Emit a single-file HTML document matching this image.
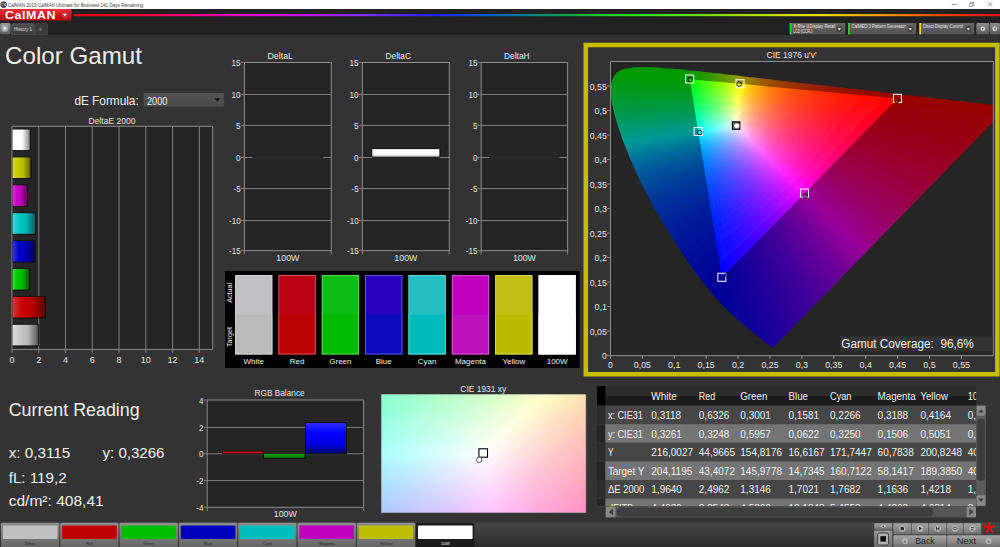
<!DOCTYPE html>
<html><head><meta charset="utf-8"><title>CalMAN Color Gamut</title>
<style>html,body{margin:0;padding:0;background:#333;overflow:hidden}svg{display:block}text{font-family:'Liberation Sans', sans-serif;white-space:pre}</style>
</head><body>
<svg width="1000" height="547" viewBox="0 0 1000 547">
<defs>
<linearGradient id="g1" x1="0" y1="0" x2="1" y2="1"><stop offset="0" stop-color="#30c040"/><stop offset="0.5" stop-color="#3060e0"/><stop offset="1" stop-color="#d030c0"/></linearGradient>
<linearGradient id="g2" x1="74" y1="0" x2="1000" y2="0" gradientUnits="userSpaceOnUse"><stop offset="0" stop-color="#e80010"/><stop offset="0.05" stop-color="#f00020"/><stop offset="0.1" stop-color="#ff0060"/><stop offset="0.15" stop-color="#f000a0"/><stop offset="0.21" stop-color="#e000e0"/><stop offset="0.28" stop-color="#a020f0"/><stop offset="0.31" stop-color="#8030ff"/><stop offset="0.39" stop-color="#2020ff"/><stop offset="0.45" stop-color="#0060c8"/><stop offset="0.49" stop-color="#008088"/><stop offset="0.54" stop-color="#00b040"/><stop offset="0.58" stop-color="#20d020"/><stop offset="0.63" stop-color="#40e010"/><stop offset="0.72" stop-color="#a0e000"/><stop offset="0.8" stop-color="#e8e000"/><stop offset="0.87" stop-color="#f0a000"/><stop offset="0.94" stop-color="#f04000"/><stop offset="1" stop-color="#e81010"/></linearGradient>
<linearGradient id="g3" x1="0" y1="0" x2="0" y2="1"><stop offset="0" stop-color="#ef3038"/><stop offset="0.45" stop-color="#dc1a22"/><stop offset="0.55" stop-color="#cc0f18"/><stop offset="1" stop-color="#b80a12"/></linearGradient>
<linearGradient id="g4" x1="0" y1="0" x2="0" y2="1"><stop offset="0" stop-color="#9a9a9a"/><stop offset="1" stop-color="#5a5a5a"/></linearGradient>
<linearGradient id="g5" x1="0" y1="0" x2="0" y2="1"><stop offset="0" stop-color="#525252"/><stop offset="1" stop-color="#3c3c3c"/></linearGradient>
<linearGradient id="g6" x1="0" y1="0" x2="0" y2="1"><stop offset="0" stop-color="#666666"/><stop offset="1" stop-color="#525252"/></linearGradient>
<linearGradient id="g7" x1="0" y1="0" x2="0" y2="1"><stop offset="0" stop-color="#666666"/><stop offset="1" stop-color="#525252"/></linearGradient>
<linearGradient id="g8" x1="0" y1="0" x2="0" y2="1"><stop offset="0" stop-color="#666666"/><stop offset="1" stop-color="#525252"/></linearGradient>
<linearGradient id="g9" x1="0" y1="0" x2="0" y2="1"><stop offset="0" stop-color="#8c8c8c"/><stop offset="1" stop-color="#5a5a5a"/></linearGradient>
<linearGradient id="g10" x1="0" y1="0" x2="0" y2="1"><stop offset="0" stop-color="#555555"/><stop offset="1" stop-color="#484848"/></linearGradient>
<linearGradient id="g11" x1="0" y1="0" x2="1" y2="0"><stop offset="0" stop-color="#ffffff"/><stop offset="0.55" stop-color="#ffffff"/><stop offset="1" stop-color="#8a8a8a"/></linearGradient>
<linearGradient id="g12" x1="0" y1="0" x2="1" y2="0"><stop offset="0" stop-color="#d8d838"/><stop offset="0.3" stop-color="#c8c800"/><stop offset="0.6" stop-color="#baba00"/><stop offset="1" stop-color="#5e5e00"/></linearGradient>
<linearGradient id="g13" x1="0" y1="0" x2="1" y2="0"><stop offset="0" stop-color="#d838d8"/><stop offset="0.3" stop-color="#c800c8"/><stop offset="0.6" stop-color="#ba00ba"/><stop offset="1" stop-color="#5e005e"/></linearGradient>
<linearGradient id="g14" x1="0" y1="0" x2="1" y2="0"><stop offset="0" stop-color="#38d8d8"/><stop offset="0.3" stop-color="#00c8c8"/><stop offset="0.6" stop-color="#00baba"/><stop offset="1" stop-color="#005e5e"/></linearGradient>
<linearGradient id="g15" x1="0" y1="0" x2="1" y2="0"><stop offset="0" stop-color="#3838d8"/><stop offset="0.3" stop-color="#0000c8"/><stop offset="0.6" stop-color="#0000ba"/><stop offset="1" stop-color="#00005e"/></linearGradient>
<linearGradient id="g16" x1="0" y1="0" x2="1" y2="0"><stop offset="0" stop-color="#38d838"/><stop offset="0.3" stop-color="#00c800"/><stop offset="0.6" stop-color="#00ba00"/><stop offset="1" stop-color="#005e00"/></linearGradient>
<linearGradient id="g17" x1="0" y1="0" x2="1" y2="0"><stop offset="0" stop-color="#d83838"/><stop offset="0.3" stop-color="#c80000"/><stop offset="0.6" stop-color="#ba0000"/><stop offset="1" stop-color="#5e0000"/></linearGradient>
<linearGradient id="g18" x1="0" y1="0" x2="1" y2="0"><stop offset="0" stop-color="#dcdcdc"/><stop offset="0.3" stop-color="#c8c8c8"/><stop offset="0.6" stop-color="#bababa"/><stop offset="1" stop-color="#5e5e5e"/></linearGradient>
<linearGradient id="g19" x1="0" y1="0" x2="0" y2="1"><stop offset="0" stop-color="#ffffff"/><stop offset="0.55" stop-color="#ffffff"/><stop offset="0.8" stop-color="#e0e0e0"/><stop offset="1" stop-color="#8a8a8a"/></linearGradient>
<clipPath id="plotclip"><rect x="611" y="62" width="381.8" height="293.1"/></clipPath>
<clipPath id="locus" clip-path="url(#plotclip)"><path d="M773.88 346.82 773.83 346.81 773.78 346.79 773.73 346.82 773.67 346.89 773.58 346.9 773.47 346.87 773.36 346.86 773.29 346.94 773.24 347.03 773.18 347.09 773.09 347.12 772.94 347.13 772.76 347.12 772.55 347.09 772.37 347.09 772.18 347.1 771.95 347.07 771.7 347.01 771.38 346.88 770.91 346.62 770.31 346.26 769.63 345.8 768.87 345.25 768 344.59 767 343.81 765.84 342.9 764.53 341.85 763.09 340.65 761.51 339.29 759.77 337.8 757.87 336.2 755.75 334.45 753.38 332.49 750.76 330.33 747.88 327.96 744.79 325.41 741.46 322.63 737.85 319.54 733.92 316.07 729.73 312.2 725.28 307.89 720.44 302.92 714.99 296.87 708.77 289.49 701.93 280.89 694.7 271.23 687.09 260.49 679.15 248.6 671.02 235.72 662.83 222.15 654.73 208.19 646.94 194.01 639.79 179.89 633.49 166.18 627.96 153.12 623.18 140.89 619.23 129.73 616.12 119.78 613.81 111.05 612.21 103.41 611.24 96.81 610.88 91.18 611.07 86.31 611.76 82.1 612.96 78.53 614.61 75.53 616.66 73.1 619.08 71.21 621.8 69.81 624.75 68.81 627.9 68.15 631.24 67.74 634.72 67.48 638.32 67.35 641.94 67.29 645.56 67.3 649.2 67.36 652.9 67.47 656.67 67.63 660.55 67.85 664.54 68.11 668.66 68.42 672.92 68.77 677.33 69.16 681.9 69.59 686.66 70.06 691.6 70.56 696.75 71.1 702.11 71.67 707.68 72.28 713.5 72.92 719.55 73.59 725.86 74.3 732.42 75.04 739.24 75.82 746.33 76.63 753.7 77.47 761.33 78.35 769.22 79.26 777.37 80.19 785.77 81.16 794.41 82.15 803.25 83.16 812.28 84.2 821.48 85.25 830.82 86.33 840.19 87.41 849.43 88.47 858.48 89.51 867.44 90.54 876.38 91.56 885.16 92.57 893.59 93.53 901.63 94.45 909.3 95.33 916.63 96.17 923.58 96.97 930.1 97.72 936.21 98.42 941.89 99.07 947.19 99.68 952.13 100.25 956.73 100.77 961.01 101.26 965.04 101.73 968.88 102.17 972.5 102.58 975.88 102.97 979.04 103.34 981.97 103.67 984.68 103.98 987.17 104.27 989.4 104.53 991.35 104.75 993.1 104.95 994.72 105.14 996.18 105.31 997.5 105.46 998.67 105.59 999.69 105.71 1000.54 105.81 1001.25 105.89 1001.89 105.96 1002.52 106.03 1003.1 106.1 1003.62 106.16 1004.1 106.22 1004.57 106.27 1005.05 106.33 1005.52 106.38 1005.98 106.43 1006.41 106.48 1006.77 106.52 1007.01 106.55 1007.19 106.57 1007.35 106.59 1007.48 106.61 1007.59 106.62 1007.68 106.63 1007.71 106.63z"/></clipPath>
<filter id="sm" filterUnits="userSpaceOnUse" x="600" y="55" width="400" height="305"><feGaussianBlur stdDeviation="0.9"/></filter>
<linearGradient id="g20" x1="628.5" y1="0" x2="661.5" y2="0" gradientUnits="userSpaceOnUse"><stop offset="0" stop-color="#00ff00"/><stop offset="1" stop-color="#00ff00"/></linearGradient>
<linearGradient id="g21" x1="618.5" y1="0" x2="686.5" y2="0" gradientUnits="userSpaceOnUse"><stop offset="0" stop-color="#00ff00"/><stop offset="1" stop-color="#00ff00"/></linearGradient>
<linearGradient id="g22" x1="614.5" y1="0" x2="705.5" y2="0" gradientUnits="userSpaceOnUse"><stop offset="0" stop-color="#00ff00"/><stop offset="0.81" stop-color="#00ff00"/><stop offset="1" stop-color="#45ff00"/></linearGradient>
<linearGradient id="g23" x1="612.5" y1="0" x2="724.5" y2="0" gradientUnits="userSpaceOnUse"><stop offset="0" stop-color="#00ff02"/><stop offset="0.07" stop-color="#00ff00"/><stop offset="0.68" stop-color="#00ff00"/><stop offset="0.75" stop-color="#1eff00"/><stop offset="0.84" stop-color="#49ff00"/><stop offset="0.92" stop-color="#72ff00"/><stop offset="1" stop-color="#9fff00"/></linearGradient>
<linearGradient id="g24" x1="611.5" y1="0" x2="741.5" y2="0" gradientUnits="userSpaceOnUse"><stop offset="0" stop-color="#00ff08"/><stop offset="0.23" stop-color="#00ff00"/><stop offset="0.59" stop-color="#00ff00"/><stop offset="0.6" stop-color="#02ff00"/><stop offset="0.7" stop-color="#36ff00"/><stop offset="0.8" stop-color="#72ff00"/><stop offset="0.88" stop-color="#aaff00"/><stop offset="0.94" stop-color="#d2ff00"/><stop offset="0.99" stop-color="#fcff00"/><stop offset="1" stop-color="#fffc00"/></linearGradient>
<linearGradient id="g25" x1="609.5" y1="0" x2="759.5" y2="0" gradientUnits="userSpaceOnUse"><stop offset="0" stop-color="#00ff0d"/><stop offset="0.36" stop-color="#00ff00"/><stop offset="0.53" stop-color="#01ff00"/><stop offset="0.63" stop-color="#3aff00"/><stop offset="0.71" stop-color="#76ff00"/><stop offset="0.79" stop-color="#b6ff00"/><stop offset="0.87" stop-color="#fdff00"/><stop offset="0.88" stop-color="#fffb00"/><stop offset="0.91" stop-color="#ffe300"/><stop offset="0.93" stop-color="#ffcf00"/><stop offset="0.97" stop-color="#ffba00"/><stop offset="1" stop-color="#ffa700"/></linearGradient>
<linearGradient id="g26" x1="609.5" y1="0" x2="776.5" y2="0" gradientUnits="userSpaceOnUse"><stop offset="0" stop-color="#00ff13"/><stop offset="0.48" stop-color="#00ff00"/><stop offset="0.56" stop-color="#35ff00"/><stop offset="0.64" stop-color="#76ff00"/><stop offset="0.71" stop-color="#b6ff00"/><stop offset="0.78" stop-color="#feff00"/><stop offset="0.81" stop-color="#ffe800"/><stop offset="0.83" stop-color="#ffd300"/><stop offset="0.88" stop-color="#ffb100"/><stop offset="0.93" stop-color="#ff9300"/><stop offset="1" stop-color="#ff7700"/></linearGradient>
<linearGradient id="g27" x1="608.5" y1="0" x2="794.5" y2="0" gradientUnits="userSpaceOnUse"><stop offset="0" stop-color="#00ff18"/><stop offset="0.24" stop-color="#00ff10"/><stop offset="0.44" stop-color="#00ff06"/><stop offset="0.45" stop-color="#06ff05"/><stop offset="0.5" stop-color="#30ff02"/><stop offset="0.58" stop-color="#71ff00"/><stop offset="0.65" stop-color="#b6ff00"/><stop offset="0.71" stop-color="#fffe00"/><stop offset="0.74" stop-color="#ffe100"/><stop offset="0.76" stop-color="#ffc800"/><stop offset="0.8" stop-color="#ffb000"/><stop offset="0.83" stop-color="#ff9b00"/><stop offset="0.87" stop-color="#ff8700"/><stop offset="0.91" stop-color="#ff7400"/><stop offset="0.95" stop-color="#ff6400"/><stop offset="1" stop-color="#ff5500"/></linearGradient>
<linearGradient id="g28" x1="607.5" y1="0" x2="811.5" y2="0" gradientUnits="userSpaceOnUse"><stop offset="0" stop-color="#00ff1e"/><stop offset="0.22" stop-color="#00ff16"/><stop offset="0.41" stop-color="#01ff0d"/><stop offset="0.47" stop-color="#38ff09"/><stop offset="0.53" stop-color="#76ff04"/><stop offset="0.59" stop-color="#b7ff00"/><stop offset="0.65" stop-color="#faff00"/><stop offset="0.65" stop-color="#fffd00"/><stop offset="0.68" stop-color="#ffda00"/><stop offset="0.72" stop-color="#ffba00"/><stop offset="0.75" stop-color="#ffa000"/><stop offset="0.79" stop-color="#ff8800"/><stop offset="0.83" stop-color="#ff7300"/><stop offset="0.88" stop-color="#ff5f00"/><stop offset="0.94" stop-color="#ff4e00"/><stop offset="1" stop-color="#ff3e00"/></linearGradient>
<linearGradient id="g29" x1="607.5" y1="0" x2="828.5" y2="0" gradientUnits="userSpaceOnUse"><stop offset="0" stop-color="#00ff24"/><stop offset="0.38" stop-color="#00ff14"/><stop offset="0.43" stop-color="#37ff11"/><stop offset="0.49" stop-color="#75ff0d"/><stop offset="0.55" stop-color="#b7ff09"/><stop offset="0.6" stop-color="#fbff04"/><stop offset="0.6" stop-color="#fffc04"/><stop offset="0.62" stop-color="#ffe402"/><stop offset="0.64" stop-color="#ffcf00"/><stop offset="0.67" stop-color="#ffb100"/><stop offset="0.71" stop-color="#ff9500"/><stop offset="0.75" stop-color="#ff7a00"/><stop offset="0.8" stop-color="#ff6300"/><stop offset="0.86" stop-color="#ff4e00"/><stop offset="0.93" stop-color="#ff3c00"/><stop offset="1" stop-color="#ff2c00"/></linearGradient>
<linearGradient id="g30" x1="607.5" y1="0" x2="846.5" y2="0" gradientUnits="userSpaceOnUse"><stop offset="0" stop-color="#00ff2a"/><stop offset="0.35" stop-color="#00ff1c"/><stop offset="0.35" stop-color="#02ff1c"/><stop offset="0.39" stop-color="#2dff19"/><stop offset="0.45" stop-color="#70ff16"/><stop offset="0.5" stop-color="#b2ff12"/><stop offset="0.55" stop-color="#fdff0e"/><stop offset="0.56" stop-color="#fffb0d"/><stop offset="0.57" stop-color="#ffe20b"/><stop offset="0.59" stop-color="#ffce08"/><stop offset="0.62" stop-color="#ffac05"/><stop offset="0.67" stop-color="#ff8b01"/><stop offset="0.72" stop-color="#ff6e00"/><stop offset="0.77" stop-color="#ff5600"/><stop offset="0.84" stop-color="#ff4000"/><stop offset="0.91" stop-color="#ff2e00"/><stop offset="1" stop-color="#ff1e00"/></linearGradient>
<linearGradient id="g31" x1="607.5" y1="0" x2="863.5" y2="0" gradientUnits="userSpaceOnUse"><stop offset="0" stop-color="#00ff2f"/><stop offset="0.33" stop-color="#01ff24"/><stop offset="0.38" stop-color="#35ff21"/><stop offset="0.42" stop-color="#70ff1f"/><stop offset="0.47" stop-color="#b2ff1b"/><stop offset="0.49" stop-color="#d7ff1a"/><stop offset="0.52" stop-color="#feff18"/><stop offset="0.52" stop-color="#fff917"/><stop offset="0.54" stop-color="#ffe114"/><stop offset="0.55" stop-color="#ffcc11"/><stop offset="0.57" stop-color="#ffb60e"/><stop offset="0.59" stop-color="#ffa30b"/><stop offset="0.61" stop-color="#ff9008"/><stop offset="0.64" stop-color="#ff7f06"/><stop offset="0.69" stop-color="#ff6302"/><stop offset="0.75" stop-color="#ff4900"/><stop offset="0.82" stop-color="#ff3400"/><stop offset="0.9" stop-color="#ff2200"/><stop offset="1" stop-color="#ff1300"/></linearGradient>
<linearGradient id="g32" x1="607.5" y1="0" x2="881.5" y2="0" gradientUnits="userSpaceOnUse"><stop offset="0" stop-color="#00ff35"/><stop offset="0.31" stop-color="#00ff2c"/><stop offset="0.35" stop-color="#34ff2a"/><stop offset="0.4" stop-color="#74ff27"/><stop offset="0.44" stop-color="#b8ff25"/><stop offset="0.48" stop-color="#ffff22"/><stop offset="0.5" stop-color="#ffe61e"/><stop offset="0.51" stop-color="#ffcb19"/><stop offset="0.53" stop-color="#ffb515"/><stop offset="0.55" stop-color="#ff9e12"/><stop offset="0.58" stop-color="#ff8b0e"/><stop offset="0.6" stop-color="#ff7b0c"/><stop offset="0.62" stop-color="#ff6b09"/><stop offset="0.65" stop-color="#ff5c06"/><stop offset="0.72" stop-color="#ff4202"/><stop offset="0.8" stop-color="#ff2c00"/><stop offset="0.89" stop-color="#ff1900"/><stop offset="1" stop-color="#ff0900"/></linearGradient>
<linearGradient id="g33" x1="607.5" y1="0" x2="898.5" y2="0" gradientUnits="userSpaceOnUse"><stop offset="0" stop-color="#00ff3b"/><stop offset="0.29" stop-color="#00ff34"/><stop offset="0.3" stop-color="#07ff34"/><stop offset="0.33" stop-color="#2eff33"/><stop offset="0.37" stop-color="#6fff31"/><stop offset="0.41" stop-color="#b3ff2f"/><stop offset="0.45" stop-color="#faff2d"/><stop offset="0.45" stop-color="#fffe2c"/><stop offset="0.47" stop-color="#ffde26"/><stop offset="0.49" stop-color="#ffc521"/><stop offset="0.51" stop-color="#ffaf1c"/><stop offset="0.53" stop-color="#ff9918"/><stop offset="0.55" stop-color="#ff8414"/><stop offset="0.57" stop-color="#ff7310"/><stop offset="0.6" stop-color="#ff620d"/><stop offset="0.63" stop-color="#ff530a"/><stop offset="0.7" stop-color="#ff3904"/><stop offset="0.78" stop-color="#ff2300"/><stop offset="0.88" stop-color="#ff1100"/><stop offset="1" stop-color="#ff0200"/></linearGradient>
<linearGradient id="g34" x1="607.5" y1="0" x2="916.5" y2="0" gradientUnits="userSpaceOnUse"><stop offset="0" stop-color="#00ff41"/><stop offset="0.28" stop-color="#01ff3c"/><stop offset="0.31" stop-color="#37ff3b"/><stop offset="0.35" stop-color="#74ff3a"/><stop offset="0.39" stop-color="#adff39"/><stop offset="0.4" stop-color="#d3ff38"/><stop offset="0.42" stop-color="#fbff37"/><stop offset="0.43" stop-color="#fffc37"/><stop offset="0.44" stop-color="#ffdd2f"/><stop offset="0.46" stop-color="#ffc329"/><stop offset="0.48" stop-color="#ffaa23"/><stop offset="0.5" stop-color="#ff921e"/><stop offset="0.52" stop-color="#ff7e19"/><stop offset="0.55" stop-color="#ff6b14"/><stop offset="0.58" stop-color="#ff5a10"/><stop offset="0.61" stop-color="#ff4a0d"/><stop offset="0.65" stop-color="#ff3c09"/><stop offset="0.69" stop-color="#ff2e06"/><stop offset="0.79" stop-color="#ff1801"/><stop offset="0.86" stop-color="#ff0b00"/><stop offset="0.94" stop-color="#ff0100"/><stop offset="1" stop-color="#ff0000"/></linearGradient>
<linearGradient id="g35" x1="607.5" y1="0" x2="933.5" y2="0" gradientUnits="userSpaceOnUse"><stop offset="0" stop-color="#00ff47"/><stop offset="0.26" stop-color="#00ff45"/><stop offset="0.29" stop-color="#31ff44"/><stop offset="0.33" stop-color="#6eff44"/><stop offset="0.37" stop-color="#b3ff43"/><stop offset="0.4" stop-color="#fcff42"/><stop offset="0.4" stop-color="#fffb41"/><stop offset="0.42" stop-color="#ffdc39"/><stop offset="0.44" stop-color="#ffbd31"/><stop offset="0.46" stop-color="#ffa129"/><stop offset="0.48" stop-color="#ff8a23"/><stop offset="0.51" stop-color="#ff751d"/><stop offset="0.53" stop-color="#ff6218"/><stop offset="0.56" stop-color="#ff5214"/><stop offset="0.6" stop-color="#ff420f"/><stop offset="0.64" stop-color="#ff320b"/><stop offset="0.68" stop-color="#ff2508"/><stop offset="0.74" stop-color="#ff1904"/><stop offset="0.79" stop-color="#ff0e01"/><stop offset="0.9" stop-color="#ff0000"/><stop offset="1" stop-color="#ff0000"/></linearGradient>
<linearGradient id="g36" x1="607.5" y1="0" x2="950.5" y2="0" gradientUnits="userSpaceOnUse"><stop offset="0" stop-color="#00ff4d"/><stop offset="0.25" stop-color="#00ff4d"/><stop offset="0.25" stop-color="#03ff4d"/><stop offset="0.28" stop-color="#2bff4d"/><stop offset="0.31" stop-color="#68ff4d"/><stop offset="0.35" stop-color="#aeff4e"/><stop offset="0.36" stop-color="#d4ff4e"/><stop offset="0.38" stop-color="#fdff4e"/><stop offset="0.38" stop-color="#fffa4c"/><stop offset="0.4" stop-color="#ffd541"/><stop offset="0.42" stop-color="#ffb738"/><stop offset="0.44" stop-color="#ff9c2f"/><stop offset="0.46" stop-color="#ff8629"/><stop offset="0.49" stop-color="#ff6f22"/><stop offset="0.51" stop-color="#ff5d1c"/><stop offset="0.54" stop-color="#ff4c17"/><stop offset="0.58" stop-color="#ff3c12"/><stop offset="0.62" stop-color="#ff2b0d"/><stop offset="0.68" stop-color="#ff1d09"/><stop offset="0.74" stop-color="#ff1005"/><stop offset="0.8" stop-color="#ff0502"/><stop offset="0.85" stop-color="#ff0000"/><stop offset="1" stop-color="#ff0000"/></linearGradient>
<linearGradient id="g37" x1="608.5" y1="0" x2="968.5" y2="0" gradientUnits="userSpaceOnUse"><stop offset="0" stop-color="#00ff54"/><stop offset="0.24" stop-color="#01ff56"/><stop offset="0.27" stop-color="#39ff57"/><stop offset="0.3" stop-color="#78ff58"/><stop offset="0.33" stop-color="#bbff58"/><stop offset="0.36" stop-color="#ffff59"/><stop offset="0.38" stop-color="#ffd94c"/><stop offset="0.39" stop-color="#ffba42"/><stop offset="0.41" stop-color="#ff9e38"/><stop offset="0.44" stop-color="#ff8430"/><stop offset="0.46" stop-color="#ff6e28"/><stop offset="0.49" stop-color="#ff5921"/><stop offset="0.52" stop-color="#ff471b"/><stop offset="0.56" stop-color="#ff3615"/><stop offset="0.61" stop-color="#ff2610"/><stop offset="0.66" stop-color="#ff180b"/><stop offset="0.72" stop-color="#ff0b06"/><stop offset="0.8" stop-color="#ff0003"/><stop offset="0.87" stop-color="#ff0000"/><stop offset="1" stop-color="#ff0000"/></linearGradient>
<linearGradient id="g38" x1="608.5" y1="0" x2="985.5" y2="0" gradientUnits="userSpaceOnUse"><stop offset="0" stop-color="#00ff5a"/><stop offset="0.23" stop-color="#00ff5f"/><stop offset="0.26" stop-color="#38ff61"/><stop offset="0.29" stop-color="#72ff62"/><stop offset="0.32" stop-color="#b5ff63"/><stop offset="0.34" stop-color="#fffe64"/><stop offset="0.36" stop-color="#ffd756"/><stop offset="0.38" stop-color="#ffb94b"/><stop offset="0.4" stop-color="#ff993f"/><stop offset="0.42" stop-color="#ff8035"/><stop offset="0.45" stop-color="#ff682c"/><stop offset="0.47" stop-color="#ff5324"/><stop offset="0.51" stop-color="#ff411e"/><stop offset="0.54" stop-color="#ff3118"/><stop offset="0.59" stop-color="#ff2312"/><stop offset="0.64" stop-color="#ff150d"/><stop offset="0.69" stop-color="#ff0a09"/><stop offset="0.76" stop-color="#ff0005"/><stop offset="0.88" stop-color="#ff0000"/><stop offset="1" stop-color="#ff0000"/></linearGradient>
<linearGradient id="g39" x1="608.5" y1="0" x2="997.5" y2="0" gradientUnits="userSpaceOnUse"><stop offset="0" stop-color="#00ff60"/><stop offset="0.22" stop-color="#00ff69"/><stop offset="0.22" stop-color="#03ff69"/><stop offset="0.24" stop-color="#2dff6a"/><stop offset="0.28" stop-color="#6cff6c"/><stop offset="0.3" stop-color="#a8ff6e"/><stop offset="0.32" stop-color="#d0ff6f"/><stop offset="0.33" stop-color="#faff71"/><stop offset="0.33" stop-color="#fffc70"/><stop offset="0.35" stop-color="#ffd660"/><stop offset="0.37" stop-color="#ffb352"/><stop offset="0.39" stop-color="#ff9445"/><stop offset="0.41" stop-color="#ff7c3b"/><stop offset="0.43" stop-color="#ff6431"/><stop offset="0.46" stop-color="#ff5029"/><stop offset="0.5" stop-color="#ff3e21"/><stop offset="0.53" stop-color="#ff2d1b"/><stop offset="0.58" stop-color="#ff1f15"/><stop offset="0.62" stop-color="#ff1410"/><stop offset="0.73" stop-color="#ff0008"/><stop offset="0.91" stop-color="#ff0000"/><stop offset="1" stop-color="#ff0000"/></linearGradient>
<linearGradient id="g40" x1="609.5" y1="0" x2="997.5" y2="0" gradientUnits="userSpaceOnUse"><stop offset="0" stop-color="#00ff67"/><stop offset="0.22" stop-color="#01ff72"/><stop offset="0.25" stop-color="#36ff75"/><stop offset="0.28" stop-color="#72ff77"/><stop offset="0.3" stop-color="#b5ff7a"/><stop offset="0.33" stop-color="#fbff7d"/><stop offset="0.33" stop-color="#fffb7b"/><stop offset="0.35" stop-color="#ffd46a"/><stop offset="0.37" stop-color="#ffb15a"/><stop offset="0.39" stop-color="#ff934c"/><stop offset="0.41" stop-color="#ff7b42"/><stop offset="0.43" stop-color="#ff6337"/><stop offset="0.46" stop-color="#ff4f2e"/><stop offset="0.49" stop-color="#ff3c26"/><stop offset="0.53" stop-color="#ff2c1e"/><stop offset="0.57" stop-color="#ff1f19"/><stop offset="0.62" stop-color="#ff1414"/><stop offset="0.72" stop-color="#ff000b"/><stop offset="0.87" stop-color="#ff0003"/><stop offset="1" stop-color="#ff0000"/></linearGradient>
<linearGradient id="g41" x1="609.5" y1="0" x2="997.5" y2="0" gradientUnits="userSpaceOnUse"><stop offset="0" stop-color="#00ff6e"/><stop offset="0.12" stop-color="#00ff74"/><stop offset="0.22" stop-color="#00ff7c"/><stop offset="0.25" stop-color="#35ff7f"/><stop offset="0.28" stop-color="#71ff82"/><stop offset="0.3" stop-color="#b6ff86"/><stop offset="0.33" stop-color="#fdff89"/><stop offset="0.33" stop-color="#fffa87"/><stop offset="0.35" stop-color="#ffd374"/><stop offset="0.37" stop-color="#ffb063"/><stop offset="0.39" stop-color="#ff9154"/><stop offset="0.41" stop-color="#ff7949"/><stop offset="0.43" stop-color="#ff623d"/><stop offset="0.46" stop-color="#ff4e33"/><stop offset="0.49" stop-color="#ff3b2a"/><stop offset="0.53" stop-color="#ff2c23"/><stop offset="0.57" stop-color="#ff1f1d"/><stop offset="0.61" stop-color="#ff1317"/><stop offset="0.72" stop-color="#ff000e"/><stop offset="0.84" stop-color="#ff0006"/><stop offset="1" stop-color="#ff0001"/></linearGradient>
<linearGradient id="g42" x1="610.5" y1="0" x2="997.5" y2="0" gradientUnits="userSpaceOnUse"><stop offset="0" stop-color="#00ff75"/><stop offset="0.12" stop-color="#00ff7c"/><stop offset="0.22" stop-color="#00ff86"/><stop offset="0.22" stop-color="#03ff86"/><stop offset="0.24" stop-color="#2aff89"/><stop offset="0.27" stop-color="#6bff8d"/><stop offset="0.3" stop-color="#b0ff91"/><stop offset="0.32" stop-color="#d9ff94"/><stop offset="0.33" stop-color="#feff96"/><stop offset="0.33" stop-color="#fff893"/><stop offset="0.35" stop-color="#ffd17e"/><stop offset="0.36" stop-color="#ffae6c"/><stop offset="0.39" stop-color="#ff905c"/><stop offset="0.41" stop-color="#ff784f"/><stop offset="0.43" stop-color="#ff6043"/><stop offset="0.46" stop-color="#ff4c39"/><stop offset="0.49" stop-color="#ff3a2f"/><stop offset="0.53" stop-color="#ff2b27"/><stop offset="0.57" stop-color="#ff1e20"/><stop offset="0.61" stop-color="#ff131a"/><stop offset="0.71" stop-color="#ff0010"/><stop offset="0.84" stop-color="#ff0008"/><stop offset="1" stop-color="#ff0002"/></linearGradient>
<linearGradient id="g43" x1="610.5" y1="0" x2="997.5" y2="0" gradientUnits="userSpaceOnUse"><stop offset="0" stop-color="#00ff7b"/><stop offset="0.12" stop-color="#00ff85"/><stop offset="0.22" stop-color="#00ff90"/><stop offset="0.22" stop-color="#01ff90"/><stop offset="0.25" stop-color="#38ff95"/><stop offset="0.28" stop-color="#77ff99"/><stop offset="0.3" stop-color="#b7ff9e"/><stop offset="0.33" stop-color="#fffea3"/><stop offset="0.34" stop-color="#ffe997"/><stop offset="0.34" stop-color="#ffd68c"/><stop offset="0.36" stop-color="#ffb178"/><stop offset="0.38" stop-color="#ff9568"/><stop offset="0.4" stop-color="#ff7958"/><stop offset="0.43" stop-color="#ff614a"/><stop offset="0.46" stop-color="#ff4d3f"/><stop offset="0.49" stop-color="#ff3a34"/><stop offset="0.53" stop-color="#ff2b2c"/><stop offset="0.57" stop-color="#ff1e24"/><stop offset="0.61" stop-color="#ff131e"/><stop offset="0.71" stop-color="#ff0013"/><stop offset="0.83" stop-color="#ff000b"/><stop offset="1" stop-color="#ff0004"/></linearGradient>
<linearGradient id="g44" x1="611.5" y1="0" x2="997.5" y2="0" gradientUnits="userSpaceOnUse"><stop offset="0" stop-color="#00ff83"/><stop offset="0.12" stop-color="#00ff8e"/><stop offset="0.22" stop-color="#00ff9b"/><stop offset="0.25" stop-color="#37ffa0"/><stop offset="0.27" stop-color="#76ffa5"/><stop offset="0.3" stop-color="#b0ffaa"/><stop offset="0.32" stop-color="#f9ffb1"/><stop offset="0.33" stop-color="#fffdb0"/><stop offset="0.33" stop-color="#ffe7a3"/><stop offset="0.34" stop-color="#ffd497"/><stop offset="0.36" stop-color="#ffb081"/><stop offset="0.38" stop-color="#ff9370"/><stop offset="0.4" stop-color="#ff775f"/><stop offset="0.43" stop-color="#ff6050"/><stop offset="0.46" stop-color="#ff4b44"/><stop offset="0.49" stop-color="#ff3939"/><stop offset="0.53" stop-color="#ff2a30"/><stop offset="0.56" stop-color="#ff1d28"/><stop offset="0.6" stop-color="#ff1222"/><stop offset="0.7" stop-color="#ff0017"/><stop offset="0.83" stop-color="#ff000d"/><stop offset="1" stop-color="#ff0005"/></linearGradient>
<linearGradient id="g45" x1="611.5" y1="0" x2="997.5" y2="0" gradientUnits="userSpaceOnUse"><stop offset="0" stop-color="#00ff8a"/><stop offset="0.12" stop-color="#00ff96"/><stop offset="0.22" stop-color="#00ffa5"/><stop offset="0.22" stop-color="#08ffa6"/><stop offset="0.24" stop-color="#31ffaa"/><stop offset="0.27" stop-color="#70ffb1"/><stop offset="0.3" stop-color="#b1ffb7"/><stop offset="0.32" stop-color="#fbffbf"/><stop offset="0.33" stop-color="#fffbbd"/><stop offset="0.33" stop-color="#ffe5ae"/><stop offset="0.34" stop-color="#ffd2a2"/><stop offset="0.36" stop-color="#ffae8a"/><stop offset="0.38" stop-color="#ff9278"/><stop offset="0.4" stop-color="#ff7666"/><stop offset="0.43" stop-color="#ff5e57"/><stop offset="0.46" stop-color="#ff4a4a"/><stop offset="0.49" stop-color="#ff383e"/><stop offset="0.53" stop-color="#ff2834"/><stop offset="0.6" stop-color="#ff1225"/><stop offset="0.69" stop-color="#ff001a"/><stop offset="0.83" stop-color="#ff000f"/><stop offset="1" stop-color="#ff0007"/></linearGradient>
<linearGradient id="g46" x1="612.5" y1="0" x2="997.5" y2="0" gradientUnits="userSpaceOnUse"><stop offset="0" stop-color="#00ff91"/><stop offset="0.12" stop-color="#00ff9f"/><stop offset="0.22" stop-color="#00ffb0"/><stop offset="0.22" stop-color="#02ffb1"/><stop offset="0.24" stop-color="#35ffb7"/><stop offset="0.27" stop-color="#6fffbd"/><stop offset="0.3" stop-color="#b1ffc4"/><stop offset="0.32" stop-color="#fcffcd"/><stop offset="0.32" stop-color="#fffaca"/><stop offset="0.33" stop-color="#ffe4ba"/><stop offset="0.34" stop-color="#ffd1ad"/><stop offset="0.36" stop-color="#ffac94"/><stop offset="0.38" stop-color="#ff9081"/><stop offset="0.4" stop-color="#ff746d"/><stop offset="0.43" stop-color="#ff5d5d"/><stop offset="0.45" stop-color="#ff494f"/><stop offset="0.49" stop-color="#ff3742"/><stop offset="0.52" stop-color="#ff2738"/><stop offset="0.6" stop-color="#ff1229"/><stop offset="0.69" stop-color="#ff001d"/><stop offset="0.82" stop-color="#ff0011"/><stop offset="1" stop-color="#ff0008"/></linearGradient>
<linearGradient id="g47" x1="612.5" y1="0" x2="997.5" y2="0" gradientUnits="userSpaceOnUse"><stop offset="0" stop-color="#00ff98"/><stop offset="0.12" stop-color="#00ffa8"/><stop offset="0.22" stop-color="#00ffbc"/><stop offset="0.24" stop-color="#34ffc2"/><stop offset="0.27" stop-color="#6fffca"/><stop offset="0.3" stop-color="#b2ffd2"/><stop offset="0.31" stop-color="#d6ffd7"/><stop offset="0.32" stop-color="#feffdc"/><stop offset="0.32" stop-color="#fff8d7"/><stop offset="0.33" stop-color="#ffe2c7"/><stop offset="0.34" stop-color="#ffcfb9"/><stop offset="0.36" stop-color="#ffab9e"/><stop offset="0.38" stop-color="#ff8f89"/><stop offset="0.4" stop-color="#ff7375"/><stop offset="0.43" stop-color="#ff5b63"/><stop offset="0.45" stop-color="#ff4755"/><stop offset="0.49" stop-color="#ff3547"/><stop offset="0.52" stop-color="#ff263c"/><stop offset="0.59" stop-color="#ff112d"/><stop offset="0.68" stop-color="#ff0020"/><stop offset="0.82" stop-color="#ff0014"/><stop offset="1" stop-color="#ff000a"/></linearGradient>
<linearGradient id="g48" x1="613.5" y1="0" x2="996.5" y2="0" gradientUnits="userSpaceOnUse"><stop offset="0" stop-color="#00ffa0"/><stop offset="0.12" stop-color="#00ffb2"/><stop offset="0.22" stop-color="#00ffc7"/><stop offset="0.22" stop-color="#09ffc9"/><stop offset="0.24" stop-color="#33ffce"/><stop offset="0.27" stop-color="#75ffd8"/><stop offset="0.3" stop-color="#b9ffe1"/><stop offset="0.32" stop-color="#ffffeb"/><stop offset="0.33" stop-color="#ffe8d8"/><stop offset="0.34" stop-color="#ffd4c9"/><stop offset="0.35" stop-color="#ffb3af"/><stop offset="0.37" stop-color="#ff9497"/><stop offset="0.39" stop-color="#ff7780"/><stop offset="0.42" stop-color="#ff5e6d"/><stop offset="0.45" stop-color="#ff495d"/><stop offset="0.48" stop-color="#ff374e"/><stop offset="0.52" stop-color="#ff2742"/><stop offset="0.59" stop-color="#ff1231"/><stop offset="0.68" stop-color="#ff0023"/><stop offset="0.82" stop-color="#ff0016"/><stop offset="1" stop-color="#ff000c"/></linearGradient>
<linearGradient id="g49" x1="613.5" y1="0" x2="994.5" y2="0" gradientUnits="userSpaceOnUse"><stop offset="0" stop-color="#00ffa8"/><stop offset="0.12" stop-color="#00ffbb"/><stop offset="0.22" stop-color="#00ffd3"/><stop offset="0.22" stop-color="#02ffd4"/><stop offset="0.25" stop-color="#38ffdc"/><stop offset="0.27" stop-color="#75ffe5"/><stop offset="0.3" stop-color="#b2ffee"/><stop offset="0.32" stop-color="#f8fff9"/><stop offset="0.32" stop-color="#fffdf9"/><stop offset="0.33" stop-color="#ffe6e5"/><stop offset="0.34" stop-color="#ffd2d5"/><stop offset="0.35" stop-color="#ffb1b9"/><stop offset="0.37" stop-color="#ff93a0"/><stop offset="0.4" stop-color="#ff7588"/><stop offset="0.42" stop-color="#ff5f75"/><stop offset="0.45" stop-color="#ff4a64"/><stop offset="0.48" stop-color="#ff3754"/><stop offset="0.52" stop-color="#ff2747"/><stop offset="0.59" stop-color="#ff1135"/><stop offset="0.68" stop-color="#ff0027"/><stop offset="0.82" stop-color="#ff0019"/><stop offset="1" stop-color="#ff000e"/></linearGradient>
<linearGradient id="g50" x1="614.5" y1="0" x2="992.5" y2="0" gradientUnits="userSpaceOnUse"><stop offset="0" stop-color="#00ffb0"/><stop offset="0.12" stop-color="#00ffc6"/><stop offset="0.22" stop-color="#00ffe0"/><stop offset="0.24" stop-color="#31ffe8"/><stop offset="0.27" stop-color="#67fff1"/><stop offset="0.28" stop-color="#8ffff7"/><stop offset="0.3" stop-color="#bafffe"/><stop offset="0.33" stop-color="#fef3ff"/><stop offset="0.34" stop-color="#ffcadb"/><stop offset="0.36" stop-color="#ffaac0"/><stop offset="0.38" stop-color="#ff8da6"/><stop offset="0.4" stop-color="#ff718d"/><stop offset="0.42" stop-color="#ff5b7a"/><stop offset="0.45" stop-color="#ff4768"/><stop offset="0.49" stop-color="#ff3458"/><stop offset="0.52" stop-color="#ff254b"/><stop offset="0.59" stop-color="#ff1039"/><stop offset="0.67" stop-color="#ff002a"/><stop offset="0.81" stop-color="#ff001b"/><stop offset="1" stop-color="#ff000f"/></linearGradient>
<linearGradient id="g51" x1="615.5" y1="0" x2="990.5" y2="0" gradientUnits="userSpaceOnUse"><stop offset="0" stop-color="#00ffb8"/><stop offset="0.12" stop-color="#00ffcf"/><stop offset="0.17" stop-color="#00ffdd"/><stop offset="0.22" stop-color="#00ffec"/><stop offset="0.22" stop-color="#04ffed"/><stop offset="0.24" stop-color="#2afff4"/><stop offset="0.27" stop-color="#6dfeff"/><stop offset="0.3" stop-color="#b7f0ff"/><stop offset="0.33" stop-color="#fee2ff"/><stop offset="0.33" stop-color="#ffdcf9"/><stop offset="0.35" stop-color="#ffb8d8"/><stop offset="0.37" stop-color="#ff97ba"/><stop offset="0.39" stop-color="#ff7ea3"/><stop offset="0.41" stop-color="#ff658b"/><stop offset="0.44" stop-color="#ff5078"/><stop offset="0.47" stop-color="#ff3e67"/><stop offset="0.5" stop-color="#ff2d57"/><stop offset="0.54" stop-color="#ff1f4b"/><stop offset="0.6" stop-color="#ff0e3a"/><stop offset="0.67" stop-color="#ff002e"/><stop offset="0.82" stop-color="#ff001e"/><stop offset="1" stop-color="#ff0011"/></linearGradient>
<linearGradient id="g52" x1="615.5" y1="0" x2="988.5" y2="0" gradientUnits="userSpaceOnUse"><stop offset="0" stop-color="#00ffc0"/><stop offset="0.12" stop-color="#00ffd9"/><stop offset="0.17" stop-color="#00ffe8"/><stop offset="0.22" stop-color="#00fff8"/><stop offset="0.22" stop-color="#02fff9"/><stop offset="0.24" stop-color="#1dffff"/><stop offset="0.25" stop-color="#39faff"/><stop offset="0.29" stop-color="#9be6ff"/><stop offset="0.34" stop-color="#fed3ff"/><stop offset="0.34" stop-color="#ffcdfa"/><stop offset="0.36" stop-color="#ffacd9"/><stop offset="0.38" stop-color="#ff8ebc"/><stop offset="0.4" stop-color="#ff73a2"/><stop offset="0.42" stop-color="#ff5f8e"/><stop offset="0.45" stop-color="#ff4b7a"/><stop offset="0.47" stop-color="#ff396a"/><stop offset="0.51" stop-color="#ff295a"/><stop offset="0.55" stop-color="#ff1c4d"/><stop offset="0.61" stop-color="#ff0d3e"/><stop offset="0.67" stop-color="#ff0031"/><stop offset="0.82" stop-color="#ff0020"/><stop offset="1" stop-color="#ff0013"/></linearGradient>
<linearGradient id="g53" x1="616.5" y1="0" x2="986.5" y2="0" gradientUnits="userSpaceOnUse"><stop offset="0" stop-color="#00ffc9"/><stop offset="0.11" stop-color="#00ffe1"/><stop offset="0.16" stop-color="#00fff0"/><stop offset="0.2" stop-color="#00ffff"/><stop offset="0.22" stop-color="#00f8ff"/><stop offset="0.28" stop-color="#7ddfff"/><stop offset="0.31" stop-color="#bcd2ff"/><stop offset="0.34" stop-color="#fec4ff"/><stop offset="0.35" stop-color="#ffbffa"/><stop offset="0.36" stop-color="#ffa1da"/><stop offset="0.38" stop-color="#ff85be"/><stop offset="0.4" stop-color="#ff6ca5"/><stop offset="0.43" stop-color="#ff578f"/><stop offset="0.45" stop-color="#ff447b"/><stop offset="0.48" stop-color="#ff346b"/><stop offset="0.52" stop-color="#ff255c"/><stop offset="0.56" stop-color="#ff194f"/><stop offset="0.61" stop-color="#ff0b41"/><stop offset="0.67" stop-color="#ff0035"/><stop offset="0.81" stop-color="#ff0023"/><stop offset="1" stop-color="#ff0015"/></linearGradient>
<linearGradient id="g54" x1="617.5" y1="0" x2="984.5" y2="0" gradientUnits="userSpaceOnUse"><stop offset="0" stop-color="#00ffd2"/><stop offset="0.09" stop-color="#00ffe6"/><stop offset="0.17" stop-color="#00ffff"/><stop offset="0.22" stop-color="#00ecff"/><stop offset="0.24" stop-color="#27e4ff"/><stop offset="0.28" stop-color="#76d3ff"/><stop offset="0.32" stop-color="#b9c5ff"/><stop offset="0.35" stop-color="#feb7ff"/><stop offset="0.35" stop-color="#ffb2fa"/><stop offset="0.37" stop-color="#ff96dc"/><stop offset="0.39" stop-color="#ff7cc0"/><stop offset="0.41" stop-color="#ff65a7"/><stop offset="0.43" stop-color="#ff5191"/><stop offset="0.46" stop-color="#ff3f7e"/><stop offset="0.49" stop-color="#ff2f6c"/><stop offset="0.53" stop-color="#ff215d"/><stop offset="0.57" stop-color="#ff1550"/><stop offset="0.61" stop-color="#ff0a44"/><stop offset="0.67" stop-color="#ff0039"/><stop offset="0.74" stop-color="#ff002f"/><stop offset="0.81" stop-color="#ff0026"/><stop offset="1" stop-color="#ff0017"/></linearGradient>
<linearGradient id="g55" x1="617.5" y1="0" x2="982.5" y2="0" gradientUnits="userSpaceOnUse"><stop offset="0" stop-color="#00ffda"/><stop offset="0.07" stop-color="#00ffeb"/><stop offset="0.14" stop-color="#00ffff"/><stop offset="0.22" stop-color="#00e1ff"/><stop offset="0.22" stop-color="#02e0ff"/><stop offset="0.27" stop-color="#51cfff"/><stop offset="0.31" stop-color="#a5bdff"/><stop offset="0.36" stop-color="#feabff"/><stop offset="0.36" stop-color="#ffa6fa"/><stop offset="0.38" stop-color="#ff8cdd"/><stop offset="0.39" stop-color="#ff77c5"/><stop offset="0.41" stop-color="#ff64af"/><stop offset="0.43" stop-color="#ff529a"/><stop offset="0.46" stop-color="#ff4187"/><stop offset="0.48" stop-color="#ff3377"/><stop offset="0.52" stop-color="#ff2668"/><stop offset="0.55" stop-color="#ff1b5c"/><stop offset="0.6" stop-color="#ff0c4b"/><stop offset="0.67" stop-color="#ff003d"/><stop offset="0.73" stop-color="#ff0032"/><stop offset="0.81" stop-color="#ff0029"/><stop offset="1" stop-color="#ff0019"/></linearGradient>
<linearGradient id="g56" x1="618.5" y1="0" x2="980.5" y2="0" gradientUnits="userSpaceOnUse"><stop offset="0" stop-color="#00ffe3"/><stop offset="0.1" stop-color="#00ffff"/><stop offset="0.22" stop-color="#00d6ff"/><stop offset="0.26" stop-color="#3ec8ff"/><stop offset="0.3" stop-color="#7fbaff"/><stop offset="0.36" stop-color="#fe9fff"/><stop offset="0.36" stop-color="#ff9bfb"/><stop offset="0.38" stop-color="#ff83de"/><stop offset="0.4" stop-color="#ff70c7"/><stop offset="0.42" stop-color="#ff5db1"/><stop offset="0.44" stop-color="#ff4c9c"/><stop offset="0.46" stop-color="#ff3d8a"/><stop offset="0.49" stop-color="#ff2f79"/><stop offset="0.52" stop-color="#ff236b"/><stop offset="0.56" stop-color="#ff185e"/><stop offset="0.6" stop-color="#ff0b4f"/><stop offset="0.66" stop-color="#ff0041"/><stop offset="0.73" stop-color="#ff0036"/><stop offset="0.81" stop-color="#ff002c"/><stop offset="1" stop-color="#ff001b"/></linearGradient>
<linearGradient id="g57" x1="619.5" y1="0" x2="979.5" y2="0" gradientUnits="userSpaceOnUse"><stop offset="0" stop-color="#00ffed"/><stop offset="0.07" stop-color="#00ffff"/><stop offset="0.22" stop-color="#00ccff"/><stop offset="0.24" stop-color="#1fc5ff"/><stop offset="0.28" stop-color="#61b7ff"/><stop offset="0.33" stop-color="#b0a5ff"/><stop offset="0.37" stop-color="#fe94ff"/><stop offset="0.37" stop-color="#ff91fb"/><stop offset="0.39" stop-color="#ff7adf"/><stop offset="0.4" stop-color="#ff68c8"/><stop offset="0.42" stop-color="#ff57b2"/><stop offset="0.44" stop-color="#ff479e"/><stop offset="0.47" stop-color="#ff388c"/><stop offset="0.5" stop-color="#ff2b7c"/><stop offset="0.53" stop-color="#ff1f6d"/><stop offset="0.56" stop-color="#ff1560"/><stop offset="0.61" stop-color="#ff0a52"/><stop offset="0.66" stop-color="#ff0046"/><stop offset="0.73" stop-color="#ff0039"/><stop offset="0.81" stop-color="#ff002e"/><stop offset="1" stop-color="#ff001d"/></linearGradient>
<linearGradient id="g58" x1="620.5" y1="0" x2="977.5" y2="0" gradientUnits="userSpaceOnUse"><stop offset="0" stop-color="#00fff7"/><stop offset="0.03" stop-color="#00ffff"/><stop offset="0.13" stop-color="#00e2ff"/><stop offset="0.22" stop-color="#00c3ff"/><stop offset="0.22" stop-color="#02c2ff"/><stop offset="0.28" stop-color="#58afff"/><stop offset="0.32" stop-color="#a99dff"/><stop offset="0.37" stop-color="#fe8aff"/><stop offset="0.38" stop-color="#ff87fb"/><stop offset="0.39" stop-color="#ff72e0"/><stop offset="0.41" stop-color="#ff61ca"/><stop offset="0.43" stop-color="#ff51b4"/><stop offset="0.45" stop-color="#ff42a0"/><stop offset="0.48" stop-color="#ff348e"/><stop offset="0.5" stop-color="#ff297f"/><stop offset="0.53" stop-color="#ff1d70"/><stop offset="0.57" stop-color="#ff1363"/><stop offset="0.61" stop-color="#ff0956"/><stop offset="0.66" stop-color="#ff004a"/><stop offset="0.73" stop-color="#ff003d"/><stop offset="0.8" stop-color="#ff0031"/><stop offset="0.89" stop-color="#ff0028"/><stop offset="1" stop-color="#ff001f"/></linearGradient>
<linearGradient id="g59" x1="620.5" y1="0" x2="975.5" y2="0" gradientUnits="userSpaceOnUse"><stop offset="0" stop-color="#00feff"/><stop offset="0.12" stop-color="#00ddff"/><stop offset="0.23" stop-color="#01baff"/><stop offset="0.3" stop-color="#7c9eff"/><stop offset="0.34" stop-color="#be8fff"/><stop offset="0.38" stop-color="#fe81ff"/><stop offset="0.38" stop-color="#ff7efb"/><stop offset="0.4" stop-color="#ff6ae1"/><stop offset="0.42" stop-color="#ff5bcb"/><stop offset="0.44" stop-color="#ff4bb6"/><stop offset="0.46" stop-color="#ff3da2"/><stop offset="0.48" stop-color="#ff3090"/><stop offset="0.51" stop-color="#ff2581"/><stop offset="0.54" stop-color="#ff1a73"/><stop offset="0.57" stop-color="#ff1065"/><stop offset="0.65" stop-color="#ff004f"/><stop offset="0.72" stop-color="#ff0041"/><stop offset="0.8" stop-color="#ff0035"/><stop offset="0.89" stop-color="#ff002a"/><stop offset="1" stop-color="#ff0022"/></linearGradient>
<linearGradient id="g60" x1="621.5" y1="0" x2="973.5" y2="0" gradientUnits="userSpaceOnUse"><stop offset="0" stop-color="#00f4ff"/><stop offset="0.12" stop-color="#00d4ff"/><stop offset="0.22" stop-color="#00b2ff"/><stop offset="0.25" stop-color="#25a9ff"/><stop offset="0.29" stop-color="#659bff"/><stop offset="0.34" stop-color="#b289ff"/><stop offset="0.39" stop-color="#fe78ff"/><stop offset="0.39" stop-color="#ff75fb"/><stop offset="0.41" stop-color="#ff63e2"/><stop offset="0.42" stop-color="#ff54cc"/><stop offset="0.44" stop-color="#ff46b8"/><stop offset="0.47" stop-color="#ff38a4"/><stop offset="0.49" stop-color="#ff2c92"/><stop offset="0.52" stop-color="#ff2284"/><stop offset="0.55" stop-color="#ff1775"/><stop offset="0.58" stop-color="#ff0e67"/><stop offset="0.65" stop-color="#ff0053"/><stop offset="0.75" stop-color="#ff003f"/><stop offset="0.86" stop-color="#ff0030"/><stop offset="1" stop-color="#ff0024"/></linearGradient>
<linearGradient id="g61" x1="622.5" y1="0" x2="971.5" y2="0" gradientUnits="userSpaceOnUse"><stop offset="0" stop-color="#00ebff"/><stop offset="0.11" stop-color="#00ccff"/><stop offset="0.22" stop-color="#00aaff"/><stop offset="0.23" stop-color="#02a9ff"/><stop offset="0.23" stop-color="#0aa8ff"/><stop offset="0.29" stop-color="#5d95ff"/><stop offset="0.34" stop-color="#ab82ff"/><stop offset="0.39" stop-color="#fe6fff"/><stop offset="0.4" stop-color="#ff6dfb"/><stop offset="0.41" stop-color="#ff5ce2"/><stop offset="0.43" stop-color="#ff4ece"/><stop offset="0.45" stop-color="#ff41b9"/><stop offset="0.47" stop-color="#ff34a6"/><stop offset="0.5" stop-color="#ff2894"/><stop offset="0.52" stop-color="#ff1e86"/><stop offset="0.59" stop-color="#ff0c6a"/><stop offset="0.65" stop-color="#ff0058"/><stop offset="0.75" stop-color="#ff0042"/><stop offset="0.87" stop-color="#ff0033"/><stop offset="1" stop-color="#ff0026"/></linearGradient>
<linearGradient id="g62" x1="623.5" y1="0" x2="969.5" y2="0" gradientUnits="userSpaceOnUse"><stop offset="0" stop-color="#00e2ff"/><stop offset="0.12" stop-color="#00c3ff"/><stop offset="0.23" stop-color="#01a2ff"/><stop offset="0.3" stop-color="#698aff"/><stop offset="0.35" stop-color="#b279ff"/><stop offset="0.4" stop-color="#fe67ff"/><stop offset="0.4" stop-color="#ff65fc"/><stop offset="0.42" stop-color="#ff55e3"/><stop offset="0.44" stop-color="#ff48cf"/><stop offset="0.46" stop-color="#ff3cbb"/><stop offset="0.48" stop-color="#ff30a8"/><stop offset="0.51" stop-color="#ff2496"/><stop offset="0.53" stop-color="#ff1b88"/><stop offset="0.6" stop-color="#ff0a6c"/><stop offset="0.64" stop-color="#ff005d"/><stop offset="0.7" stop-color="#ff0050"/><stop offset="0.76" stop-color="#ff0044"/><stop offset="0.87" stop-color="#ff0035"/><stop offset="1" stop-color="#ff0028"/></linearGradient>
<linearGradient id="g63" x1="623.5" y1="0" x2="967.5" y2="0" gradientUnits="userSpaceOnUse"><stop offset="0" stop-color="#00dbff"/><stop offset="0.12" stop-color="#00bcff"/><stop offset="0.23" stop-color="#009cff"/><stop offset="0.3" stop-color="#6584ff"/><stop offset="0.35" stop-color="#af72ff"/><stop offset="0.41" stop-color="#fe60ff"/><stop offset="0.41" stop-color="#ff5efc"/><stop offset="0.43" stop-color="#ff4fe4"/><stop offset="0.44" stop-color="#ff43d0"/><stop offset="0.47" stop-color="#ff37bc"/><stop offset="0.49" stop-color="#ff2ba9"/><stop offset="0.51" stop-color="#ff2198"/><stop offset="0.54" stop-color="#ff1889"/><stop offset="0.6" stop-color="#ff086f"/><stop offset="0.64" stop-color="#ff0062"/><stop offset="0.7" stop-color="#ff0054"/><stop offset="0.76" stop-color="#ff0047"/><stop offset="0.87" stop-color="#ff0037"/><stop offset="1" stop-color="#ff002b"/></linearGradient>
<linearGradient id="g64" x1="624.5" y1="0" x2="965.5" y2="0" gradientUnits="userSpaceOnUse"><stop offset="0" stop-color="#00d3ff"/><stop offset="0.11" stop-color="#00b5ff"/><stop offset="0.23" stop-color="#0096ff"/><stop offset="0.23" stop-color="#0295ff"/><stop offset="0.24" stop-color="#1490ff"/><stop offset="0.3" stop-color="#617eff"/><stop offset="0.36" stop-color="#ad6cff"/><stop offset="0.41" stop-color="#fe59ff"/><stop offset="0.42" stop-color="#ff57fc"/><stop offset="0.43" stop-color="#ff49e5"/><stop offset="0.45" stop-color="#ff3ed1"/><stop offset="0.47" stop-color="#ff32be"/><stop offset="0.5" stop-color="#ff27ab"/><stop offset="0.52" stop-color="#ff1d9a"/><stop offset="0.55" stop-color="#ff158b"/><stop offset="0.61" stop-color="#ff0671"/><stop offset="0.64" stop-color="#ff0068"/><stop offset="0.7" stop-color="#ff0057"/><stop offset="0.77" stop-color="#ff0049"/><stop offset="0.88" stop-color="#ff003a"/><stop offset="1" stop-color="#ff002d"/></linearGradient>
<linearGradient id="g65" x1="625.5" y1="0" x2="963.5" y2="0" gradientUnits="userSpaceOnUse"><stop offset="0" stop-color="#00cbff"/><stop offset="0.12" stop-color="#00aeff"/><stop offset="0.23" stop-color="#018fff"/><stop offset="0.31" stop-color="#6c75ff"/><stop offset="0.37" stop-color="#b364ff"/><stop offset="0.42" stop-color="#fe52ff"/><stop offset="0.42" stop-color="#ff50fc"/><stop offset="0.44" stop-color="#ff43e5"/><stop offset="0.46" stop-color="#ff38d2"/><stop offset="0.48" stop-color="#ff2ebf"/><stop offset="0.5" stop-color="#ff24ad"/><stop offset="0.55" stop-color="#ff138f"/><stop offset="0.62" stop-color="#ff0474"/><stop offset="0.64" stop-color="#ff006d"/><stop offset="0.69" stop-color="#ff005e"/><stop offset="0.78" stop-color="#ff004c"/><stop offset="0.88" stop-color="#ff003c"/><stop offset="1" stop-color="#ff002f"/></linearGradient>
<linearGradient id="g66" x1="626.5" y1="0" x2="961.5" y2="0" gradientUnits="userSpaceOnUse"><stop offset="0" stop-color="#00c4ff"/><stop offset="0.23" stop-color="#0089ff"/><stop offset="0.31" stop-color="#6870ff"/><stop offset="0.37" stop-color="#b15eff"/><stop offset="0.43" stop-color="#fe4cff"/><stop offset="0.43" stop-color="#ff4afc"/><stop offset="0.45" stop-color="#ff3ee6"/><stop offset="0.47" stop-color="#ff34d3"/><stop offset="0.49" stop-color="#ff2ac0"/><stop offset="0.51" stop-color="#ff20ae"/><stop offset="0.56" stop-color="#ff1090"/><stop offset="0.62" stop-color="#ff0276"/><stop offset="0.63" stop-color="#ff0073"/><stop offset="0.7" stop-color="#ff0060"/><stop offset="0.78" stop-color="#ff004e"/><stop offset="0.88" stop-color="#ff003f"/><stop offset="1" stop-color="#ff0032"/></linearGradient>
<linearGradient id="g67" x1="627.5" y1="0" x2="959.5" y2="0" gradientUnits="userSpaceOnUse"><stop offset="0" stop-color="#00bdff"/><stop offset="0.23" stop-color="#0084ff"/><stop offset="0.23" stop-color="#0283ff"/><stop offset="0.25" stop-color="#1a7dff"/><stop offset="0.31" stop-color="#656bff"/><stop offset="0.37" stop-color="#af59ff"/><stop offset="0.43" stop-color="#fe46ff"/><stop offset="0.44" stop-color="#ff44fc"/><stop offset="0.45" stop-color="#ff39e7"/><stop offset="0.47" stop-color="#ff2fd4"/><stop offset="0.49" stop-color="#ff25c1"/><stop offset="0.52" stop-color="#ff1cb0"/><stop offset="0.57" stop-color="#ff0d92"/><stop offset="0.63" stop-color="#ff0079"/><stop offset="0.7" stop-color="#ff0063"/><stop offset="0.79" stop-color="#ff0051"/><stop offset="0.89" stop-color="#ff0041"/><stop offset="1" stop-color="#ff0034"/></linearGradient>
<linearGradient id="g68" x1="628.5" y1="0" x2="957.5" y2="0" gradientUnits="userSpaceOnUse"><stop offset="0" stop-color="#00b6ff"/><stop offset="0.23" stop-color="#017eff"/><stop offset="0.33" stop-color="#6f63ff"/><stop offset="0.38" stop-color="#b552ff"/><stop offset="0.44" stop-color="#fe40ff"/><stop offset="0.44" stop-color="#ff3efc"/><stop offset="0.46" stop-color="#ff34e7"/><stop offset="0.48" stop-color="#ff2bd5"/><stop offset="0.5" stop-color="#ff22c3"/><stop offset="0.53" stop-color="#ff19b1"/><stop offset="0.58" stop-color="#ff0a94"/><stop offset="0.63" stop-color="#ff007f"/><stop offset="0.64" stop-color="#ff007c"/><stop offset="0.71" stop-color="#ff0066"/><stop offset="0.79" stop-color="#ff0054"/><stop offset="0.88" stop-color="#ff0044"/><stop offset="1" stop-color="#ff0037"/></linearGradient>
<linearGradient id="g69" x1="628.5" y1="0" x2="955.5" y2="0" gradientUnits="userSpaceOnUse"><stop offset="0" stop-color="#00b1ff"/><stop offset="0.23" stop-color="#0079ff"/><stop offset="0.33" stop-color="#6b5eff"/><stop offset="0.39" stop-color="#b34dff"/><stop offset="0.45" stop-color="#fe3aff"/><stop offset="0.45" stop-color="#ff39fd"/><stop offset="0.47" stop-color="#ff2fe8"/><stop offset="0.49" stop-color="#ff26d6"/><stop offset="0.51" stop-color="#ff1ec4"/><stop offset="0.54" stop-color="#ff15b2"/><stop offset="0.57" stop-color="#ff0b9d"/><stop offset="0.61" stop-color="#ff0289"/><stop offset="0.65" stop-color="#ff007d"/><stop offset="0.72" stop-color="#ff0068"/><stop offset="0.8" stop-color="#ff0056"/><stop offset="0.89" stop-color="#ff0047"/><stop offset="1" stop-color="#ff0039"/></linearGradient>
<linearGradient id="g70" x1="629.5" y1="0" x2="953.5" y2="0" gradientUnits="userSpaceOnUse"><stop offset="0" stop-color="#00aaff"/><stop offset="0.23" stop-color="#0074ff"/><stop offset="0.23" stop-color="#0274ff"/><stop offset="0.26" stop-color="#1f6cff"/><stop offset="0.33" stop-color="#685aff"/><stop offset="0.39" stop-color="#b148ff"/><stop offset="0.46" stop-color="#fe35ff"/><stop offset="0.46" stop-color="#ff34fd"/><stop offset="0.48" stop-color="#ff2ae8"/><stop offset="0.5" stop-color="#ff22d7"/><stop offset="0.54" stop-color="#ff13b6"/><stop offset="0.58" stop-color="#ff09a0"/><stop offset="0.62" stop-color="#ff008c"/><stop offset="0.65" stop-color="#ff0080"/><stop offset="0.72" stop-color="#ff006b"/><stop offset="0.8" stop-color="#ff0059"/><stop offset="0.89" stop-color="#ff0049"/><stop offset="1" stop-color="#ff003c"/></linearGradient>
<linearGradient id="g71" x1="630.5" y1="0" x2="951.5" y2="0" gradientUnits="userSpaceOnUse"><stop offset="0" stop-color="#00a5ff"/><stop offset="0.23" stop-color="#016fff"/><stop offset="0.34" stop-color="#7253ff"/><stop offset="0.4" stop-color="#b642ff"/><stop offset="0.46" stop-color="#fe30ff"/><stop offset="0.47" stop-color="#ff2ffd"/><stop offset="0.49" stop-color="#ff26e9"/><stop offset="0.5" stop-color="#ff1ed7"/><stop offset="0.55" stop-color="#ff10b7"/><stop offset="0.58" stop-color="#ff08a5"/><stop offset="0.62" stop-color="#ff0093"/><stop offset="0.66" stop-color="#ff0083"/><stop offset="0.73" stop-color="#ff006d"/><stop offset="0.8" stop-color="#ff005c"/><stop offset="0.89" stop-color="#ff004c"/><stop offset="1" stop-color="#ff003f"/></linearGradient>
<linearGradient id="g72" x1="631.5" y1="0" x2="949.5" y2="0" gradientUnits="userSpaceOnUse"><stop offset="0" stop-color="#009fff"/><stop offset="0.23" stop-color="#006bff"/><stop offset="0.34" stop-color="#6e4fff"/><stop offset="0.41" stop-color="#b43eff"/><stop offset="0.47" stop-color="#fe2bff"/><stop offset="0.47" stop-color="#ff2afd"/><stop offset="0.49" stop-color="#ff22e9"/><stop offset="0.51" stop-color="#ff1ad8"/><stop offset="0.56" stop-color="#ff0db8"/><stop offset="0.61" stop-color="#ff009a"/><stop offset="0.66" stop-color="#ff0085"/><stop offset="0.73" stop-color="#ff0071"/><stop offset="0.81" stop-color="#ff005e"/><stop offset="0.9" stop-color="#ff004f"/><stop offset="1" stop-color="#ff0041"/></linearGradient>
<linearGradient id="g73" x1="632.5" y1="0" x2="947.5" y2="0" gradientUnits="userSpaceOnUse"><stop offset="0" stop-color="#009aff"/><stop offset="0.23" stop-color="#0067ff"/><stop offset="0.27" stop-color="#235eff"/><stop offset="0.34" stop-color="#6a4cff"/><stop offset="0.41" stop-color="#b23aff"/><stop offset="0.48" stop-color="#fe26ff"/><stop offset="0.48" stop-color="#ff25fd"/><stop offset="0.52" stop-color="#ff17d9"/><stop offset="0.56" stop-color="#ff0bbb"/><stop offset="0.61" stop-color="#ff00a1"/><stop offset="0.67" stop-color="#ff0088"/><stop offset="0.74" stop-color="#ff0073"/><stop offset="0.81" stop-color="#ff0061"/><stop offset="0.9" stop-color="#ff0052"/><stop offset="1" stop-color="#ff0044"/></linearGradient>
<linearGradient id="g74" x1="633.5" y1="0" x2="945.5" y2="0" gradientUnits="userSpaceOnUse"><stop offset="0" stop-color="#0094ff"/><stop offset="0.23" stop-color="#0162ff"/><stop offset="0.35" stop-color="#7445ff"/><stop offset="0.42" stop-color="#b734ff"/><stop offset="0.49" stop-color="#fe22ff"/><stop offset="0.49" stop-color="#ff21fd"/><stop offset="0.53" stop-color="#ff13da"/><stop offset="0.57" stop-color="#ff08bc"/><stop offset="0.61" stop-color="#ff00a9"/><stop offset="0.68" stop-color="#ff008a"/><stop offset="0.74" stop-color="#ff0076"/><stop offset="0.82" stop-color="#ff0064"/><stop offset="0.9" stop-color="#ff0054"/><stop offset="1" stop-color="#ff0047"/></linearGradient>
<linearGradient id="g75" x1="634.5" y1="0" x2="943.5" y2="0" gradientUnits="userSpaceOnUse"><stop offset="0" stop-color="#008fff"/><stop offset="0.23" stop-color="#005fff"/><stop offset="0.35" stop-color="#7042ff"/><stop offset="0.42" stop-color="#b530ff"/><stop offset="0.5" stop-color="#fe1eff"/><stop offset="0.5" stop-color="#ff1dfd"/><stop offset="0.54" stop-color="#ff10da"/><stop offset="0.58" stop-color="#ff05bd"/><stop offset="0.61" stop-color="#ff00af"/><stop offset="0.64" stop-color="#ff009c"/><stop offset="0.69" stop-color="#ff008c"/><stop offset="0.75" stop-color="#ff0078"/><stop offset="0.82" stop-color="#ff0067"/><stop offset="0.91" stop-color="#ff0057"/><stop offset="1" stop-color="#ff004a"/></linearGradient>
<linearGradient id="g76" x1="635.5" y1="0" x2="942.5" y2="0" gradientUnits="userSpaceOnUse"><stop offset="0" stop-color="#008aff"/><stop offset="0.23" stop-color="#005bff"/><stop offset="0.27" stop-color="#2651ff"/><stop offset="0.35" stop-color="#6d3fff"/><stop offset="0.43" stop-color="#b32dff"/><stop offset="0.5" stop-color="#fe1aff"/><stop offset="0.5" stop-color="#ff19fd"/><stop offset="0.54" stop-color="#ff0ddb"/><stop offset="0.59" stop-color="#ff02be"/><stop offset="0.6" stop-color="#ff00b7"/><stop offset="0.64" stop-color="#ff00a5"/><stop offset="0.69" stop-color="#ff008e"/><stop offset="0.75" stop-color="#ff007b"/><stop offset="0.82" stop-color="#ff0069"/><stop offset="0.91" stop-color="#ff005a"/><stop offset="1" stop-color="#ff004c"/></linearGradient>
<linearGradient id="g77" x1="636.5" y1="0" x2="940.5" y2="0" gradientUnits="userSpaceOnUse"><stop offset="0" stop-color="#0086ff"/><stop offset="0.23" stop-color="#0157ff"/><stop offset="0.36" stop-color="#723aff"/><stop offset="0.44" stop-color="#b828ff"/><stop offset="0.51" stop-color="#fd16ff"/><stop offset="0.51" stop-color="#ff15fd"/><stop offset="0.55" stop-color="#ff09dc"/><stop offset="0.6" stop-color="#ff00bf"/><stop offset="0.64" stop-color="#ff00a6"/><stop offset="0.7" stop-color="#ff0091"/><stop offset="0.76" stop-color="#ff007d"/><stop offset="0.83" stop-color="#ff006c"/><stop offset="0.91" stop-color="#ff005d"/><stop offset="1" stop-color="#ff004f"/></linearGradient>
<linearGradient id="g78" x1="637.5" y1="0" x2="938.5" y2="0" gradientUnits="userSpaceOnUse"><stop offset="0" stop-color="#0081ff"/><stop offset="0.23" stop-color="#0054ff"/><stop offset="0.37" stop-color="#7236ff"/><stop offset="0.44" stop-color="#b625ff"/><stop offset="0.52" stop-color="#fd12ff"/><stop offset="0.52" stop-color="#ff11fd"/><stop offset="0.56" stop-color="#ff07df"/><stop offset="0.59" stop-color="#ff00ca"/><stop offset="0.6" stop-color="#ff00c2"/><stop offset="0.65" stop-color="#ff00a9"/><stop offset="0.7" stop-color="#ff0093"/><stop offset="0.76" stop-color="#ff0080"/><stop offset="0.83" stop-color="#ff006f"/><stop offset="0.91" stop-color="#ff0060"/><stop offset="1" stop-color="#ff0052"/></linearGradient>
<linearGradient id="g79" x1="638.5" y1="0" x2="936.5" y2="0" gradientUnits="userSpaceOnUse"><stop offset="0" stop-color="#007dff"/><stop offset="0.23" stop-color="#0051ff"/><stop offset="0.28" stop-color="#2a46ff"/><stop offset="0.37" stop-color="#6f34ff"/><stop offset="0.45" stop-color="#b521ff"/><stop offset="0.53" stop-color="#fd0eff"/><stop offset="0.53" stop-color="#ff0efd"/><stop offset="0.56" stop-color="#ff06e7"/><stop offset="0.58" stop-color="#ff00d4"/><stop offset="0.61" stop-color="#ff00c3"/><stop offset="0.66" stop-color="#ff00ab"/><stop offset="0.71" stop-color="#ff0096"/><stop offset="0.77" stop-color="#ff0083"/><stop offset="0.84" stop-color="#ff0072"/><stop offset="0.92" stop-color="#ff0063"/><stop offset="1" stop-color="#ff0055"/></linearGradient>
<linearGradient id="g80" x1="639.5" y1="0" x2="934.5" y2="0" gradientUnits="userSpaceOnUse"><stop offset="0" stop-color="#0079ff"/><stop offset="0.23" stop-color="#014dff"/><stop offset="0.38" stop-color="#742fff"/><stop offset="0.46" stop-color="#b91dff"/><stop offset="0.54" stop-color="#fd0bff"/><stop offset="0.54" stop-color="#ff0afe"/><stop offset="0.58" stop-color="#ff00dd"/><stop offset="0.62" stop-color="#ff00c6"/><stop offset="0.66" stop-color="#ff00ae"/><stop offset="0.72" stop-color="#ff0098"/><stop offset="0.78" stop-color="#ff0086"/><stop offset="0.84" stop-color="#ff0075"/><stop offset="0.92" stop-color="#ff0066"/><stop offset="1" stop-color="#ff0059"/></linearGradient>
<linearGradient id="g81" x1="640.5" y1="0" x2="932.5" y2="0" gradientUnits="userSpaceOnUse"><stop offset="0" stop-color="#0075ff"/><stop offset="0.23" stop-color="#004aff"/><stop offset="0.38" stop-color="#742cff"/><stop offset="0.46" stop-color="#b71aff"/><stop offset="0.54" stop-color="#fd08ff"/><stop offset="0.55" stop-color="#ff07fe"/><stop offset="0.58" stop-color="#ff00e5"/><stop offset="0.63" stop-color="#ff00c7"/><stop offset="0.67" stop-color="#ff00af"/><stop offset="0.73" stop-color="#ff009b"/><stop offset="0.78" stop-color="#ff0088"/><stop offset="0.85" stop-color="#ff0077"/><stop offset="0.92" stop-color="#ff0069"/><stop offset="1" stop-color="#ff005c"/></linearGradient>
<linearGradient id="g82" x1="641.5" y1="0" x2="930.5" y2="0" gradientUnits="userSpaceOnUse"><stop offset="0" stop-color="#0071ff"/><stop offset="0.23" stop-color="#0048ff"/><stop offset="0.29" stop-color="#2d3cff"/><stop offset="0.38" stop-color="#712aff"/><stop offset="0.47" stop-color="#b617ff"/><stop offset="0.55" stop-color="#fd04ff"/><stop offset="0.56" stop-color="#ff04fe"/><stop offset="0.57" stop-color="#ff00f0"/><stop offset="0.6" stop-color="#ff00e1"/><stop offset="0.64" stop-color="#ff00c8"/><stop offset="0.68" stop-color="#ff00b2"/><stop offset="0.73" stop-color="#ff009d"/><stop offset="0.79" stop-color="#ff008b"/><stop offset="0.85" stop-color="#ff007b"/><stop offset="0.92" stop-color="#ff006d"/><stop offset="1" stop-color="#ff005f"/></linearGradient>
<linearGradient id="g83" x1="642.5" y1="0" x2="928.5" y2="0" gradientUnits="userSpaceOnUse"><stop offset="0" stop-color="#006dff"/><stop offset="0.23" stop-color="#0144ff"/><stop offset="0.39" stop-color="#7625ff"/><stop offset="0.57" stop-color="#ff01fe"/><stop offset="0.6" stop-color="#ff00e4"/><stop offset="0.64" stop-color="#ff00ca"/><stop offset="0.69" stop-color="#ff00b4"/><stop offset="0.74" stop-color="#ff00a1"/><stop offset="0.79" stop-color="#ff008f"/><stop offset="0.86" stop-color="#ff007e"/><stop offset="0.92" stop-color="#ff0070"/><stop offset="1" stop-color="#ff0062"/></linearGradient>
<linearGradient id="g84" x1="643.5" y1="0" x2="926.5" y2="0" gradientUnits="userSpaceOnUse"><stop offset="0" stop-color="#0069ff"/><stop offset="0.23" stop-color="#0042ff"/><stop offset="0.4" stop-color="#7622ff"/><stop offset="0.48" stop-color="#b511ff"/><stop offset="0.56" stop-color="#f501ff"/><stop offset="0.58" stop-color="#ff00fe"/><stop offset="0.61" stop-color="#ff00e4"/><stop offset="0.65" stop-color="#ff00cb"/><stop offset="0.7" stop-color="#ff00b7"/><stop offset="0.75" stop-color="#ff00a3"/><stop offset="0.8" stop-color="#ff0092"/><stop offset="0.86" stop-color="#ff0082"/><stop offset="0.93" stop-color="#ff0073"/><stop offset="1" stop-color="#ff0066"/></linearGradient>
<linearGradient id="g85" x1="644.5" y1="0" x2="924.5" y2="0" gradientUnits="userSpaceOnUse"><stop offset="0" stop-color="#0066ff"/><stop offset="0.23" stop-color="#003fff"/><stop offset="0.3" stop-color="#2f32ff"/><stop offset="0.4" stop-color="#7320ff"/><stop offset="0.56" stop-color="#ea01ff"/><stop offset="0.59" stop-color="#ff00fe"/><stop offset="0.62" stop-color="#ff00e5"/><stop offset="0.66" stop-color="#ff00ce"/><stop offset="0.7" stop-color="#ff00b9"/><stop offset="0.75" stop-color="#ff00a5"/><stop offset="0.81" stop-color="#ff0094"/><stop offset="0.86" stop-color="#ff0085"/><stop offset="0.93" stop-color="#ff0076"/><stop offset="1" stop-color="#ff0069"/></linearGradient>
<linearGradient id="g86" x1="645.5" y1="0" x2="922.5" y2="0" gradientUnits="userSpaceOnUse"><stop offset="0" stop-color="#0062ff"/><stop offset="0.23" stop-color="#013cff"/><stop offset="0.39" stop-color="#6d1fff"/><stop offset="0.55" stop-color="#df01ff"/><stop offset="0.6" stop-color="#ff00fe"/><stop offset="0.63" stop-color="#ff00e5"/><stop offset="0.67" stop-color="#ff00ce"/><stop offset="0.71" stop-color="#ff00ba"/><stop offset="0.76" stop-color="#ff00a8"/><stop offset="0.81" stop-color="#ff0097"/><stop offset="0.87" stop-color="#ff0088"/><stop offset="1" stop-color="#ff006d"/></linearGradient>
<linearGradient id="g87" x1="646.5" y1="0" x2="920.5" y2="0" gradientUnits="userSpaceOnUse"><stop offset="0" stop-color="#005fff"/><stop offset="0.23" stop-color="#003aff"/><stop offset="0.39" stop-color="#6b1dff"/><stop offset="0.55" stop-color="#d800ff"/><stop offset="0.61" stop-color="#ff00fe"/><stop offset="0.64" stop-color="#ff00e5"/><stop offset="0.68" stop-color="#ff00d1"/><stop offset="0.72" stop-color="#ff00be"/><stop offset="0.77" stop-color="#ff00ab"/><stop offset="0.82" stop-color="#ff009a"/><stop offset="0.87" stop-color="#ff008b"/><stop offset="1" stop-color="#ff0071"/></linearGradient>
<linearGradient id="g88" x1="647.5" y1="0" x2="918.5" y2="0" gradientUnits="userSpaceOnUse"><stop offset="0" stop-color="#005cff"/><stop offset="0.23" stop-color="#0038ff"/><stop offset="0.38" stop-color="#611dff"/><stop offset="0.55" stop-color="#ce00ff"/><stop offset="0.62" stop-color="#ff00fe"/><stop offset="0.65" stop-color="#ff00e6"/><stop offset="0.69" stop-color="#ff00d2"/><stop offset="0.73" stop-color="#ff00bf"/><stop offset="0.77" stop-color="#ff00ae"/><stop offset="0.82" stop-color="#ff009e"/><stop offset="0.88" stop-color="#ff008e"/><stop offset="1" stop-color="#ff0074"/></linearGradient>
<linearGradient id="g89" x1="648.5" y1="0" x2="916.5" y2="0" gradientUnits="userSpaceOnUse"><stop offset="0" stop-color="#0058ff"/><stop offset="0.23" stop-color="#0135ff"/><stop offset="0.39" stop-color="#611bff"/><stop offset="0.54" stop-color="#c500ff"/><stop offset="0.63" stop-color="#ff00fe"/><stop offset="0.66" stop-color="#ff00e8"/><stop offset="0.7" stop-color="#ff00d4"/><stop offset="0.74" stop-color="#ff00c1"/><stop offset="0.78" stop-color="#ff00b0"/><stop offset="0.88" stop-color="#ff0091"/><stop offset="1" stop-color="#ff0078"/></linearGradient>
<linearGradient id="g90" x1="649.5" y1="0" x2="914.5" y2="0" gradientUnits="userSpaceOnUse"><stop offset="0" stop-color="#0055ff"/><stop offset="0.23" stop-color="#0033ff"/><stop offset="0.38" stop-color="#5c1aff"/><stop offset="0.54" stop-color="#bc00ff"/><stop offset="0.64" stop-color="#ff00fe"/><stop offset="0.67" stop-color="#ff00e9"/><stop offset="0.71" stop-color="#ff00d7"/><stop offset="0.75" stop-color="#ff00c4"/><stop offset="0.79" stop-color="#ff00b3"/><stop offset="0.89" stop-color="#ff0095"/><stop offset="1" stop-color="#ff007c"/></linearGradient>
<linearGradient id="g91" x1="650.5" y1="0" x2="912.5" y2="0" gradientUnits="userSpaceOnUse"><stop offset="0" stop-color="#0052ff"/><stop offset="0.23" stop-color="#0031ff"/><stop offset="0.37" stop-color="#531aff"/><stop offset="0.53" stop-color="#b300ff"/><stop offset="0.65" stop-color="#ff00fe"/><stop offset="0.68" stop-color="#ff00e9"/><stop offset="0.72" stop-color="#ff00d7"/><stop offset="0.8" stop-color="#ff00b6"/><stop offset="0.89" stop-color="#ff0099"/><stop offset="1" stop-color="#ff0080"/></linearGradient>
<linearGradient id="g92" x1="652.5" y1="0" x2="910.5" y2="0" gradientUnits="userSpaceOnUse"><stop offset="0" stop-color="#004fff"/><stop offset="0.23" stop-color="#012eff"/><stop offset="0.38" stop-color="#5617ff"/><stop offset="0.52" stop-color="#ab00ff"/><stop offset="0.66" stop-color="#ff00fe"/><stop offset="0.69" stop-color="#ff00ea"/><stop offset="0.73" stop-color="#ff00d8"/><stop offset="0.81" stop-color="#ff00b8"/><stop offset="0.9" stop-color="#ff009c"/><stop offset="1" stop-color="#ff0084"/></linearGradient>
<linearGradient id="g93" x1="653.5" y1="0" x2="908.5" y2="0" gradientUnits="userSpaceOnUse"><stop offset="0" stop-color="#004cff"/><stop offset="0.23" stop-color="#002cff"/><stop offset="0.37" stop-color="#4f17ff"/><stop offset="0.52" stop-color="#a300ff"/><stop offset="0.67" stop-color="#ff00fe"/><stop offset="0.74" stop-color="#ff00da"/><stop offset="0.81" stop-color="#ff00bb"/><stop offset="0.9" stop-color="#ff00a1"/><stop offset="1" stop-color="#ff0088"/></linearGradient>
<linearGradient id="g94" x1="654.5" y1="0" x2="906.5" y2="0" gradientUnits="userSpaceOnUse"><stop offset="0" stop-color="#0049ff"/><stop offset="0.23" stop-color="#002bff"/><stop offset="0.36" stop-color="#4717ff"/><stop offset="0.51" stop-color="#9b00ff"/><stop offset="0.68" stop-color="#ff00fe"/><stop offset="0.75" stop-color="#ff00dc"/><stop offset="0.82" stop-color="#ff00be"/><stop offset="0.9" stop-color="#ff00a4"/><stop offset="1" stop-color="#ff008d"/></linearGradient>
<linearGradient id="g95" x1="655.5" y1="0" x2="905.5" y2="0" gradientUnits="userSpaceOnUse"><stop offset="0" stop-color="#0047ff"/><stop offset="0.23" stop-color="#0128ff"/><stop offset="0.37" stop-color="#4914ff"/><stop offset="0.5" stop-color="#9300ff"/><stop offset="0.69" stop-color="#ff00fe"/><stop offset="0.76" stop-color="#ff00dd"/><stop offset="0.83" stop-color="#ff00c0"/><stop offset="0.91" stop-color="#ff00a7"/><stop offset="1" stop-color="#ff0090"/></linearGradient>
<linearGradient id="g96" x1="656.5" y1="0" x2="903.5" y2="0" gradientUnits="userSpaceOnUse"><stop offset="0" stop-color="#0044ff"/><stop offset="0.23" stop-color="#0027ff"/><stop offset="0.36" stop-color="#4613ff"/><stop offset="0.5" stop-color="#8c00ff"/><stop offset="0.7" stop-color="#ff00fe"/><stop offset="0.77" stop-color="#ff00df"/><stop offset="0.83" stop-color="#ff00c3"/><stop offset="0.91" stop-color="#ff00ab"/><stop offset="1" stop-color="#ff0095"/></linearGradient>
<linearGradient id="g97" x1="657.5" y1="0" x2="901.5" y2="0" gradientUnits="userSpaceOnUse"><stop offset="0" stop-color="#0042ff"/><stop offset="0.23" stop-color="#0025ff"/><stop offset="0.35" stop-color="#3e14ff"/><stop offset="0.49" stop-color="#8500ff"/><stop offset="0.71" stop-color="#fd00ff"/><stop offset="0.72" stop-color="#ff00fe"/><stop offset="0.78" stop-color="#ff00de"/><stop offset="0.84" stop-color="#ff00c6"/><stop offset="0.92" stop-color="#ff00ae"/><stop offset="1" stop-color="#ff0099"/></linearGradient>
<linearGradient id="g98" x1="659.5" y1="0" x2="899.5" y2="0" gradientUnits="userSpaceOnUse"><stop offset="0" stop-color="#003fff"/><stop offset="0.23" stop-color="#0123ff"/><stop offset="0.35" stop-color="#3e12ff"/><stop offset="0.48" stop-color="#7e00ff"/><stop offset="0.72" stop-color="#fd00ff"/><stop offset="0.73" stop-color="#ff00fe"/><stop offset="0.8" stop-color="#ff00de"/><stop offset="0.85" stop-color="#ff00c8"/><stop offset="0.93" stop-color="#ff00b1"/><stop offset="1" stop-color="#ff009e"/></linearGradient>
<linearGradient id="g99" x1="660.5" y1="0" x2="897.5" y2="0" gradientUnits="userSpaceOnUse"><stop offset="0" stop-color="#003cff"/><stop offset="0.22" stop-color="#0021ff"/><stop offset="0.48" stop-color="#7700ff"/><stop offset="0.61" stop-color="#b900ff"/><stop offset="0.74" stop-color="#fd00ff"/><stop offset="0.74" stop-color="#ff00fe"/><stop offset="0.81" stop-color="#ff00e0"/><stop offset="0.86" stop-color="#ff00cb"/><stop offset="0.93" stop-color="#ff00b6"/><stop offset="1" stop-color="#ff00a3"/></linearGradient>
<linearGradient id="g100" x1="661.5" y1="0" x2="895.5" y2="0" gradientUnits="userSpaceOnUse"><stop offset="0" stop-color="#003aff"/><stop offset="0.22" stop-color="#0020ff"/><stop offset="0.47" stop-color="#7100ff"/><stop offset="0.61" stop-color="#b600ff"/><stop offset="0.75" stop-color="#fd00ff"/><stop offset="0.76" stop-color="#ff00ff"/><stop offset="0.82" stop-color="#ff00e1"/><stop offset="0.87" stop-color="#ff00cd"/><stop offset="0.93" stop-color="#ff00ba"/><stop offset="1" stop-color="#ff00a8"/></linearGradient>
<linearGradient id="g101" x1="662.5" y1="0" x2="893.5" y2="0" gradientUnits="userSpaceOnUse"><stop offset="0" stop-color="#0038ff"/><stop offset="0.23" stop-color="#011eff"/><stop offset="0.46" stop-color="#6b00ff"/><stop offset="0.61" stop-color="#b200ff"/><stop offset="0.77" stop-color="#fd00ff"/><stop offset="0.77" stop-color="#ff00ff"/><stop offset="0.82" stop-color="#ff00e7"/><stop offset="0.88" stop-color="#ff00d1"/><stop offset="0.94" stop-color="#ff00bf"/><stop offset="1" stop-color="#ff00ad"/></linearGradient>
<linearGradient id="g102" x1="663.5" y1="0" x2="891.5" y2="0" gradientUnits="userSpaceOnUse"><stop offset="0" stop-color="#0036ff"/><stop offset="0.22" stop-color="#001cff"/><stop offset="0.46" stop-color="#6500ff"/><stop offset="0.62" stop-color="#af00ff"/><stop offset="0.78" stop-color="#fd00ff"/><stop offset="0.79" stop-color="#ff00ff"/><stop offset="0.83" stop-color="#ff00e9"/><stop offset="0.89" stop-color="#ff00d3"/><stop offset="1" stop-color="#ff00b2"/></linearGradient>
<linearGradient id="g103" x1="665.5" y1="0" x2="889.5" y2="0" gradientUnits="userSpaceOnUse"><stop offset="0" stop-color="#0033ff"/><stop offset="0.22" stop-color="#001bff"/><stop offset="0.45" stop-color="#6100ff"/><stop offset="0.62" stop-color="#ae00ff"/><stop offset="0.79" stop-color="#fd00ff"/><stop offset="0.8" stop-color="#ff00ff"/><stop offset="0.85" stop-color="#ff00e9"/><stop offset="0.9" stop-color="#ff00d7"/><stop offset="1" stop-color="#ff00b7"/></linearGradient>
<linearGradient id="g104" x1="666.5" y1="0" x2="887.5" y2="0" gradientUnits="userSpaceOnUse"><stop offset="0" stop-color="#0031ff"/><stop offset="0.22" stop-color="#0119ff"/><stop offset="0.44" stop-color="#5b00ff"/><stop offset="0.62" stop-color="#a900ff"/><stop offset="0.81" stop-color="#ff00ff"/><stop offset="0.9" stop-color="#ff00dc"/><stop offset="1" stop-color="#ff00bd"/></linearGradient>
<linearGradient id="g105" x1="667.5" y1="0" x2="885.5" y2="0" gradientUnits="userSpaceOnUse"><stop offset="0" stop-color="#002fff"/><stop offset="0.22" stop-color="#0018ff"/><stop offset="0.44" stop-color="#5600ff"/><stop offset="0.63" stop-color="#a600ff"/><stop offset="0.83" stop-color="#ff00ff"/><stop offset="0.91" stop-color="#ff00df"/><stop offset="1" stop-color="#ff00c2"/></linearGradient>
<linearGradient id="g106" x1="668.5" y1="0" x2="883.5" y2="0" gradientUnits="userSpaceOnUse"><stop offset="0" stop-color="#002dff"/><stop offset="0.22" stop-color="#0016ff"/><stop offset="0.43" stop-color="#5000ff"/><stop offset="0.63" stop-color="#a300ff"/><stop offset="0.85" stop-color="#ff00ff"/><stop offset="0.92" stop-color="#ff00e1"/><stop offset="1" stop-color="#ff00c8"/></linearGradient>
<linearGradient id="g107" x1="670.5" y1="0" x2="881.5" y2="0" gradientUnits="userSpaceOnUse"><stop offset="0" stop-color="#002aff"/><stop offset="0.22" stop-color="#0115ff"/><stop offset="0.42" stop-color="#4b00ff"/><stop offset="0.64" stop-color="#a300ff"/><stop offset="0.86" stop-color="#ff00ff"/><stop offset="0.93" stop-color="#ff00e5"/><stop offset="1" stop-color="#ff00ce"/></linearGradient>
<linearGradient id="g108" x1="671.5" y1="0" x2="879.5" y2="0" gradientUnits="userSpaceOnUse"><stop offset="0" stop-color="#0028ff"/><stop offset="0.22" stop-color="#0013ff"/><stop offset="0.41" stop-color="#4600ff"/><stop offset="0.64" stop-color="#a000ff"/><stop offset="0.88" stop-color="#ff00ff"/><stop offset="0.94" stop-color="#ff00e9"/><stop offset="1" stop-color="#ff00d4"/></linearGradient>
<linearGradient id="g109" x1="672.5" y1="0" x2="877.5" y2="0" gradientUnits="userSpaceOnUse"><stop offset="0" stop-color="#0027ff"/><stop offset="0.21" stop-color="#0012ff"/><stop offset="0.4" stop-color="#4100ff"/><stop offset="0.65" stop-color="#9d00ff"/><stop offset="0.9" stop-color="#ff00ff"/><stop offset="1" stop-color="#ff00db"/></linearGradient>
<linearGradient id="g110" x1="673.5" y1="0" x2="875.5" y2="0" gradientUnits="userSpaceOnUse"><stop offset="0" stop-color="#0025ff"/><stop offset="0.22" stop-color="#0111ff"/><stop offset="0.39" stop-color="#3c00ff"/><stop offset="0.65" stop-color="#9b00ff"/><stop offset="0.92" stop-color="#ff00ff"/><stop offset="1" stop-color="#ff00e1"/></linearGradient>
<linearGradient id="g111" x1="675.5" y1="0" x2="873.5" y2="0" gradientUnits="userSpaceOnUse"><stop offset="0" stop-color="#0023ff"/><stop offset="0.21" stop-color="#000fff"/><stop offset="0.38" stop-color="#3700ff"/><stop offset="0.66" stop-color="#9800ff"/><stop offset="0.93" stop-color="#ff00ff"/><stop offset="1" stop-color="#ff00e8"/></linearGradient>
<linearGradient id="g112" x1="676.5" y1="0" x2="871.5" y2="0" gradientUnits="userSpaceOnUse"><stop offset="0" stop-color="#0021ff"/><stop offset="0.21" stop-color="#000eff"/><stop offset="0.37" stop-color="#3300ff"/><stop offset="0.66" stop-color="#9600ff"/><stop offset="0.95" stop-color="#fd00ff"/><stop offset="0.95" stop-color="#ff00ff"/><stop offset="1" stop-color="#ff00ef"/></linearGradient>
<linearGradient id="g113" x1="677.5" y1="0" x2="869.5" y2="0" gradientUnits="userSpaceOnUse"><stop offset="0" stop-color="#001fff"/><stop offset="0.21" stop-color="#010dff"/><stop offset="0.36" stop-color="#2e00ff"/><stop offset="0.67" stop-color="#9300ff"/><stop offset="0.97" stop-color="#fd00ff"/><stop offset="0.97" stop-color="#ff00ff"/><stop offset="1" stop-color="#ff00f6"/></linearGradient>
<linearGradient id="g114" x1="679.5" y1="0" x2="868.5" y2="0" gradientUnits="userSpaceOnUse"><stop offset="0" stop-color="#001dff"/><stop offset="0.21" stop-color="#000cff"/><stop offset="0.34" stop-color="#2a00ff"/><stop offset="0.67" stop-color="#9300ff"/><stop offset="0.98" stop-color="#fd00ff"/><stop offset="1" stop-color="#ff00fb"/></linearGradient>
<linearGradient id="g115" x1="680.5" y1="0" x2="866.5" y2="0" gradientUnits="userSpaceOnUse"><stop offset="0" stop-color="#001bff"/><stop offset="0.2" stop-color="#000bff"/><stop offset="0.33" stop-color="#2600ff"/><stop offset="0.67" stop-color="#8f00ff"/><stop offset="1" stop-color="#fb00ff"/></linearGradient>
<linearGradient id="g116" x1="681.5" y1="0" x2="864.5" y2="0" gradientUnits="userSpaceOnUse"><stop offset="0" stop-color="#001aff"/><stop offset="0.21" stop-color="#0109ff"/><stop offset="0.32" stop-color="#2200ff"/><stop offset="0.67" stop-color="#8900ff"/><stop offset="1" stop-color="#f400ff"/></linearGradient>
<linearGradient id="g117" x1="683.5" y1="0" x2="862.5" y2="0" gradientUnits="userSpaceOnUse"><stop offset="0" stop-color="#0018ff"/><stop offset="0.2" stop-color="#0008ff"/><stop offset="0.31" stop-color="#1e00ff"/><stop offset="0.66" stop-color="#8400ff"/><stop offset="1" stop-color="#ed00ff"/></linearGradient>
<linearGradient id="g118" x1="684.5" y1="0" x2="860.5" y2="0" gradientUnits="userSpaceOnUse"><stop offset="0" stop-color="#0016ff"/><stop offset="0.2" stop-color="#0007ff"/><stop offset="0.3" stop-color="#1a00ff"/><stop offset="0.65" stop-color="#7e00ff"/><stop offset="1" stop-color="#e600ff"/></linearGradient>
<linearGradient id="g119" x1="685.5" y1="0" x2="858.5" y2="0" gradientUnits="userSpaceOnUse"><stop offset="0" stop-color="#0015ff"/><stop offset="0.2" stop-color="#0106ff"/><stop offset="0.28" stop-color="#1600ff"/><stop offset="0.65" stop-color="#7900ff"/><stop offset="1" stop-color="#df00ff"/></linearGradient>
<linearGradient id="g120" x1="687.5" y1="0" x2="856.5" y2="0" gradientUnits="userSpaceOnUse"><stop offset="0" stop-color="#0013ff"/><stop offset="0.2" stop-color="#0005ff"/><stop offset="0.27" stop-color="#1200ff"/><stop offset="0.64" stop-color="#7400ff"/><stop offset="1" stop-color="#d900ff"/></linearGradient>
<linearGradient id="g121" x1="688.5" y1="0" x2="854.5" y2="0" gradientUnits="userSpaceOnUse"><stop offset="0" stop-color="#0012ff"/><stop offset="0.19" stop-color="#0004ff"/><stop offset="0.25" stop-color="#0f00ff"/><stop offset="0.63" stop-color="#6f00ff"/><stop offset="1" stop-color="#d200ff"/></linearGradient>
<linearGradient id="g122" x1="690.5" y1="0" x2="852.5" y2="0" gradientUnits="userSpaceOnUse"><stop offset="0" stop-color="#0010ff"/><stop offset="0.19" stop-color="#0103ff"/><stop offset="0.24" stop-color="#0d00ff"/><stop offset="0.6" stop-color="#6600ff"/><stop offset="1" stop-color="#cc00ff"/></linearGradient>
<linearGradient id="g123" x1="691.5" y1="0" x2="850.5" y2="0" gradientUnits="userSpaceOnUse"><stop offset="0" stop-color="#000eff"/><stop offset="0.19" stop-color="#0102ff"/><stop offset="0.23" stop-color="#0900ff"/><stop offset="0.6" stop-color="#6200ff"/><stop offset="1" stop-color="#c600ff"/></linearGradient>
<linearGradient id="g124" x1="693.5" y1="0" x2="848.5" y2="0" gradientUnits="userSpaceOnUse"><stop offset="0" stop-color="#000dff"/><stop offset="0.18" stop-color="#0001ff"/><stop offset="0.6" stop-color="#5f00ff"/><stop offset="1" stop-color="#c000ff"/></linearGradient>
<linearGradient id="g125" x1="694.5" y1="0" x2="846.5" y2="0" gradientUnits="userSpaceOnUse"><stop offset="0" stop-color="#000bff"/><stop offset="0.18" stop-color="#0100ff"/><stop offset="0.6" stop-color="#5c00ff"/><stop offset="1" stop-color="#bb00ff"/></linearGradient>
<linearGradient id="g126" x1="696.5" y1="0" x2="844.5" y2="0" gradientUnits="userSpaceOnUse"><stop offset="0" stop-color="#000aff"/><stop offset="0.18" stop-color="#0100ff"/><stop offset="0.59" stop-color="#5900ff"/><stop offset="1" stop-color="#b500ff"/></linearGradient>
<linearGradient id="g127" x1="697.5" y1="0" x2="842.5" y2="0" gradientUnits="userSpaceOnUse"><stop offset="0" stop-color="#0008ff"/><stop offset="0.17" stop-color="#0000ff"/><stop offset="0.59" stop-color="#5700ff"/><stop offset="1" stop-color="#af00ff"/></linearGradient>
<linearGradient id="g128" x1="699.5" y1="0" x2="840.5" y2="0" gradientUnits="userSpaceOnUse"><stop offset="0" stop-color="#0007ff"/><stop offset="0.12" stop-color="#0000ff"/><stop offset="0.17" stop-color="#0100ff"/><stop offset="0.59" stop-color="#5400ff"/><stop offset="1" stop-color="#aa00ff"/></linearGradient>
<linearGradient id="g129" x1="700.5" y1="0" x2="838.5" y2="0" gradientUnits="userSpaceOnUse"><stop offset="0" stop-color="#0006ff"/><stop offset="0.1" stop-color="#0000ff"/><stop offset="0.17" stop-color="#0100ff"/><stop offset="0.59" stop-color="#5100ff"/><stop offset="1" stop-color="#a500ff"/></linearGradient>
<linearGradient id="g130" x1="702.5" y1="0" x2="836.5" y2="0" gradientUnits="userSpaceOnUse"><stop offset="0" stop-color="#0004ff"/><stop offset="0.07" stop-color="#0000ff"/><stop offset="0.16" stop-color="#0000ff"/><stop offset="0.58" stop-color="#4e00ff"/><stop offset="1" stop-color="#a000ff"/></linearGradient>
<linearGradient id="g131" x1="703.5" y1="0" x2="834.5" y2="0" gradientUnits="userSpaceOnUse"><stop offset="0" stop-color="#0003ff"/><stop offset="0.06" stop-color="#0000ff"/><stop offset="0.16" stop-color="#0100ff"/><stop offset="0.59" stop-color="#4d00ff"/><stop offset="1" stop-color="#9b00ff"/></linearGradient>
<linearGradient id="g132" x1="705.5" y1="0" x2="832.5" y2="0" gradientUnits="userSpaceOnUse"><stop offset="0" stop-color="#0001ff"/><stop offset="0.15" stop-color="#0100ff"/><stop offset="0.58" stop-color="#4b00ff"/><stop offset="1" stop-color="#9600ff"/></linearGradient>
<linearGradient id="g133" x1="707.5" y1="0" x2="831.5" y2="0" gradientUnits="userSpaceOnUse"><stop offset="0" stop-color="#0000ff"/><stop offset="0.14" stop-color="#0000ff"/><stop offset="0.57" stop-color="#4800ff"/><stop offset="1" stop-color="#9200ff"/></linearGradient>
<linearGradient id="g134" x1="708.5" y1="0" x2="829.5" y2="0" gradientUnits="userSpaceOnUse"><stop offset="0" stop-color="#0000ff"/><stop offset="0.14" stop-color="#0100ff"/><stop offset="0.58" stop-color="#4700ff"/><stop offset="1" stop-color="#8e00ff"/></linearGradient>
<linearGradient id="g135" x1="710.5" y1="0" x2="827.5" y2="0" gradientUnits="userSpaceOnUse"><stop offset="0" stop-color="#0000ff"/><stop offset="0.13" stop-color="#0100ff"/><stop offset="0.57" stop-color="#4500ff"/><stop offset="1" stop-color="#8900ff"/></linearGradient>
<linearGradient id="g136" x1="712.5" y1="0" x2="825.5" y2="0" gradientUnits="userSpaceOnUse"><stop offset="0" stop-color="#0000ff"/><stop offset="0.12" stop-color="#0000ff"/><stop offset="0.57" stop-color="#4200ff"/><stop offset="1" stop-color="#8400ff"/></linearGradient>
<linearGradient id="g137" x1="714.5" y1="0" x2="823.5" y2="0" gradientUnits="userSpaceOnUse"><stop offset="0" stop-color="#0000ff"/><stop offset="0.11" stop-color="#0100ff"/><stop offset="0.56" stop-color="#4000ff"/><stop offset="1" stop-color="#8000ff"/></linearGradient>
<linearGradient id="g138" x1="715.5" y1="0" x2="821.5" y2="0" gradientUnits="userSpaceOnUse"><stop offset="0" stop-color="#0000ff"/><stop offset="0.1" stop-color="#0100ff"/><stop offset="1" stop-color="#7c00ff"/></linearGradient>
<linearGradient id="g139" x1="717.5" y1="0" x2="819.5" y2="0" gradientUnits="userSpaceOnUse"><stop offset="0" stop-color="#0000ff"/><stop offset="0.09" stop-color="#0000ff"/><stop offset="1" stop-color="#7700ff"/></linearGradient>
<linearGradient id="g140" x1="719.5" y1="0" x2="817.5" y2="0" gradientUnits="userSpaceOnUse"><stop offset="0" stop-color="#0000ff"/><stop offset="0.08" stop-color="#0100ff"/><stop offset="1" stop-color="#7300ff"/></linearGradient>
<linearGradient id="g141" x1="721.5" y1="0" x2="815.5" y2="0" gradientUnits="userSpaceOnUse"><stop offset="0" stop-color="#0000ff"/><stop offset="0.06" stop-color="#0100ff"/><stop offset="1" stop-color="#6f00ff"/></linearGradient>
<linearGradient id="g142" x1="723.5" y1="0" x2="813.5" y2="0" gradientUnits="userSpaceOnUse"><stop offset="0" stop-color="#0000ff"/><stop offset="0.04" stop-color="#0000ff"/><stop offset="1" stop-color="#6b00ff"/></linearGradient>
<linearGradient id="g143" x1="725.5" y1="0" x2="811.5" y2="0" gradientUnits="userSpaceOnUse"><stop offset="0" stop-color="#0000ff"/><stop offset="0.02" stop-color="#0000ff"/><stop offset="0.16" stop-color="#0e00ff"/><stop offset="1" stop-color="#6700ff"/></linearGradient>
<linearGradient id="g144" x1="727.5" y1="0" x2="809.5" y2="0" gradientUnits="userSpaceOnUse"><stop offset="0" stop-color="#0000ff"/><stop offset="1" stop-color="#6300ff"/></linearGradient>
<linearGradient id="g145" x1="730.5" y1="0" x2="807.5" y2="0" gradientUnits="userSpaceOnUse"><stop offset="0" stop-color="#0300ff"/><stop offset="1" stop-color="#6000ff"/></linearGradient>
<linearGradient id="g146" x1="732.5" y1="0" x2="805.5" y2="0" gradientUnits="userSpaceOnUse"><stop offset="0" stop-color="#0500ff"/><stop offset="1" stop-color="#5c00ff"/></linearGradient>
<linearGradient id="g147" x1="734.5" y1="0" x2="803.5" y2="0" gradientUnits="userSpaceOnUse"><stop offset="0" stop-color="#0600ff"/><stop offset="1" stop-color="#5800ff"/></linearGradient>
<linearGradient id="g148" x1="736.5" y1="0" x2="801.5" y2="0" gradientUnits="userSpaceOnUse"><stop offset="0" stop-color="#0800ff"/><stop offset="1" stop-color="#5500ff"/></linearGradient>
<linearGradient id="g149" x1="739.5" y1="0" x2="799.5" y2="0" gradientUnits="userSpaceOnUse"><stop offset="0" stop-color="#0b00ff"/><stop offset="1" stop-color="#5100ff"/></linearGradient>
<linearGradient id="g150" x1="741.5" y1="0" x2="797.5" y2="0" gradientUnits="userSpaceOnUse"><stop offset="0" stop-color="#0d00ff"/><stop offset="1" stop-color="#4e00ff"/></linearGradient>
<linearGradient id="g151" x1="744.5" y1="0" x2="795.5" y2="0" gradientUnits="userSpaceOnUse"><stop offset="0" stop-color="#1000ff"/><stop offset="1" stop-color="#4a00ff"/></linearGradient>
<linearGradient id="g152" x1="746.5" y1="0" x2="794.5" y2="0" gradientUnits="userSpaceOnUse"><stop offset="0" stop-color="#1200ff"/><stop offset="1" stop-color="#4800ff"/></linearGradient>
<linearGradient id="g153" x1="748.5" y1="0" x2="792.5" y2="0" gradientUnits="userSpaceOnUse"><stop offset="0" stop-color="#1300ff"/><stop offset="1" stop-color="#4500ff"/></linearGradient>
<linearGradient id="g154" x1="751.5" y1="0" x2="790.5" y2="0" gradientUnits="userSpaceOnUse"><stop offset="0" stop-color="#1600ff"/><stop offset="1" stop-color="#4200ff"/></linearGradient>
<linearGradient id="g155" x1="753.5" y1="0" x2="788.5" y2="0" gradientUnits="userSpaceOnUse"><stop offset="0" stop-color="#1800ff"/><stop offset="1" stop-color="#3f00ff"/></linearGradient>
<linearGradient id="g156" x1="756.5" y1="0" x2="786.5" y2="0" gradientUnits="userSpaceOnUse"><stop offset="0" stop-color="#1b00ff"/><stop offset="1" stop-color="#3c00ff"/></linearGradient>
<linearGradient id="g157" x1="758.5" y1="0" x2="784.5" y2="0" gradientUnits="userSpaceOnUse"><stop offset="0" stop-color="#1c00ff"/><stop offset="1" stop-color="#3900ff"/></linearGradient>
<linearGradient id="g158" x1="760.5" y1="0" x2="782.5" y2="0" gradientUnits="userSpaceOnUse"><stop offset="0" stop-color="#1e00ff"/><stop offset="1" stop-color="#3600ff"/></linearGradient>
<linearGradient id="g159" x1="763.5" y1="0" x2="780.5" y2="0" gradientUnits="userSpaceOnUse"><stop offset="0" stop-color="#2000ff"/><stop offset="1" stop-color="#3300ff"/></linearGradient>
<linearGradient id="g160" x1="765.5" y1="0" x2="778.5" y2="0" gradientUnits="userSpaceOnUse"><stop offset="0" stop-color="#2200ff"/><stop offset="1" stop-color="#3000ff"/></linearGradient>
<linearGradient id="g161" x1="0" y1="0" x2="0" y2="1"><stop offset="0" stop-color="#ff4040"/><stop offset="0.5" stop-color="#ff0000"/><stop offset="1" stop-color="#a00000"/></linearGradient>
<linearGradient id="g162" x1="0" y1="0" x2="0" y2="1"><stop offset="0" stop-color="#20b020"/><stop offset="0.5" stop-color="#009000"/><stop offset="1" stop-color="#006000"/></linearGradient>
<linearGradient id="g163" x1="0" y1="0" x2="0" y2="1"><stop offset="0" stop-color="#3030ff"/><stop offset="0.35" stop-color="#0000ff"/><stop offset="0.7" stop-color="#0000e0"/><stop offset="1" stop-color="#000070"/></linearGradient>
<clipPath id="xyclip"><rect x="381.5" y="394.6" width="204.2" height="117.9"/></clipPath>
<filter id="sm2" filterUnits="userSpaceOnUse" x="370" y="385" width="230" height="140"><feGaussianBlur stdDeviation="1.3"/></filter>
<linearGradient id="g164" x1="375.5" y1="0" x2="591.5" y2="0" gradientUnits="userSpaceOnUse"><stop offset="0" stop-color="#81ffc9"/><stop offset="0.42" stop-color="#bfffc6"/><stop offset="0.81" stop-color="#ffffc3"/><stop offset="1" stop-color="#ffe1aa"/></linearGradient>
<linearGradient id="g165" x1="375.5" y1="0" x2="591.5" y2="0" gradientUnits="userSpaceOnUse"><stop offset="0" stop-color="#83ffcb"/><stop offset="0.41" stop-color="#bfffc8"/><stop offset="0.79" stop-color="#feffc5"/><stop offset="1" stop-color="#ffdeaa"/></linearGradient>
<linearGradient id="g166" x1="375.5" y1="0" x2="591.5" y2="0" gradientUnits="userSpaceOnUse"><stop offset="0" stop-color="#84ffce"/><stop offset="0.4" stop-color="#c0ffcb"/><stop offset="0.78" stop-color="#ffffc8"/><stop offset="1" stop-color="#ffdcab"/></linearGradient>
<linearGradient id="g167" x1="375.5" y1="0" x2="591.5" y2="0" gradientUnits="userSpaceOnUse"><stop offset="0" stop-color="#86ffd0"/><stop offset="0.39" stop-color="#c1ffcd"/><stop offset="0.76" stop-color="#feffcb"/><stop offset="1" stop-color="#ffdaac"/></linearGradient>
<linearGradient id="g168" x1="375.5" y1="0" x2="591.5" y2="0" gradientUnits="userSpaceOnUse"><stop offset="0" stop-color="#88ffd2"/><stop offset="0.37" stop-color="#c0ffd0"/><stop offset="0.75" stop-color="#ffffcd"/><stop offset="1" stop-color="#ffd8ac"/></linearGradient>
<linearGradient id="g169" x1="375.5" y1="0" x2="591.5" y2="0" gradientUnits="userSpaceOnUse"><stop offset="0" stop-color="#89ffd5"/><stop offset="0.38" stop-color="#c3ffd2"/><stop offset="0.73" stop-color="#ffffd0"/><stop offset="1" stop-color="#ffd5ad"/></linearGradient>
<linearGradient id="g170" x1="375.5" y1="0" x2="591.5" y2="0" gradientUnits="userSpaceOnUse"><stop offset="0" stop-color="#8bffd7"/><stop offset="0.36" stop-color="#c2ffd5"/><stop offset="0.71" stop-color="#feffd3"/><stop offset="1" stop-color="#ffd3ad"/></linearGradient>
<linearGradient id="g171" x1="375.5" y1="0" x2="591.5" y2="0" gradientUnits="userSpaceOnUse"><stop offset="0" stop-color="#8dffda"/><stop offset="0.35" stop-color="#c3ffd8"/><stop offset="0.7" stop-color="#ffffd6"/><stop offset="0.84" stop-color="#ffe8c1"/><stop offset="1" stop-color="#ffd1ae"/></linearGradient>
<linearGradient id="g172" x1="375.5" y1="0" x2="591.5" y2="0" gradientUnits="userSpaceOnUse"><stop offset="0" stop-color="#8effdc"/><stop offset="0.35" stop-color="#c5ffda"/><stop offset="0.69" stop-color="#ffffd9"/><stop offset="0.84" stop-color="#ffe5c2"/><stop offset="1" stop-color="#ffcfae"/></linearGradient>
<linearGradient id="g173" x1="375.5" y1="0" x2="591.5" y2="0" gradientUnits="userSpaceOnUse"><stop offset="0" stop-color="#90ffdf"/><stop offset="0.32" stop-color="#c3ffdd"/><stop offset="0.68" stop-color="#fffedb"/><stop offset="0.83" stop-color="#ffe4c4"/><stop offset="1" stop-color="#ffcdaf"/></linearGradient>
<linearGradient id="g174" x1="375.5" y1="0" x2="591.5" y2="0" gradientUnits="userSpaceOnUse"><stop offset="0" stop-color="#92ffe1"/><stop offset="0.33" stop-color="#c7ffe0"/><stop offset="0.66" stop-color="#ffffde"/><stop offset="0.82" stop-color="#ffe3c5"/><stop offset="1" stop-color="#ffcbaf"/></linearGradient>
<linearGradient id="g175" x1="375.5" y1="0" x2="591.5" y2="0" gradientUnits="userSpaceOnUse"><stop offset="0" stop-color="#94ffe4"/><stop offset="0.32" stop-color="#c7ffe3"/><stop offset="0.64" stop-color="#feffe1"/><stop offset="0.82" stop-color="#ffe1c6"/><stop offset="1" stop-color="#ffc9b0"/></linearGradient>
<linearGradient id="g176" x1="375.5" y1="0" x2="591.5" y2="0" gradientUnits="userSpaceOnUse"><stop offset="0" stop-color="#95ffe7"/><stop offset="0.31" stop-color="#c8ffe6"/><stop offset="0.63" stop-color="#ffffe4"/><stop offset="0.81" stop-color="#ffe1c9"/><stop offset="1" stop-color="#ffc6b0"/></linearGradient>
<linearGradient id="g177" x1="375.5" y1="0" x2="591.5" y2="0" gradientUnits="userSpaceOnUse"><stop offset="0" stop-color="#97ffe9"/><stop offset="0.31" stop-color="#caffe8"/><stop offset="0.61" stop-color="#ffffe7"/><stop offset="0.81" stop-color="#ffdfca"/><stop offset="1" stop-color="#ffc4b1"/></linearGradient>
<linearGradient id="g178" x1="375.5" y1="0" x2="591.5" y2="0" gradientUnits="userSpaceOnUse"><stop offset="0" stop-color="#99ffec"/><stop offset="0.29" stop-color="#c8ffeb"/><stop offset="0.6" stop-color="#fffeea"/><stop offset="0.79" stop-color="#ffdfcd"/><stop offset="1" stop-color="#ffc2b1"/></linearGradient>
<linearGradient id="g179" x1="375.5" y1="0" x2="591.5" y2="0" gradientUnits="userSpaceOnUse"><stop offset="0" stop-color="#9bffef"/><stop offset="0.3" stop-color="#ccffee"/><stop offset="0.58" stop-color="#ffffed"/><stop offset="0.78" stop-color="#ffdece"/><stop offset="1" stop-color="#ffc0b2"/></linearGradient>
<linearGradient id="g180" x1="375.5" y1="0" x2="591.5" y2="0" gradientUnits="userSpaceOnUse"><stop offset="0" stop-color="#9dfff2"/><stop offset="0.29" stop-color="#ccfff1"/><stop offset="0.56" stop-color="#fefff0"/><stop offset="0.78" stop-color="#ffdccf"/><stop offset="1" stop-color="#ffbeb3"/></linearGradient>
<linearGradient id="g181" x1="375.5" y1="0" x2="591.5" y2="0" gradientUnits="userSpaceOnUse"><stop offset="0" stop-color="#9ffff4"/><stop offset="0.27" stop-color="#ccfff4"/><stop offset="0.56" stop-color="#fffff3"/><stop offset="0.77" stop-color="#ffdbd1"/><stop offset="1" stop-color="#ffbcb3"/></linearGradient>
<linearGradient id="g182" x1="375.5" y1="0" x2="591.5" y2="0" gradientUnits="userSpaceOnUse"><stop offset="0" stop-color="#a1fff7"/><stop offset="0.28" stop-color="#cffff7"/><stop offset="0.54" stop-color="#fffff7"/><stop offset="0.76" stop-color="#ffdad3"/><stop offset="1" stop-color="#ffbab4"/></linearGradient>
<linearGradient id="g183" x1="375.5" y1="0" x2="591.5" y2="0" gradientUnits="userSpaceOnUse"><stop offset="0" stop-color="#a3fffa"/><stop offset="0.53" stop-color="#fffef9"/><stop offset="0.75" stop-color="#ffd9d4"/><stop offset="1" stop-color="#ffb8b4"/></linearGradient>
<linearGradient id="g184" x1="375.5" y1="0" x2="591.5" y2="0" gradientUnits="userSpaceOnUse"><stop offset="0" stop-color="#a5fffd"/><stop offset="0.26" stop-color="#d1fffd"/><stop offset="0.51" stop-color="#fffffd"/><stop offset="0.74" stop-color="#ffd8d6"/><stop offset="1" stop-color="#ffb6b5"/></linearGradient>
<linearGradient id="g185" x1="375.5" y1="0" x2="591.5" y2="0" gradientUnits="userSpaceOnUse"><stop offset="0" stop-color="#a6feff"/><stop offset="0.26" stop-color="#d2feff"/><stop offset="0.5" stop-color="#fffeff"/><stop offset="0.73" stop-color="#ffd7d8"/><stop offset="1" stop-color="#ffb4b5"/></linearGradient>
<linearGradient id="g186" x1="375.5" y1="0" x2="591.5" y2="0" gradientUnits="userSpaceOnUse"><stop offset="0" stop-color="#a6fbff"/><stop offset="0.26" stop-color="#d2fbff"/><stop offset="0.5" stop-color="#fffbff"/><stop offset="0.74" stop-color="#ffd3d7"/><stop offset="1" stop-color="#ffb2b6"/></linearGradient>
<linearGradient id="g187" x1="375.5" y1="0" x2="591.5" y2="0" gradientUnits="userSpaceOnUse"><stop offset="0" stop-color="#a6f8ff"/><stop offset="0.26" stop-color="#d2f8ff"/><stop offset="0.5" stop-color="#fef7ff"/><stop offset="0.74" stop-color="#ffd1d8"/><stop offset="1" stop-color="#ffb0b6"/></linearGradient>
<linearGradient id="g188" x1="375.5" y1="0" x2="591.5" y2="0" gradientUnits="userSpaceOnUse"><stop offset="0" stop-color="#a6f5ff"/><stop offset="0.51" stop-color="#fff4fe"/><stop offset="0.74" stop-color="#ffcfd8"/><stop offset="1" stop-color="#ffaeb7"/></linearGradient>
<linearGradient id="g189" x1="375.5" y1="0" x2="591.5" y2="0" gradientUnits="userSpaceOnUse"><stop offset="0" stop-color="#a6f2ff"/><stop offset="0.25" stop-color="#d0f2ff"/><stop offset="0.51" stop-color="#fff1ff"/><stop offset="0.74" stop-color="#ffccd8"/><stop offset="1" stop-color="#ffacb7"/></linearGradient>
<linearGradient id="g190" x1="375.5" y1="0" x2="591.5" y2="0" gradientUnits="userSpaceOnUse"><stop offset="0" stop-color="#a7efff"/><stop offset="0.26" stop-color="#d2efff"/><stop offset="0.51" stop-color="#ffeeff"/><stop offset="0.74" stop-color="#ffcad9"/><stop offset="1" stop-color="#ffaab8"/></linearGradient>
<linearGradient id="g191" x1="375.5" y1="0" x2="591.5" y2="0" gradientUnits="userSpaceOnUse"><stop offset="0" stop-color="#a7ecff"/><stop offset="0.26" stop-color="#d2ecff"/><stop offset="0.51" stop-color="#ffebff"/><stop offset="0.75" stop-color="#ffc6d8"/><stop offset="1" stop-color="#ffa8b8"/></linearGradient>
<linearGradient id="g192" x1="375.5" y1="0" x2="591.5" y2="0" gradientUnits="userSpaceOnUse"><stop offset="0" stop-color="#a7eaff"/><stop offset="0.52" stop-color="#ffe7fe"/><stop offset="0.74" stop-color="#ffc5da"/><stop offset="1" stop-color="#ffa6b9"/></linearGradient>
<linearGradient id="g193" x1="375.5" y1="0" x2="591.5" y2="0" gradientUnits="userSpaceOnUse"><stop offset="0" stop-color="#a7e7ff"/><stop offset="0.52" stop-color="#ffe4fe"/><stop offset="0.74" stop-color="#ffc3da"/><stop offset="1" stop-color="#ffa5b9"/></linearGradient>
<linearGradient id="g194" x1="375.5" y1="0" x2="591.5" y2="0" gradientUnits="userSpaceOnUse"><stop offset="0" stop-color="#a7e4ff"/><stop offset="0.26" stop-color="#d1e3ff"/><stop offset="0.52" stop-color="#ffe2ff"/><stop offset="0.74" stop-color="#ffc1db"/><stop offset="1" stop-color="#ffa3b9"/></linearGradient>
<linearGradient id="g195" x1="375.5" y1="0" x2="591.5" y2="0" gradientUnits="userSpaceOnUse"><stop offset="0" stop-color="#a7e1ff"/><stop offset="0.27" stop-color="#d3e0ff"/><stop offset="0.52" stop-color="#ffdfff"/><stop offset="0.75" stop-color="#ffbdda"/><stop offset="1" stop-color="#ffa1ba"/></linearGradient>
<linearGradient id="g196" x1="375.5" y1="0" x2="591.5" y2="0" gradientUnits="userSpaceOnUse"><stop offset="0" stop-color="#a7dfff"/><stop offset="0.27" stop-color="#d3ddff"/><stop offset="0.52" stop-color="#fedcff"/><stop offset="0.75" stop-color="#ffbbda"/><stop offset="1" stop-color="#ff9fba"/></linearGradient>
<linearGradient id="g197" x1="375.5" y1="0" x2="591.5" y2="0" gradientUnits="userSpaceOnUse"><stop offset="0" stop-color="#a7dcff"/><stop offset="0.53" stop-color="#ffd9fe"/><stop offset="0.75" stop-color="#ffb9db"/><stop offset="1" stop-color="#ff9dbb"/></linearGradient>
<linearGradient id="g198" x1="375.5" y1="0" x2="591.5" y2="0" gradientUnits="userSpaceOnUse"><stop offset="0" stop-color="#a7d9ff"/><stop offset="0.53" stop-color="#ffd6ff"/><stop offset="0.75" stop-color="#ffb7db"/><stop offset="1" stop-color="#ff9bbb"/></linearGradient>
<linearGradient id="g199" x1="375.5" y1="0" x2="591.5" y2="0" gradientUnits="userSpaceOnUse"><stop offset="0" stop-color="#a7d7ff"/><stop offset="0.27" stop-color="#d2d5ff"/><stop offset="0.53" stop-color="#ffd3ff"/><stop offset="0.75" stop-color="#ffb5db"/><stop offset="1" stop-color="#ff99bc"/></linearGradient>
<linearGradient id="g200" x1="375.5" y1="0" x2="591.5" y2="0" gradientUnits="userSpaceOnUse"><stop offset="0" stop-color="#a7d4ff"/><stop offset="0.27" stop-color="#d2d2ff"/><stop offset="0.53" stop-color="#ffd1ff"/><stop offset="0.75" stop-color="#ffb3dc"/><stop offset="1" stop-color="#ff98bc"/></linearGradient>
<linearGradient id="g201" x1="375.5" y1="0" x2="591.5" y2="0" gradientUnits="userSpaceOnUse"><stop offset="0" stop-color="#a8d2ff"/><stop offset="0.27" stop-color="#d2d0ff"/><stop offset="0.53" stop-color="#feceff"/><stop offset="0.76" stop-color="#ffafdb"/><stop offset="1" stop-color="#ff96bd"/></linearGradient>
<linearGradient id="g202" x1="375.5" y1="0" x2="591.5" y2="0" gradientUnits="userSpaceOnUse"><stop offset="0" stop-color="#a8cfff"/><stop offset="0.54" stop-color="#ffcbfe"/><stop offset="0.76" stop-color="#ffaddb"/><stop offset="1" stop-color="#ff94bd"/></linearGradient>
<linearGradient id="g203" x1="375.5" y1="0" x2="591.5" y2="0" gradientUnits="userSpaceOnUse"><stop offset="0" stop-color="#a8ccff"/><stop offset="0.54" stop-color="#ffc8ff"/><stop offset="0.76" stop-color="#ffabdc"/><stop offset="1" stop-color="#ff92be"/></linearGradient>
<linearGradient id="g204" x1="375.5" y1="0" x2="591.5" y2="0" gradientUnits="userSpaceOnUse"><stop offset="0" stop-color="#a8caff"/><stop offset="0.27" stop-color="#d2c8ff"/><stop offset="0.54" stop-color="#ffc6ff"/><stop offset="0.76" stop-color="#ffa9dc"/><stop offset="1" stop-color="#ff90be"/></linearGradient>
<linearGradient id="g205" x1="375.5" y1="0" x2="591.5" y2="0" gradientUnits="userSpaceOnUse"><stop offset="0" stop-color="#a8c7ff"/><stop offset="0.28" stop-color="#d3c5ff"/><stop offset="0.54" stop-color="#ffc3ff"/><stop offset="0.76" stop-color="#ffa7dd"/><stop offset="1" stop-color="#ff8fbf"/></linearGradient>
<linearGradient id="g206" x1="375.5" y1="0" x2="591.5" y2="0" gradientUnits="userSpaceOnUse"><stop offset="0" stop-color="#a8c5ff"/><stop offset="0.28" stop-color="#d3c3ff"/><stop offset="0.54" stop-color="#fec1ff"/><stop offset="0.77" stop-color="#ffa4dc"/><stop offset="1" stop-color="#ff8dbf"/></linearGradient>
<clipPath id="tclip"><rect x="597" y="386" width="379.2" height="120.3"/></clipPath>
<linearGradient id="g207" x1="0" y1="0" x2="0" y2="1"><stop offset="0" stop-color="#474747"/><stop offset="0.5" stop-color="#3a3a3a"/><stop offset="1" stop-color="#2a2a2a"/></linearGradient>
<linearGradient id="g208" x1="0" y1="0" x2="0" y2="1"><stop offset="0" stop-color="#8e8e8e"/><stop offset="0.6" stop-color="#787878"/><stop offset="1" stop-color="#646464"/></linearGradient>
<linearGradient id="g209" x1="0" y1="0" x2="0" y2="1"><stop offset="0" stop-color="#a6a6a6"/><stop offset="0.5" stop-color="#8c8c8c"/><stop offset="1" stop-color="#6c6c6c"/></linearGradient>
<linearGradient id="g210" x1="0" y1="0" x2="0" y2="1"><stop offset="0" stop-color="#9c9c9c"/><stop offset="0.5" stop-color="#868686"/><stop offset="1" stop-color="#707070"/></linearGradient>
</defs>
<rect x="0" y="0" width="1000" height="547" fill="#333333"/>
<rect x="0" y="0" width="1000" height="9" fill="#ffffff"/>
<text x="8" y="6.6" font-size="5.4" fill="#3a3a3a" textLength="135" lengthAdjust="spacingAndGlyphs">CalMAN 2019 CalMAN Ultimate for Business 141 Days Remaining</text>
<circle cx="3.6" cy="4.6" r="3.1" fill="#0c0c0c"/><circle cx="3.6" cy="4.6" r="2.5" fill="none" stroke="url(#g1)" stroke-width="0.7"/>
<text x="3.6" y="5.6" font-size="2.6" fill="#fff" text-anchor="middle" font-weight="bold">CM</text>
<line x1="951.8" y1="4.5" x2="956.6" y2="4.5" stroke="#555" stroke-width="0.6"/>
<path d="M969.6 3.2h3.2v3.2h-3.2zM970.6 3.2v-0.9h3.2v3.2h-1" fill="none" stroke="#555" stroke-width="0.55"/>
<path d="M988.2 2.4l4 4M992.2 2.4l-4 4" stroke="#555" stroke-width="0.6" fill="none"/>
<rect x="0" y="9" width="1000" height="26" fill="#212121"/>
<rect x="74" y="14" width="926" height="2.2" fill="url(#g2)"/>
<rect x="0" y="9" width="71.5" height="11.6" rx="1.5" fill="url(#g3)"/>
<text x="5" y="19.3" font-size="11.5" fill="#ffffff" textLength="51" lengthAdjust="spacingAndGlyphs" font-weight="bold" letter-spacing="0.5">CalMAN</text>
<circle cx="64.8" cy="14.8" r="3.6" fill="#d42a33"/><path d="M62.8 13.8h4l-2 2.4z" fill="#fff"/>
<rect x="0" y="23" width="10.5" height="11.5" rx="1.5" fill="url(#g4)"/>
<circle cx="4.8" cy="28.4" r="3.4" fill="#a8a8a8"/><path d="M3.9 26.6l2.6 1.8-2.6 1.8z" fill="#fff"/>
<path d="M11.5 34.5v-9.5q0-1.5 1.5-1.5h20q1.5 0 1.5 1.5v9.5z" fill="url(#g5)" stroke="#555" stroke-width="0.6"/>
<text x="14" y="31" font-size="5" fill="#ddd" textLength="18" lengthAdjust="spacingAndGlyphs">History 1</text>
<path d="M35 34.5v-9.5q0-1.5 1.5-1.5h9.5q1.5 0 1.5 1.5v9.5z" fill="#3a3a3a" stroke="#505050" stroke-width="0.6"/>
<circle cx="40.4" cy="29.6" r="2.5" fill="#4a4a4a"/>
<text x="40.4" y="31.2" font-size="5" fill="#888" text-anchor="middle">+</text>
<rect x="789.7" y="23" width="55.6" height="11.4" rx="1" fill="url(#g6)"/>
<rect x="789.7" y="23" width="1.8" height="11.4" fill="#20d820"/>
<text x="793.3" y="27.8" font-size="4.6" fill="#e8e8e8" textLength="41.86" lengthAdjust="spacingAndGlyphs">X-Rite i1Display Retail</text>
<text x="793.3" y="33" font-size="4.6" fill="#e8e8e8" textLength="19" lengthAdjust="spacingAndGlyphs">LCD (CCFL)</text>
<circle cx="839.3" cy="29" r="3" fill="#444"/><path d="M837.6 28.2h3.4l-1.7 2z" fill="#fff"/>
<rect x="848" y="23" width="68.2" height="11.4" rx="1" fill="url(#g7)"/>
<rect x="848" y="23" width="1.8" height="11.4" fill="#20d820"/>
<text x="851.6" y="27.8" font-size="4.6" fill="#e8e8e8" textLength="54" lengthAdjust="spacingAndGlyphs">CalMED 3 Pattern Generator</text>
<circle cx="910.2" cy="29" r="3" fill="#444"/><path d="M908.5 28.2h3.4l-1.7 2z" fill="#fff"/>
<rect x="919.3" y="23" width="55" height="11.4" rx="1" fill="url(#g8)"/>
<rect x="919.3" y="23" width="1.8" height="11.4" fill="#e8d800"/>
<text x="922.9" y="27.8" font-size="4.6" fill="#e8e8e8" textLength="40.04" lengthAdjust="spacingAndGlyphs">Direct Display Control</text>
<circle cx="968.3" cy="29" r="3" fill="#444"/><path d="M966.6 28.2h3.4l-1.7 2z" fill="#fff"/>
<rect x="976.3" y="23" width="13" height="11.4" rx="1" fill="url(#g9)"/><rect x="989.8" y="23" width="10.2" height="11.4" rx="1" fill="url(#g9)"/>
<circle cx="982.8" cy="28.7" r="2.6" fill="#ddd" stroke="#555" stroke-width="0.5"/><circle cx="982.8" cy="28.7" r="1" fill="#777"/>
<circle cx="994.8" cy="28.7" r="2.6" fill="#ddd" stroke="#555" stroke-width="0.5"/><path d="M995.6 27.2v3l-2-1.5z" fill="#555"/>
<text x="5" y="63.7" font-size="24" fill="#f0f0f0" textLength="137" lengthAdjust="spacingAndGlyphs">Color Gamut</text>
<text x="74.4" y="105.1" font-size="13" fill="#f0f0f0" textLength="64.3" lengthAdjust="spacingAndGlyphs">dE Formula:</text>
<rect x="143.7" y="93" width="80.1" height="13.7" fill="url(#g10)"/>
<text x="147" y="104.6" font-size="10" fill="#f0f0f0" textLength="20.5" lengthAdjust="spacingAndGlyphs">2000</text>
<path d="M214.6 98.2h5.4l-2.7 3.2z" fill="#0a0a0a"/>
<text x="112" y="124.3" font-size="9" fill="#e4e4e4" text-anchor="middle" textLength="47" lengthAdjust="spacingAndGlyphs">DeltaE 2000</text>
<rect x="12" y="126.3" width="200.7" height="223.1" fill="#252525"/>
<line x1="38.76" y1="126.3" x2="38.76" y2="349.4" stroke="#8c8c8c" stroke-width="0.9"/>
<line x1="65.52" y1="126.3" x2="65.52" y2="349.4" stroke="#8c8c8c" stroke-width="0.9"/>
<line x1="92.28" y1="126.3" x2="92.28" y2="349.4" stroke="#8c8c8c" stroke-width="0.9"/>
<line x1="119.04" y1="126.3" x2="119.04" y2="349.4" stroke="#8c8c8c" stroke-width="0.9"/>
<line x1="145.8" y1="126.3" x2="145.8" y2="349.4" stroke="#8c8c8c" stroke-width="0.9"/>
<line x1="172.56" y1="126.3" x2="172.56" y2="349.4" stroke="#8c8c8c" stroke-width="0.9"/>
<line x1="199.32" y1="126.3" x2="199.32" y2="349.4" stroke="#8c8c8c" stroke-width="0.9"/>
<path d="M12 349.4V126.3H212.7V349.4" fill="none" stroke="#8c8c8c" stroke-width="1"/>
<line x1="12" y1="349.4" x2="212.7" y2="349.4" stroke="#8c8c8c" stroke-width="1"/>
<line x1="12" y1="349.4" x2="12" y2="352.9" stroke="#8c8c8c" stroke-width="0.9"/>
<text x="12" y="362.6" font-size="9" fill="#e4e4e4" text-anchor="middle">0</text>
<line x1="38.76" y1="349.4" x2="38.76" y2="352.9" stroke="#8c8c8c" stroke-width="0.9"/>
<text x="38.76" y="362.6" font-size="9" fill="#e4e4e4" text-anchor="middle">2</text>
<line x1="65.52" y1="349.4" x2="65.52" y2="352.9" stroke="#8c8c8c" stroke-width="0.9"/>
<text x="65.52" y="362.6" font-size="9" fill="#e4e4e4" text-anchor="middle">4</text>
<line x1="92.28" y1="349.4" x2="92.28" y2="352.9" stroke="#8c8c8c" stroke-width="0.9"/>
<text x="92.28" y="362.6" font-size="9" fill="#e4e4e4" text-anchor="middle">6</text>
<line x1="119.04" y1="349.4" x2="119.04" y2="352.9" stroke="#8c8c8c" stroke-width="0.9"/>
<text x="119.04" y="362.6" font-size="9" fill="#e4e4e4" text-anchor="middle">8</text>
<line x1="145.8" y1="349.4" x2="145.8" y2="352.9" stroke="#8c8c8c" stroke-width="0.9"/>
<text x="145.8" y="362.6" font-size="9" fill="#e4e4e4" text-anchor="middle">10</text>
<line x1="172.56" y1="349.4" x2="172.56" y2="352.9" stroke="#8c8c8c" stroke-width="0.9"/>
<text x="172.56" y="362.6" font-size="9" fill="#e4e4e4" text-anchor="middle">12</text>
<line x1="199.32" y1="349.4" x2="199.32" y2="352.9" stroke="#8c8c8c" stroke-width="0.9"/>
<text x="199.32" y="362.6" font-size="9" fill="#e4e4e4" text-anchor="middle">14</text>
<rect x="12.5" y="128.8" width="18.2" height="22.2" fill="#0a0a0a"/>
<rect x="12.5" y="129.5" width="17.2" height="20.6" fill="url(#g11)"/>
<rect x="12.5" y="156.7" width="19.02" height="22.2" fill="#0a0a0a"/>
<rect x="12.5" y="157.4" width="18.02" height="20.6" fill="url(#g12)"/>
<rect x="12.5" y="184.6" width="15.57" height="22.2" fill="#0a0a0a"/>
<rect x="12.5" y="185.3" width="14.57" height="20.6" fill="url(#g13)"/>
<rect x="12.5" y="212.5" width="23.66" height="22.2" fill="#0a0a0a"/>
<rect x="12.5" y="213.2" width="22.66" height="20.6" fill="url(#g14)"/>
<rect x="12.5" y="240.4" width="22.77" height="22.2" fill="#0a0a0a"/>
<rect x="12.5" y="241.1" width="21.77" height="20.6" fill="url(#g15)"/>
<rect x="12.5" y="268.3" width="17.59" height="22.2" fill="#0a0a0a"/>
<rect x="12.5" y="269" width="16.59" height="20.6" fill="url(#g16)"/>
<rect x="12.5" y="296.2" width="33.4" height="22.2" fill="#0a0a0a"/>
<rect x="12.5" y="296.9" width="32.4" height="20.6" fill="url(#g17)"/>
<rect x="12.5" y="324.1" width="26.28" height="22.2" fill="#0a0a0a"/>
<rect x="12.5" y="324.8" width="25.28" height="20.6" fill="url(#g18)"/>
<rect x="244.4" y="62.5" width="86.9" height="188.1" fill="#252525"/>
<line x1="244.4" y1="94.45" x2="331.3" y2="94.45" stroke="#8c8c8c" stroke-width="0.9"/>
<line x1="244.4" y1="125.4" x2="331.3" y2="125.4" stroke="#8c8c8c" stroke-width="0.9"/>
<line x1="244.4" y1="157.5" x2="331.3" y2="157.5" stroke="#8c8c8c" stroke-width="0.9"/>
<line x1="244.4" y1="188.6" x2="331.3" y2="188.6" stroke="#8c8c8c" stroke-width="0.9"/>
<line x1="244.4" y1="220.6" x2="331.3" y2="220.6" stroke="#8c8c8c" stroke-width="0.9"/>
<rect x="244.4" y="62.5" width="86.9" height="188.1" fill="none" stroke="#8c8c8c" stroke-width="1"/>
<line x1="240.8" y1="62.5" x2="244.4" y2="62.5" stroke="#8c8c8c" stroke-width="0.9"/>
<text x="240.6" y="66.1" font-size="9" fill="#e4e4e4" text-anchor="end" textLength="9" lengthAdjust="spacingAndGlyphs">15</text>
<line x1="240.8" y1="94.45" x2="244.4" y2="94.45" stroke="#8c8c8c" stroke-width="0.9"/>
<text x="240.6" y="98.05" font-size="9" fill="#e4e4e4" text-anchor="end" textLength="9" lengthAdjust="spacingAndGlyphs">10</text>
<line x1="240.8" y1="125.4" x2="244.4" y2="125.4" stroke="#8c8c8c" stroke-width="0.9"/>
<text x="240.6" y="129" font-size="9" fill="#e4e4e4" text-anchor="end" textLength="4.5" lengthAdjust="spacingAndGlyphs">5</text>
<line x1="240.8" y1="157.5" x2="244.4" y2="157.5" stroke="#8c8c8c" stroke-width="0.9"/>
<text x="240.6" y="161.1" font-size="9" fill="#e4e4e4" text-anchor="end" textLength="4.5" lengthAdjust="spacingAndGlyphs">0</text>
<line x1="240.8" y1="188.6" x2="244.4" y2="188.6" stroke="#8c8c8c" stroke-width="0.9"/>
<text x="240.6" y="192.2" font-size="9" fill="#e4e4e4" text-anchor="end" textLength="7.1" lengthAdjust="spacingAndGlyphs">-5</text>
<line x1="240.8" y1="220.6" x2="244.4" y2="220.6" stroke="#8c8c8c" stroke-width="0.9"/>
<text x="240.6" y="224.2" font-size="9" fill="#e4e4e4" text-anchor="end" textLength="11.6" lengthAdjust="spacingAndGlyphs">-10</text>
<line x1="240.8" y1="250.6" x2="244.4" y2="250.6" stroke="#8c8c8c" stroke-width="0.9"/>
<text x="240.6" y="254.2" font-size="9" fill="#e4e4e4" text-anchor="end" textLength="11.6" lengthAdjust="spacingAndGlyphs">-15</text>
<line x1="244.4" y1="250.6" x2="244.4" y2="254.5" stroke="#8c8c8c" stroke-width="0.9"/>
<line x1="331.3" y1="250.6" x2="331.3" y2="254.5" stroke="#8c8c8c" stroke-width="0.9"/>
<text x="280.25" y="58.6" font-size="9" fill="#e4e4e4" text-anchor="middle" textLength="25.5" lengthAdjust="spacingAndGlyphs">DeltaL</text>
<text x="287.85" y="261" font-size="9" fill="#e4e4e4" text-anchor="middle" textLength="23" lengthAdjust="spacingAndGlyphs">100W</text>
<line x1="252.4" y1="157.5" x2="323.3" y2="157.5" stroke="#2a2a2a" stroke-width="1.2"/>
<rect x="362.4" y="62.5" width="86.9" height="188.1" fill="#252525"/>
<line x1="362.4" y1="94.45" x2="449.3" y2="94.45" stroke="#8c8c8c" stroke-width="0.9"/>
<line x1="362.4" y1="125.4" x2="449.3" y2="125.4" stroke="#8c8c8c" stroke-width="0.9"/>
<line x1="362.4" y1="157.5" x2="449.3" y2="157.5" stroke="#8c8c8c" stroke-width="0.9"/>
<line x1="362.4" y1="188.6" x2="449.3" y2="188.6" stroke="#8c8c8c" stroke-width="0.9"/>
<line x1="362.4" y1="220.6" x2="449.3" y2="220.6" stroke="#8c8c8c" stroke-width="0.9"/>
<rect x="362.4" y="62.5" width="86.9" height="188.1" fill="none" stroke="#8c8c8c" stroke-width="1"/>
<line x1="358.8" y1="62.5" x2="362.4" y2="62.5" stroke="#8c8c8c" stroke-width="0.9"/>
<text x="358.6" y="66.1" font-size="9" fill="#e4e4e4" text-anchor="end" textLength="9" lengthAdjust="spacingAndGlyphs">15</text>
<line x1="358.8" y1="94.45" x2="362.4" y2="94.45" stroke="#8c8c8c" stroke-width="0.9"/>
<text x="358.6" y="98.05" font-size="9" fill="#e4e4e4" text-anchor="end" textLength="9" lengthAdjust="spacingAndGlyphs">10</text>
<line x1="358.8" y1="125.4" x2="362.4" y2="125.4" stroke="#8c8c8c" stroke-width="0.9"/>
<text x="358.6" y="129" font-size="9" fill="#e4e4e4" text-anchor="end" textLength="4.5" lengthAdjust="spacingAndGlyphs">5</text>
<line x1="358.8" y1="157.5" x2="362.4" y2="157.5" stroke="#8c8c8c" stroke-width="0.9"/>
<text x="358.6" y="161.1" font-size="9" fill="#e4e4e4" text-anchor="end" textLength="4.5" lengthAdjust="spacingAndGlyphs">0</text>
<line x1="358.8" y1="188.6" x2="362.4" y2="188.6" stroke="#8c8c8c" stroke-width="0.9"/>
<text x="358.6" y="192.2" font-size="9" fill="#e4e4e4" text-anchor="end" textLength="7.1" lengthAdjust="spacingAndGlyphs">-5</text>
<line x1="358.8" y1="220.6" x2="362.4" y2="220.6" stroke="#8c8c8c" stroke-width="0.9"/>
<text x="358.6" y="224.2" font-size="9" fill="#e4e4e4" text-anchor="end" textLength="11.6" lengthAdjust="spacingAndGlyphs">-10</text>
<line x1="358.8" y1="250.6" x2="362.4" y2="250.6" stroke="#8c8c8c" stroke-width="0.9"/>
<text x="358.6" y="254.2" font-size="9" fill="#e4e4e4" text-anchor="end" textLength="11.6" lengthAdjust="spacingAndGlyphs">-15</text>
<line x1="362.4" y1="250.6" x2="362.4" y2="254.5" stroke="#8c8c8c" stroke-width="0.9"/>
<line x1="449.3" y1="250.6" x2="449.3" y2="254.5" stroke="#8c8c8c" stroke-width="0.9"/>
<text x="398.25" y="58.6" font-size="9" fill="#e4e4e4" text-anchor="middle" textLength="25.5" lengthAdjust="spacingAndGlyphs">DeltaC</text>
<text x="405.85" y="261" font-size="9" fill="#e4e4e4" text-anchor="middle" textLength="23" lengthAdjust="spacingAndGlyphs">100W</text>
<rect x="371.8" y="148.6" width="68.1" height="8.7" rx="1" fill="url(#g19)" stroke="#080808" stroke-width="1"/>
<rect x="481.2" y="62.5" width="86.4" height="188.1" fill="#252525"/>
<line x1="481.2" y1="94.45" x2="567.6" y2="94.45" stroke="#8c8c8c" stroke-width="0.9"/>
<line x1="481.2" y1="125.4" x2="567.6" y2="125.4" stroke="#8c8c8c" stroke-width="0.9"/>
<line x1="481.2" y1="157.5" x2="567.6" y2="157.5" stroke="#8c8c8c" stroke-width="0.9"/>
<line x1="481.2" y1="188.6" x2="567.6" y2="188.6" stroke="#8c8c8c" stroke-width="0.9"/>
<line x1="481.2" y1="220.6" x2="567.6" y2="220.6" stroke="#8c8c8c" stroke-width="0.9"/>
<rect x="481.2" y="62.5" width="86.4" height="188.1" fill="none" stroke="#8c8c8c" stroke-width="1"/>
<line x1="477.6" y1="62.5" x2="481.2" y2="62.5" stroke="#8c8c8c" stroke-width="0.9"/>
<text x="477.4" y="66.1" font-size="9" fill="#e4e4e4" text-anchor="end" textLength="9" lengthAdjust="spacingAndGlyphs">15</text>
<line x1="477.6" y1="94.45" x2="481.2" y2="94.45" stroke="#8c8c8c" stroke-width="0.9"/>
<text x="477.4" y="98.05" font-size="9" fill="#e4e4e4" text-anchor="end" textLength="9" lengthAdjust="spacingAndGlyphs">10</text>
<line x1="477.6" y1="125.4" x2="481.2" y2="125.4" stroke="#8c8c8c" stroke-width="0.9"/>
<text x="477.4" y="129" font-size="9" fill="#e4e4e4" text-anchor="end" textLength="4.5" lengthAdjust="spacingAndGlyphs">5</text>
<line x1="477.6" y1="157.5" x2="481.2" y2="157.5" stroke="#8c8c8c" stroke-width="0.9"/>
<text x="477.4" y="161.1" font-size="9" fill="#e4e4e4" text-anchor="end" textLength="4.5" lengthAdjust="spacingAndGlyphs">0</text>
<line x1="477.6" y1="188.6" x2="481.2" y2="188.6" stroke="#8c8c8c" stroke-width="0.9"/>
<text x="477.4" y="192.2" font-size="9" fill="#e4e4e4" text-anchor="end" textLength="7.1" lengthAdjust="spacingAndGlyphs">-5</text>
<line x1="477.6" y1="220.6" x2="481.2" y2="220.6" stroke="#8c8c8c" stroke-width="0.9"/>
<text x="477.4" y="224.2" font-size="9" fill="#e4e4e4" text-anchor="end" textLength="11.6" lengthAdjust="spacingAndGlyphs">-10</text>
<line x1="477.6" y1="250.6" x2="481.2" y2="250.6" stroke="#8c8c8c" stroke-width="0.9"/>
<text x="477.4" y="254.2" font-size="9" fill="#e4e4e4" text-anchor="end" textLength="11.6" lengthAdjust="spacingAndGlyphs">-15</text>
<line x1="481.2" y1="250.6" x2="481.2" y2="254.5" stroke="#8c8c8c" stroke-width="0.9"/>
<line x1="567.6" y1="250.6" x2="567.6" y2="254.5" stroke="#8c8c8c" stroke-width="0.9"/>
<text x="516.8" y="58.6" font-size="9" fill="#e4e4e4" text-anchor="middle" textLength="25.5" lengthAdjust="spacingAndGlyphs">DeltaH</text>
<text x="524.4" y="261" font-size="9" fill="#e4e4e4" text-anchor="middle" textLength="23" lengthAdjust="spacingAndGlyphs">100W</text>
<line x1="489.2" y1="157.5" x2="559.6" y2="157.5" stroke="#2a2a2a" stroke-width="1.2"/>
<rect x="225" y="271" width="354.6" height="97" fill="#000000"/>
<rect x="235.1" y="275" width="37.2" height="79.4" fill="#c1c1c3"/>
<rect x="235.1" y="314.6" width="37.2" height="39.8" fill="#bababa"/>
<rect x="235.5" y="275.4" width="36.4" height="78.6" fill="none" stroke="#d8d8d8" stroke-width="0.8" opacity="0.8"/>
<text x="253.7" y="363.7" font-size="8" fill="#f0f0f0" text-anchor="middle">White</text>
<rect x="278.45" y="275" width="37.2" height="79.4" fill="#be0014"/>
<rect x="278.45" y="314.6" width="37.2" height="39.8" fill="#bb0000"/>
<rect x="278.85" y="275.4" width="36.4" height="78.6" fill="none" stroke="#e08088" stroke-width="0.8" opacity="0.8"/>
<text x="297.05" y="363.7" font-size="8" fill="#f0f0f0" text-anchor="middle">Red</text>
<rect x="321.8" y="275" width="37.2" height="79.4" fill="#0cbe14"/>
<rect x="321.8" y="314.6" width="37.2" height="39.8" fill="#00bb00"/>
<rect x="322.2" y="275.4" width="36.4" height="78.6" fill="none" stroke="#80e088" stroke-width="0.8" opacity="0.8"/>
<text x="340.4" y="363.7" font-size="8" fill="#f0f0f0" text-anchor="middle">Green</text>
<rect x="365.15" y="275" width="37.2" height="79.4" fill="#2800be"/>
<rect x="365.15" y="314.6" width="37.2" height="39.8" fill="#0c0cbe"/>
<rect x="365.55" y="275.4" width="36.4" height="78.6" fill="none" stroke="#8880e0" stroke-width="0.8" opacity="0.8"/>
<text x="383.75" y="363.7" font-size="8" fill="#f0f0f0" text-anchor="middle">Blue</text>
<rect x="408.5" y="275" width="37.2" height="79.4" fill="#24bec3"/>
<rect x="408.5" y="314.6" width="37.2" height="39.8" fill="#00bbbb"/>
<rect x="408.9" y="275.4" width="36.4" height="78.6" fill="none" stroke="#88e0e0" stroke-width="0.8" opacity="0.8"/>
<text x="427.1" y="363.7" font-size="8" fill="#f0f0f0" text-anchor="middle">Cyan</text>
<rect x="451.85" y="275" width="37.2" height="79.4" fill="#be00be"/>
<rect x="451.85" y="314.6" width="37.2" height="39.8" fill="#bb12bb"/>
<rect x="452.25" y="275.4" width="36.4" height="78.6" fill="none" stroke="#e080e0" stroke-width="0.8" opacity="0.8"/>
<text x="470.45" y="363.7" font-size="8" fill="#f0f0f0" text-anchor="middle">Magenta</text>
<rect x="495.2" y="275" width="37.2" height="79.4" fill="#c3be14"/>
<rect x="495.2" y="314.6" width="37.2" height="39.8" fill="#bbbb00"/>
<rect x="495.6" y="275.4" width="36.4" height="78.6" fill="none" stroke="#e0e088" stroke-width="0.8" opacity="0.8"/>
<text x="513.8" y="363.7" font-size="8" fill="#f0f0f0" text-anchor="middle">Yellow</text>
<rect x="538.55" y="275" width="37.2" height="79.4" fill="#ffffff"/>
<rect x="538.55" y="314.6" width="37.2" height="39.8" fill="#ffffff"/>
<rect x="538.95" y="275.4" width="36.4" height="78.6" fill="none" stroke="#ffffff" stroke-width="0.8" opacity="0.8"/>
<text x="557.15" y="363.7" font-size="8" fill="#f0f0f0" text-anchor="middle">100W</text>
<text transform="translate(232.2 302.8) rotate(-90)" font-size="7.6" fill="#f0f0f0" textLength="20" lengthAdjust="spacingAndGlyphs">Actual</text>
<text transform="translate(232.2 347) rotate(-90)" font-size="7.6" fill="#f0f0f0" textLength="20" lengthAdjust="spacingAndGlyphs">Target</text>
<path d="M583.5 42.8H999.6V376.5H583.5zM588.1 47.3V371.9H995.1V47.3z" fill="#c8be00" fill-rule="evenodd"/>
<text x="791.5" y="58.3" font-size="9" fill="#e4e4e4" text-anchor="middle" textLength="50" lengthAdjust="spacingAndGlyphs">CIE 1976 u'v'</text>
<rect x="610.5" y="61.5" width="382.8" height="294.1" fill="#252525"/>
<g clip-path="url(#locus)"><g filter="url(#sm)">
<rect x="628.5" y="65.7" width="33" height="2.6" fill="url(#g20)"/>
<rect x="618.5" y="67.7" width="68" height="2.6" fill="url(#g21)"/>
<rect x="614.5" y="69.7" width="91" height="2.6" fill="url(#g22)"/>
<rect x="612.5" y="71.7" width="112" height="2.6" fill="url(#g23)"/>
<rect x="611.5" y="73.7" width="130" height="2.6" fill="url(#g24)"/>
<rect x="609.5" y="75.7" width="150" height="2.6" fill="url(#g25)"/>
<rect x="609.5" y="77.7" width="167" height="2.6" fill="url(#g26)"/>
<rect x="608.5" y="79.7" width="186" height="2.6" fill="url(#g27)"/>
<rect x="607.5" y="81.7" width="204" height="2.6" fill="url(#g28)"/>
<rect x="607.5" y="83.7" width="221" height="2.6" fill="url(#g29)"/>
<rect x="607.5" y="85.7" width="239" height="2.6" fill="url(#g30)"/>
<rect x="607.5" y="87.7" width="256" height="2.6" fill="url(#g31)"/>
<rect x="607.5" y="89.7" width="274" height="2.6" fill="url(#g32)"/>
<rect x="607.5" y="91.7" width="291" height="2.6" fill="url(#g33)"/>
<rect x="607.5" y="93.7" width="309" height="2.6" fill="url(#g34)"/>
<rect x="607.5" y="95.7" width="326" height="2.6" fill="url(#g35)"/>
<rect x="607.5" y="97.7" width="343" height="2.6" fill="url(#g36)"/>
<rect x="608.5" y="99.7" width="360" height="2.6" fill="url(#g37)"/>
<rect x="608.5" y="101.7" width="377" height="2.6" fill="url(#g38)"/>
<rect x="608.5" y="103.7" width="389" height="2.6" fill="url(#g39)"/>
<rect x="609.5" y="105.7" width="388" height="2.6" fill="url(#g40)"/>
<rect x="609.5" y="107.7" width="388" height="2.6" fill="url(#g41)"/>
<rect x="610.5" y="109.7" width="387" height="2.6" fill="url(#g42)"/>
<rect x="610.5" y="111.7" width="387" height="2.6" fill="url(#g43)"/>
<rect x="611.5" y="113.7" width="386" height="2.6" fill="url(#g44)"/>
<rect x="611.5" y="115.7" width="386" height="2.6" fill="url(#g45)"/>
<rect x="612.5" y="117.7" width="385" height="2.6" fill="url(#g46)"/>
<rect x="612.5" y="119.7" width="385" height="2.6" fill="url(#g47)"/>
<rect x="613.5" y="121.7" width="383" height="2.6" fill="url(#g48)"/>
<rect x="613.5" y="123.7" width="381" height="2.6" fill="url(#g49)"/>
<rect x="614.5" y="125.7" width="378" height="2.6" fill="url(#g50)"/>
<rect x="615.5" y="127.7" width="375" height="2.6" fill="url(#g51)"/>
<rect x="615.5" y="129.7" width="373" height="2.6" fill="url(#g52)"/>
<rect x="616.5" y="131.7" width="370" height="2.6" fill="url(#g53)"/>
<rect x="617.5" y="133.7" width="367" height="2.6" fill="url(#g54)"/>
<rect x="617.5" y="135.7" width="365" height="2.6" fill="url(#g55)"/>
<rect x="618.5" y="137.7" width="362" height="2.6" fill="url(#g56)"/>
<rect x="619.5" y="139.7" width="360" height="2.6" fill="url(#g57)"/>
<rect x="620.5" y="141.7" width="357" height="2.6" fill="url(#g58)"/>
<rect x="620.5" y="143.7" width="355" height="2.6" fill="url(#g59)"/>
<rect x="621.5" y="145.7" width="352" height="2.6" fill="url(#g60)"/>
<rect x="622.5" y="147.7" width="349" height="2.6" fill="url(#g61)"/>
<rect x="623.5" y="149.7" width="346" height="2.6" fill="url(#g62)"/>
<rect x="623.5" y="151.7" width="344" height="2.6" fill="url(#g63)"/>
<rect x="624.5" y="153.7" width="341" height="2.6" fill="url(#g64)"/>
<rect x="625.5" y="155.7" width="338" height="2.6" fill="url(#g65)"/>
<rect x="626.5" y="157.7" width="335" height="2.6" fill="url(#g66)"/>
<rect x="627.5" y="159.7" width="332" height="2.6" fill="url(#g67)"/>
<rect x="628.5" y="161.7" width="329" height="2.6" fill="url(#g68)"/>
<rect x="628.5" y="163.7" width="327" height="2.6" fill="url(#g69)"/>
<rect x="629.5" y="165.7" width="324" height="2.6" fill="url(#g70)"/>
<rect x="630.5" y="167.7" width="321" height="2.6" fill="url(#g71)"/>
<rect x="631.5" y="169.7" width="318" height="2.6" fill="url(#g72)"/>
<rect x="632.5" y="171.7" width="315" height="2.6" fill="url(#g73)"/>
<rect x="633.5" y="173.7" width="312" height="2.6" fill="url(#g74)"/>
<rect x="634.5" y="175.7" width="309" height="2.6" fill="url(#g75)"/>
<rect x="635.5" y="177.7" width="307" height="2.6" fill="url(#g76)"/>
<rect x="636.5" y="179.7" width="304" height="2.6" fill="url(#g77)"/>
<rect x="637.5" y="181.7" width="301" height="2.6" fill="url(#g78)"/>
<rect x="638.5" y="183.7" width="298" height="2.6" fill="url(#g79)"/>
<rect x="639.5" y="185.7" width="295" height="2.6" fill="url(#g80)"/>
<rect x="640.5" y="187.7" width="292" height="2.6" fill="url(#g81)"/>
<rect x="641.5" y="189.7" width="289" height="2.6" fill="url(#g82)"/>
<rect x="642.5" y="191.7" width="286" height="2.6" fill="url(#g83)"/>
<rect x="643.5" y="193.7" width="283" height="2.6" fill="url(#g84)"/>
<rect x="644.5" y="195.7" width="280" height="2.6" fill="url(#g85)"/>
<rect x="645.5" y="197.7" width="277" height="2.6" fill="url(#g86)"/>
<rect x="646.5" y="199.7" width="274" height="2.6" fill="url(#g87)"/>
<rect x="647.5" y="201.7" width="271" height="2.6" fill="url(#g88)"/>
<rect x="648.5" y="203.7" width="268" height="2.6" fill="url(#g89)"/>
<rect x="649.5" y="205.7" width="265" height="2.6" fill="url(#g90)"/>
<rect x="650.5" y="207.7" width="262" height="2.6" fill="url(#g91)"/>
<rect x="652.5" y="209.7" width="258" height="2.6" fill="url(#g92)"/>
<rect x="653.5" y="211.7" width="255" height="2.6" fill="url(#g93)"/>
<rect x="654.5" y="213.7" width="252" height="2.6" fill="url(#g94)"/>
<rect x="655.5" y="215.7" width="250" height="2.6" fill="url(#g95)"/>
<rect x="656.5" y="217.7" width="247" height="2.6" fill="url(#g96)"/>
<rect x="657.5" y="219.7" width="244" height="2.6" fill="url(#g97)"/>
<rect x="659.5" y="221.7" width="240" height="2.6" fill="url(#g98)"/>
<rect x="660.5" y="223.7" width="237" height="2.6" fill="url(#g99)"/>
<rect x="661.5" y="225.7" width="234" height="2.6" fill="url(#g100)"/>
<rect x="662.5" y="227.7" width="231" height="2.6" fill="url(#g101)"/>
<rect x="663.5" y="229.7" width="228" height="2.6" fill="url(#g102)"/>
<rect x="665.5" y="231.7" width="224" height="2.6" fill="url(#g103)"/>
<rect x="666.5" y="233.7" width="221" height="2.6" fill="url(#g104)"/>
<rect x="667.5" y="235.7" width="218" height="2.6" fill="url(#g105)"/>
<rect x="668.5" y="237.7" width="215" height="2.6" fill="url(#g106)"/>
<rect x="670.5" y="239.7" width="211" height="2.6" fill="url(#g107)"/>
<rect x="671.5" y="241.7" width="208" height="2.6" fill="url(#g108)"/>
<rect x="672.5" y="243.7" width="205" height="2.6" fill="url(#g109)"/>
<rect x="673.5" y="245.7" width="202" height="2.6" fill="url(#g110)"/>
<rect x="675.5" y="247.7" width="198" height="2.6" fill="url(#g111)"/>
<rect x="676.5" y="249.7" width="195" height="2.6" fill="url(#g112)"/>
<rect x="677.5" y="251.7" width="192" height="2.6" fill="url(#g113)"/>
<rect x="679.5" y="253.7" width="189" height="2.6" fill="url(#g114)"/>
<rect x="680.5" y="255.7" width="186" height="2.6" fill="url(#g115)"/>
<rect x="681.5" y="257.7" width="183" height="2.6" fill="url(#g116)"/>
<rect x="683.5" y="259.7" width="179" height="2.6" fill="url(#g117)"/>
<rect x="684.5" y="261.7" width="176" height="2.6" fill="url(#g118)"/>
<rect x="685.5" y="263.7" width="173" height="2.6" fill="url(#g119)"/>
<rect x="687.5" y="265.7" width="169" height="2.6" fill="url(#g120)"/>
<rect x="688.5" y="267.7" width="166" height="2.6" fill="url(#g121)"/>
<rect x="690.5" y="269.7" width="162" height="2.6" fill="url(#g122)"/>
<rect x="691.5" y="271.7" width="159" height="2.6" fill="url(#g123)"/>
<rect x="693.5" y="273.7" width="155" height="2.6" fill="url(#g124)"/>
<rect x="694.5" y="275.7" width="152" height="2.6" fill="url(#g125)"/>
<rect x="696.5" y="277.7" width="148" height="2.6" fill="url(#g126)"/>
<rect x="697.5" y="279.7" width="145" height="2.6" fill="url(#g127)"/>
<rect x="699.5" y="281.7" width="141" height="2.6" fill="url(#g128)"/>
<rect x="700.5" y="283.7" width="138" height="2.6" fill="url(#g129)"/>
<rect x="702.5" y="285.7" width="134" height="2.6" fill="url(#g130)"/>
<rect x="703.5" y="287.7" width="131" height="2.6" fill="url(#g131)"/>
<rect x="705.5" y="289.7" width="127" height="2.6" fill="url(#g132)"/>
<rect x="707.5" y="291.7" width="124" height="2.6" fill="url(#g133)"/>
<rect x="708.5" y="293.7" width="121" height="2.6" fill="url(#g134)"/>
<rect x="710.5" y="295.7" width="117" height="2.6" fill="url(#g135)"/>
<rect x="712.5" y="297.7" width="113" height="2.6" fill="url(#g136)"/>
<rect x="714.5" y="299.7" width="109" height="2.6" fill="url(#g137)"/>
<rect x="715.5" y="301.7" width="106" height="2.6" fill="url(#g138)"/>
<rect x="717.5" y="303.7" width="102" height="2.6" fill="url(#g139)"/>
<rect x="719.5" y="305.7" width="98" height="2.6" fill="url(#g140)"/>
<rect x="721.5" y="307.7" width="94" height="2.6" fill="url(#g141)"/>
<rect x="723.5" y="309.7" width="90" height="2.6" fill="url(#g142)"/>
<rect x="725.5" y="311.7" width="86" height="2.6" fill="url(#g143)"/>
<rect x="727.5" y="313.7" width="82" height="2.6" fill="url(#g144)"/>
<rect x="730.5" y="315.7" width="77" height="2.6" fill="url(#g145)"/>
<rect x="732.5" y="317.7" width="73" height="2.6" fill="url(#g146)"/>
<rect x="734.5" y="319.7" width="69" height="2.6" fill="url(#g147)"/>
<rect x="736.5" y="321.7" width="65" height="2.6" fill="url(#g148)"/>
<rect x="739.5" y="323.7" width="60" height="2.6" fill="url(#g149)"/>
<rect x="741.5" y="325.7" width="56" height="2.6" fill="url(#g150)"/>
<rect x="744.5" y="327.7" width="51" height="2.6" fill="url(#g151)"/>
<rect x="746.5" y="329.7" width="48" height="2.6" fill="url(#g152)"/>
<rect x="748.5" y="331.7" width="44" height="2.6" fill="url(#g153)"/>
<rect x="751.5" y="333.7" width="39" height="2.6" fill="url(#g154)"/>
<rect x="753.5" y="335.7" width="35" height="2.6" fill="url(#g155)"/>
<rect x="756.5" y="337.7" width="30" height="2.6" fill="url(#g156)"/>
<rect x="758.5" y="339.7" width="26" height="2.6" fill="url(#g157)"/>
<rect x="760.5" y="341.7" width="22" height="2.6" fill="url(#g158)"/>
<rect x="763.5" y="343.7" width="17" height="2.6" fill="url(#g159)"/>
<rect x="765.5" y="345.7" width="13" height="2.6" fill="url(#g160)"/>
</g>
<path d="M600 50H1000V360H600z M897.55 98.59L689.75 79.18L721.91 277.5z" fill="#000" fill-opacity="0.40" fill-rule="evenodd"/>
</g>
<path d="M610.5 355.6V61.5H993.3V355.6" fill="none" stroke="#8c8c8c" stroke-width="1"/>
<line x1="610.5" y1="355.6" x2="993.3" y2="355.6" stroke="#8c8c8c" stroke-width="1"/>
<line x1="610.5" y1="355.6" x2="610.5" y2="358.7" stroke="#8c8c8c" stroke-width="1.2"/>
<text x="610.5" y="367.8" font-size="9" fill="#e4e4e4" text-anchor="middle" textLength="4.8" lengthAdjust="spacingAndGlyphs">0</text>
<line x1="607" y1="355.6" x2="610.5" y2="355.6" stroke="#8c8c8c" stroke-width="0.9"/>
<text x="606.9" y="359.2" font-size="9" fill="#e4e4e4" text-anchor="end" textLength="4.8" lengthAdjust="spacingAndGlyphs">0</text>
<line x1="642.4" y1="355.6" x2="642.4" y2="358.7" stroke="#8c8c8c" stroke-width="1.2"/>
<text x="642.4" y="367.8" font-size="9" fill="#e4e4e4" text-anchor="middle" textLength="17.2" lengthAdjust="spacingAndGlyphs">0,05</text>
<line x1="607" y1="331.09" x2="610.5" y2="331.09" stroke="#8c8c8c" stroke-width="0.9"/>
<text x="606.9" y="334.69" font-size="9" fill="#e4e4e4" text-anchor="end" textLength="17.2" lengthAdjust="spacingAndGlyphs">0,05</text>
<line x1="674.3" y1="355.6" x2="674.3" y2="358.7" stroke="#8c8c8c" stroke-width="1.2"/>
<text x="674.3" y="367.8" font-size="9" fill="#e4e4e4" text-anchor="middle" textLength="12.4" lengthAdjust="spacingAndGlyphs">0,1</text>
<line x1="607" y1="306.58" x2="610.5" y2="306.58" stroke="#8c8c8c" stroke-width="0.9"/>
<text x="606.9" y="310.18" font-size="9" fill="#e4e4e4" text-anchor="end" textLength="12.4" lengthAdjust="spacingAndGlyphs">0,1</text>
<line x1="706.2" y1="355.6" x2="706.2" y2="358.7" stroke="#8c8c8c" stroke-width="1.2"/>
<text x="706.2" y="367.8" font-size="9" fill="#e4e4e4" text-anchor="middle" textLength="17.2" lengthAdjust="spacingAndGlyphs">0,15</text>
<line x1="607" y1="282.07" x2="610.5" y2="282.07" stroke="#8c8c8c" stroke-width="0.9"/>
<text x="606.9" y="285.68" font-size="9" fill="#e4e4e4" text-anchor="end" textLength="17.2" lengthAdjust="spacingAndGlyphs">0,15</text>
<line x1="738.1" y1="355.6" x2="738.1" y2="358.7" stroke="#8c8c8c" stroke-width="1.2"/>
<text x="738.1" y="367.8" font-size="9" fill="#e4e4e4" text-anchor="middle" textLength="12.4" lengthAdjust="spacingAndGlyphs">0,2</text>
<line x1="607" y1="257.57" x2="610.5" y2="257.57" stroke="#8c8c8c" stroke-width="0.9"/>
<text x="606.9" y="261.17" font-size="9" fill="#e4e4e4" text-anchor="end" textLength="12.4" lengthAdjust="spacingAndGlyphs">0,2</text>
<line x1="770" y1="355.6" x2="770" y2="358.7" stroke="#8c8c8c" stroke-width="1.2"/>
<text x="770" y="367.8" font-size="9" fill="#e4e4e4" text-anchor="middle" textLength="17.2" lengthAdjust="spacingAndGlyphs">0,25</text>
<line x1="607" y1="233.06" x2="610.5" y2="233.06" stroke="#8c8c8c" stroke-width="0.9"/>
<text x="606.9" y="236.66" font-size="9" fill="#e4e4e4" text-anchor="end" textLength="17.2" lengthAdjust="spacingAndGlyphs">0,25</text>
<line x1="801.9" y1="355.6" x2="801.9" y2="358.7" stroke="#8c8c8c" stroke-width="1.2"/>
<text x="801.9" y="367.8" font-size="9" fill="#e4e4e4" text-anchor="middle" textLength="12.4" lengthAdjust="spacingAndGlyphs">0,3</text>
<line x1="607" y1="208.55" x2="610.5" y2="208.55" stroke="#8c8c8c" stroke-width="0.9"/>
<text x="606.9" y="212.15" font-size="9" fill="#e4e4e4" text-anchor="end" textLength="12.4" lengthAdjust="spacingAndGlyphs">0,3</text>
<line x1="833.8" y1="355.6" x2="833.8" y2="358.7" stroke="#8c8c8c" stroke-width="1.2"/>
<text x="833.8" y="367.8" font-size="9" fill="#e4e4e4" text-anchor="middle" textLength="17.2" lengthAdjust="spacingAndGlyphs">0,35</text>
<line x1="607" y1="184.04" x2="610.5" y2="184.04" stroke="#8c8c8c" stroke-width="0.9"/>
<text x="606.9" y="187.64" font-size="9" fill="#e4e4e4" text-anchor="end" textLength="17.2" lengthAdjust="spacingAndGlyphs">0,35</text>
<line x1="865.7" y1="355.6" x2="865.7" y2="358.7" stroke="#8c8c8c" stroke-width="1.2"/>
<text x="865.7" y="367.8" font-size="9" fill="#e4e4e4" text-anchor="middle" textLength="12.4" lengthAdjust="spacingAndGlyphs">0,4</text>
<line x1="607" y1="159.53" x2="610.5" y2="159.53" stroke="#8c8c8c" stroke-width="0.9"/>
<text x="606.9" y="163.13" font-size="9" fill="#e4e4e4" text-anchor="end" textLength="12.4" lengthAdjust="spacingAndGlyphs">0,4</text>
<line x1="897.6" y1="355.6" x2="897.6" y2="358.7" stroke="#8c8c8c" stroke-width="1.2"/>
<text x="897.6" y="367.8" font-size="9" fill="#e4e4e4" text-anchor="middle" textLength="17.2" lengthAdjust="spacingAndGlyphs">0,45</text>
<line x1="607" y1="135.02" x2="610.5" y2="135.02" stroke="#8c8c8c" stroke-width="0.9"/>
<text x="606.9" y="138.62" font-size="9" fill="#e4e4e4" text-anchor="end" textLength="17.2" lengthAdjust="spacingAndGlyphs">0,45</text>
<line x1="929.5" y1="355.6" x2="929.5" y2="358.7" stroke="#8c8c8c" stroke-width="1.2"/>
<text x="929.5" y="367.8" font-size="9" fill="#e4e4e4" text-anchor="middle" textLength="12.4" lengthAdjust="spacingAndGlyphs">0,5</text>
<line x1="607" y1="110.52" x2="610.5" y2="110.52" stroke="#8c8c8c" stroke-width="0.9"/>
<text x="606.9" y="114.12" font-size="9" fill="#e4e4e4" text-anchor="end" textLength="12.4" lengthAdjust="spacingAndGlyphs">0,5</text>
<line x1="961.4" y1="355.6" x2="961.4" y2="358.7" stroke="#8c8c8c" stroke-width="1.2"/>
<text x="961.4" y="367.8" font-size="9" fill="#e4e4e4" text-anchor="middle" textLength="17.2" lengthAdjust="spacingAndGlyphs">0,55</text>
<line x1="607" y1="86.01" x2="610.5" y2="86.01" stroke="#8c8c8c" stroke-width="0.9"/>
<text x="606.9" y="89.61" font-size="9" fill="#e4e4e4" text-anchor="end" textLength="17.2" lengthAdjust="spacingAndGlyphs">0,55</text>
<rect x="840.2" y="336.3" width="152.4" height="15" fill="#333333"/>
<text x="841.3" y="348.3" font-size="12" fill="#f0f0f0" textLength="92.4" lengthAdjust="spacingAndGlyphs">Gamut Coverage:</text>
<text x="940.4" y="348.3" font-size="12" fill="#f0f0f0" textLength="33.4" lengthAdjust="spacingAndGlyphs">96,6%</text>
<rect x="893.45" y="94.4" width="8" height="8" fill="none" stroke="#fff" stroke-width="1.1" stroke-opacity="0.92"/>
<rect x="685.65" y="74.98" width="8" height="8" fill="none" stroke="#fff" stroke-width="1.1" stroke-opacity="0.92"/>
<rect x="717.83" y="273.31" width="8" height="8" fill="none" stroke="#fff" stroke-width="1.1" stroke-opacity="0.92"/>
<rect x="694.15" y="127.45" width="8" height="8" fill="none" stroke="#fff" stroke-width="1.1" stroke-opacity="0.92"/>
<rect x="800.49" y="189.07" width="8" height="8" fill="none" stroke="#fff" stroke-width="1.1" stroke-opacity="0.92"/>
<rect x="736" y="79.68" width="8" height="8" fill="none" stroke="#fff" stroke-width="1.1" stroke-opacity="0.92"/>
<circle cx="896.63" cy="100.5" r="2.3" fill="none" stroke="#111" stroke-width="0.9"/>
<circle cx="690.21" cy="79.67" r="2.3" fill="none" stroke="#111" stroke-width="0.9"/>
<circle cx="727.62" cy="274.91" r="2.3" fill="none" stroke="#111" stroke-width="0.9"/>
<circle cx="699.7" cy="132.5" r="2.3" fill="none" stroke="#111" stroke-width="0.9"/>
<circle cx="805.12" cy="195.56" r="2.3" fill="none" stroke="#111" stroke-width="0.9"/>
<circle cx="739.14" cy="84.1" r="2.3" fill="none" stroke="#111" stroke-width="0.9"/>
<rect x="732.42" y="121.85" width="7.4" height="7.4" fill="#777" stroke="#000" stroke-width="1.2"/>
<circle cx="736.81" cy="125.87" r="2.9" fill="#fff" stroke="#333" stroke-width="0.5"/>
<text x="8.7" y="416" font-size="17.6" fill="#f0f0f0" textLength="131" lengthAdjust="spacingAndGlyphs">Current Reading</text>
<text x="8.7" y="458" font-size="15" fill="#f0f0f0" textLength="61.5" lengthAdjust="spacingAndGlyphs">x: 0,3115</text>
<text x="102.5" y="458" font-size="15" fill="#f0f0f0" textLength="62" lengthAdjust="spacingAndGlyphs">y: 0,3266</text>
<text x="8.7" y="482.5" font-size="15" fill="#f0f0f0" textLength="58" lengthAdjust="spacingAndGlyphs">fL: 119,2</text>
<text x="8.7" y="506.3" font-size="15" fill="#f0f0f0" textLength="95" lengthAdjust="spacingAndGlyphs">cd/m²: 408,41</text>
<text x="279.6" y="396.4" font-size="9" fill="#e4e4e4" text-anchor="middle" textLength="50" lengthAdjust="spacingAndGlyphs">RGB Balance</text>
<rect x="207.2" y="400" width="156.4" height="107.3" fill="#252525"/>
<line x1="207.2" y1="427.4" x2="363.6" y2="427.4" stroke="#8c8c8c" stroke-width="0.9"/>
<line x1="207.2" y1="453.75" x2="363.6" y2="453.75" stroke="#8c8c8c" stroke-width="0.9"/>
<line x1="207.2" y1="480.6" x2="363.6" y2="480.6" stroke="#8c8c8c" stroke-width="0.9"/>
<path d="M207.2 507.3V400H363.6V507.3" fill="none" stroke="#8c8c8c" stroke-width="1"/>
<line x1="207.2" y1="507.3" x2="363.6" y2="507.3" stroke="#8c8c8c" stroke-width="1"/>
<line x1="203.7" y1="400" x2="207.2" y2="400" stroke="#8c8c8c" stroke-width="0.9"/>
<text x="203.4" y="403.6" font-size="9" fill="#e4e4e4" text-anchor="end" textLength="4.5" lengthAdjust="spacingAndGlyphs">4</text>
<line x1="203.7" y1="427.4" x2="207.2" y2="427.4" stroke="#8c8c8c" stroke-width="0.9"/>
<text x="203.4" y="431" font-size="9" fill="#e4e4e4" text-anchor="end" textLength="4.5" lengthAdjust="spacingAndGlyphs">2</text>
<line x1="203.7" y1="453.75" x2="207.2" y2="453.75" stroke="#8c8c8c" stroke-width="0.9"/>
<text x="203.4" y="457.35" font-size="9" fill="#e4e4e4" text-anchor="end" textLength="4.5" lengthAdjust="spacingAndGlyphs">0</text>
<line x1="203.7" y1="480.6" x2="207.2" y2="480.6" stroke="#8c8c8c" stroke-width="0.9"/>
<text x="203.4" y="484.2" font-size="9" fill="#e4e4e4" text-anchor="end" textLength="7.1" lengthAdjust="spacingAndGlyphs">-2</text>
<line x1="203.7" y1="507.3" x2="207.2" y2="507.3" stroke="#8c8c8c" stroke-width="0.9"/>
<text x="203.4" y="510.9" font-size="9" fill="#e4e4e4" text-anchor="end" textLength="7.1" lengthAdjust="spacingAndGlyphs">-4</text>
<line x1="207.2" y1="507.3" x2="207.2" y2="511" stroke="#8c8c8c" stroke-width="0.9"/>
<line x1="363.6" y1="507.3" x2="363.6" y2="511" stroke="#8c8c8c" stroke-width="0.9"/>
<text x="285.3" y="517.2" font-size="9" fill="#e4e4e4" text-anchor="middle" textLength="23" lengthAdjust="spacingAndGlyphs">100W</text>
<rect x="222.5" y="451.2" width="41" height="2.6" fill="url(#g161)" stroke="#0a0a0a" stroke-width="0.8"/>
<rect x="263.5" y="453.75" width="41.5" height="4.6" fill="url(#g162)" stroke="#0a0a0a" stroke-width="0.8"/>
<rect x="305.4" y="422.5" width="41.2" height="31.25" fill="url(#g163)" stroke="#0a0a0a" stroke-width="0.8"/>
<text x="483.3" y="392" font-size="9" fill="#e4e4e4" text-anchor="middle" textLength="46" lengthAdjust="spacingAndGlyphs">CIE 1931 xy</text>
<rect x="380.9" y="394" width="205.4" height="119.1" fill="#777"/>
<g clip-path="url(#xyclip)"><g filter="url(#sm2)">
<rect x="375.5" y="389.6" width="216" height="3.5" fill="url(#g164)"/>
<rect x="375.5" y="392.6" width="216" height="3.5" fill="url(#g165)"/>
<rect x="375.5" y="395.6" width="216" height="3.5" fill="url(#g166)"/>
<rect x="375.5" y="398.6" width="216" height="3.5" fill="url(#g167)"/>
<rect x="375.5" y="401.6" width="216" height="3.5" fill="url(#g168)"/>
<rect x="375.5" y="404.6" width="216" height="3.5" fill="url(#g169)"/>
<rect x="375.5" y="407.6" width="216" height="3.5" fill="url(#g170)"/>
<rect x="375.5" y="410.6" width="216" height="3.5" fill="url(#g171)"/>
<rect x="375.5" y="413.6" width="216" height="3.5" fill="url(#g172)"/>
<rect x="375.5" y="416.6" width="216" height="3.5" fill="url(#g173)"/>
<rect x="375.5" y="419.6" width="216" height="3.5" fill="url(#g174)"/>
<rect x="375.5" y="422.6" width="216" height="3.5" fill="url(#g175)"/>
<rect x="375.5" y="425.6" width="216" height="3.5" fill="url(#g176)"/>
<rect x="375.5" y="428.6" width="216" height="3.5" fill="url(#g177)"/>
<rect x="375.5" y="431.6" width="216" height="3.5" fill="url(#g178)"/>
<rect x="375.5" y="434.6" width="216" height="3.5" fill="url(#g179)"/>
<rect x="375.5" y="437.6" width="216" height="3.5" fill="url(#g180)"/>
<rect x="375.5" y="440.6" width="216" height="3.5" fill="url(#g181)"/>
<rect x="375.5" y="443.6" width="216" height="3.5" fill="url(#g182)"/>
<rect x="375.5" y="446.6" width="216" height="3.5" fill="url(#g183)"/>
<rect x="375.5" y="449.6" width="216" height="3.5" fill="url(#g184)"/>
<rect x="375.5" y="452.6" width="216" height="3.5" fill="url(#g185)"/>
<rect x="375.5" y="455.6" width="216" height="3.5" fill="url(#g186)"/>
<rect x="375.5" y="458.6" width="216" height="3.5" fill="url(#g187)"/>
<rect x="375.5" y="461.6" width="216" height="3.5" fill="url(#g188)"/>
<rect x="375.5" y="464.6" width="216" height="3.5" fill="url(#g189)"/>
<rect x="375.5" y="467.6" width="216" height="3.5" fill="url(#g190)"/>
<rect x="375.5" y="470.6" width="216" height="3.5" fill="url(#g191)"/>
<rect x="375.5" y="473.6" width="216" height="3.5" fill="url(#g192)"/>
<rect x="375.5" y="476.6" width="216" height="3.5" fill="url(#g193)"/>
<rect x="375.5" y="479.6" width="216" height="3.5" fill="url(#g194)"/>
<rect x="375.5" y="482.6" width="216" height="3.5" fill="url(#g195)"/>
<rect x="375.5" y="485.6" width="216" height="3.5" fill="url(#g196)"/>
<rect x="375.5" y="488.6" width="216" height="3.5" fill="url(#g197)"/>
<rect x="375.5" y="491.6" width="216" height="3.5" fill="url(#g198)"/>
<rect x="375.5" y="494.6" width="216" height="3.5" fill="url(#g199)"/>
<rect x="375.5" y="497.6" width="216" height="3.5" fill="url(#g200)"/>
<rect x="375.5" y="500.6" width="216" height="3.5" fill="url(#g201)"/>
<rect x="375.5" y="503.6" width="216" height="3.5" fill="url(#g202)"/>
<rect x="375.5" y="506.6" width="216" height="3.5" fill="url(#g203)"/>
<rect x="375.5" y="509.6" width="216" height="3.5" fill="url(#g204)"/>
<rect x="375.5" y="512.6" width="216" height="3.5" fill="url(#g205)"/>
<rect x="375.5" y="515.6" width="216" height="3.5" fill="url(#g206)"/>
</g></g>
<rect x="478.9" y="448.8" width="8.6" height="8.4" fill="#fff" stroke="#000" stroke-width="1.1"/>
<circle cx="479.2" cy="459.8" r="2.7" fill="#fff" stroke="#444" stroke-width="0.9"/>
<rect x="597" y="386" width="379.2" height="120.3" fill="#3e3e3e"/>
<rect x="597" y="386" width="379.2" height="10" fill="#2b2b2b"/>
<rect x="597" y="396" width="379.2" height="9.6" fill="#1b1b1b"/>
<rect x="597" y="405.6" width="379.2" height="18.6" fill="#464646"/>
<rect x="597" y="424.2" width="379.2" height="18.6" fill="#747474"/>
<rect x="597" y="442.8" width="379.2" height="18.6" fill="#464646"/>
<rect x="597" y="461.4" width="379.2" height="18.6" fill="#747474"/>
<rect x="597" y="480" width="379.2" height="18.6" fill="#464646"/>
<rect x="597" y="498.6" width="379.2" height="7.7" fill="#747474"/>
<rect x="597" y="386" width="8.3" height="19.6" fill="#000"/>
<rect x="597" y="405.6" width="8.3" height="18.6" fill="#2c2c2c"/>
<rect x="597" y="424.2" width="8.3" height="18.6" fill="#252525"/>
<rect x="597" y="442.8" width="8.3" height="18.6" fill="#2c2c2c"/>
<rect x="597" y="461.4" width="8.3" height="18.6" fill="#252525"/>
<rect x="597" y="480" width="8.3" height="18.6" fill="#2c2c2c"/>
<rect x="597" y="498.6" width="8.3" height="7.7" fill="#252525"/>
<g clip-path="url(#tclip)">
<text x="651.3" y="400.1" font-size="10" fill="#f0f0f0" textLength="25.5" lengthAdjust="spacingAndGlyphs">White</text>
<text x="698.8" y="400.1" font-size="10" fill="#f0f0f0" textLength="16.5" lengthAdjust="spacingAndGlyphs">Red</text>
<text x="740.3" y="400.1" font-size="10" fill="#f0f0f0" textLength="27" lengthAdjust="spacingAndGlyphs">Green</text>
<text x="788.5" y="400.1" font-size="10" fill="#f0f0f0" textLength="19.5" lengthAdjust="spacingAndGlyphs">Blue</text>
<text x="830" y="400.1" font-size="10" fill="#f0f0f0" textLength="21.5" lengthAdjust="spacingAndGlyphs">Cyan</text>
<text x="877.6" y="400.1" font-size="10" fill="#f0f0f0" textLength="38" lengthAdjust="spacingAndGlyphs">Magenta</text>
<text x="920.4" y="400.1" font-size="10" fill="#f0f0f0" textLength="27.5" lengthAdjust="spacingAndGlyphs">Yellow</text>
<text x="967.7" y="400.1" font-size="10" fill="#f0f0f0" textLength="24" lengthAdjust="spacingAndGlyphs">100W</text>
<text x="607.9" y="419" font-size="10" fill="#f0f0f0" textLength="35" lengthAdjust="spacingAndGlyphs">x: CIE31</text>
<text x="651.3" y="419" font-size="10" fill="#f0f0f0">0,3118</text>
<text x="698.8" y="419" font-size="10" fill="#f0f0f0">0,6326</text>
<text x="740.3" y="419" font-size="10" fill="#f0f0f0">0,3001</text>
<text x="788.5" y="419" font-size="10" fill="#f0f0f0">0,1581</text>
<text x="830" y="419" font-size="10" fill="#f0f0f0">0,2266</text>
<text x="877.6" y="419" font-size="10" fill="#f0f0f0">0,3188</text>
<text x="920.4" y="419" font-size="10" fill="#f0f0f0">0,4164</text>
<text x="967.7" y="419" font-size="10" fill="#f0f0f0">0,3118</text>
<text x="607.9" y="437.6" font-size="10" fill="#f0f0f0" textLength="35" lengthAdjust="spacingAndGlyphs">y: CIE31</text>
<text x="651.3" y="437.6" font-size="10" fill="#f0f0f0">0,3261</text>
<text x="698.8" y="437.6" font-size="10" fill="#f0f0f0">0,3248</text>
<text x="740.3" y="437.6" font-size="10" fill="#f0f0f0">0,5957</text>
<text x="788.5" y="437.6" font-size="10" fill="#f0f0f0">0,0622</text>
<text x="830" y="437.6" font-size="10" fill="#f0f0f0">0,3250</text>
<text x="877.6" y="437.6" font-size="10" fill="#f0f0f0">0,1506</text>
<text x="920.4" y="437.6" font-size="10" fill="#f0f0f0">0,5051</text>
<text x="967.7" y="437.6" font-size="10" fill="#f0f0f0">0,3261</text>
<text x="607.9" y="456.2" font-size="10" fill="#f0f0f0" textLength="5.5" lengthAdjust="spacingAndGlyphs">Y</text>
<text x="651.3" y="456.2" font-size="10" fill="#f0f0f0">216,0027</text>
<text x="698.8" y="456.2" font-size="10" fill="#f0f0f0">44,9665</text>
<text x="740.3" y="456.2" font-size="10" fill="#f0f0f0">154,8176</text>
<text x="788.5" y="456.2" font-size="10" fill="#f0f0f0">16,6167</text>
<text x="830" y="456.2" font-size="10" fill="#f0f0f0">171,7447</text>
<text x="877.6" y="456.2" font-size="10" fill="#f0f0f0">60,7838</text>
<text x="920.4" y="456.2" font-size="10" fill="#f0f0f0">200,8248</text>
<text x="967.7" y="456.2" font-size="10" fill="#f0f0f0">408,4100</text>
<text x="607.9" y="474.8" font-size="10" fill="#f0f0f0" textLength="36.5" lengthAdjust="spacingAndGlyphs">Target Y</text>
<text x="651.3" y="474.8" font-size="10" fill="#f0f0f0">204,1195</text>
<text x="698.8" y="474.8" font-size="10" fill="#f0f0f0">43,4072</text>
<text x="740.3" y="474.8" font-size="10" fill="#f0f0f0">145,9778</text>
<text x="788.5" y="474.8" font-size="10" fill="#f0f0f0">14,7345</text>
<text x="830" y="474.8" font-size="10" fill="#f0f0f0">160,7122</text>
<text x="877.6" y="474.8" font-size="10" fill="#f0f0f0">58,1417</text>
<text x="920.4" y="474.8" font-size="10" fill="#f0f0f0">189,3850</text>
<text x="967.7" y="474.8" font-size="10" fill="#f0f0f0">408,4100</text>
<text x="607.9" y="493.4" font-size="10" fill="#f0f0f0" textLength="36.5" lengthAdjust="spacingAndGlyphs">ΔE 2000</text>
<text x="651.3" y="493.4" font-size="10" fill="#f0f0f0">1,9640</text>
<text x="698.8" y="493.4" font-size="10" fill="#f0f0f0">2,4962</text>
<text x="740.3" y="493.4" font-size="10" fill="#f0f0f0">1,3146</text>
<text x="788.5" y="493.4" font-size="10" fill="#f0f0f0">1,7021</text>
<text x="830" y="493.4" font-size="10" fill="#f0f0f0">1,7682</text>
<text x="877.6" y="493.4" font-size="10" fill="#f0f0f0">1,1636</text>
<text x="920.4" y="493.4" font-size="10" fill="#f0f0f0">1,4218</text>
<text x="967.7" y="493.4" font-size="10" fill="#f0f0f0">1,3600</text>
<text x="607.9" y="512" font-size="10" fill="#f0f0f0" textLength="25" lengthAdjust="spacingAndGlyphs">dEITP</text>
<text x="651.3" y="512" font-size="10" fill="#f0f0f0">4,4939</text>
<text x="698.8" y="512" font-size="10" fill="#f0f0f0">9,8543</text>
<text x="740.3" y="512" font-size="10" fill="#f0f0f0">4,5866</text>
<text x="788.5" y="512" font-size="10" fill="#f0f0f0">10,1343</text>
<text x="830" y="512" font-size="10" fill="#f0f0f0">5,4553</text>
<text x="877.6" y="512" font-size="10" fill="#f0f0f0">4,4863</text>
<text x="920.4" y="512" font-size="10" fill="#f0f0f0">4,6314</text>
<text x="967.7" y="512" font-size="10" fill="#f0f0f0">3,0100</text>
</g>
<rect x="976.2" y="405.6" width="9.6" height="100.7" fill="#5c5c5c"/>
<rect x="976.6" y="405.8" width="8.8" height="10" rx="1" fill="#888888"/><path d="M978.4 412.6l2.6-3.4 2.6 3.4z" fill="#3c3c3c"/>
<rect x="976.6" y="495.2" width="8.8" height="10.6" rx="1" fill="#888888"/><path d="M978.4 498.6l2.6 3.4 2.6-3.4z" fill="#3c3c3c"/>
<rect x="977.2" y="418.4" width="7.6" height="62.6" rx="3.5" fill="#3c3c3c"/>
<rect x="605.6" y="506.3" width="370.4" height="11.2" fill="#555555"/>
<rect x="605.8" y="506.6" width="9.6" height="10.6" rx="1" fill="#888888"/><path d="M613 508.6v6.6l-4-3.3z" fill="#3c3c3c"/>
<rect x="966.6" y="506.6" width="9.4" height="10.6" rx="1" fill="#888888"/><path d="M969.4 508.6v6.6l4-3.3z" fill="#3c3c3c"/>
<rect x="617" y="507.4" width="316.6" height="9" rx="4.2" fill="#3e3e3e"/>
<rect x="0" y="522.5" width="1000" height="24.5" fill="url(#g207)"/>
<rect x="1" y="522.8" width="58.3" height="25" rx="1.5" fill="url(#g208)"/>
<rect x="2.9" y="525.6" width="54.6" height="13.4" rx="1" fill="#c0c0c0"/>
<text x="30.2" y="545.2" font-size="4.4" fill="#1e1e1e" text-anchor="middle" textLength="11" lengthAdjust="spacingAndGlyphs">White</text>
<rect x="60.3" y="522.8" width="58.3" height="25" rx="1.5" fill="url(#g208)"/>
<rect x="62.2" y="525.6" width="54.6" height="13.4" rx="1" fill="#be0000"/>
<text x="89.5" y="545.2" font-size="4.4" fill="#1e1e1e" text-anchor="middle" textLength="6.6" lengthAdjust="spacingAndGlyphs">Red</text>
<rect x="119.6" y="522.8" width="58.3" height="25" rx="1.5" fill="url(#g208)"/>
<rect x="121.5" y="525.6" width="54.6" height="13.4" rx="1" fill="#00be00"/>
<text x="148.8" y="545.2" font-size="4.4" fill="#1e1e1e" text-anchor="middle" textLength="11" lengthAdjust="spacingAndGlyphs">Green</text>
<rect x="178.9" y="522.8" width="58.3" height="25" rx="1.5" fill="url(#g208)"/>
<rect x="180.8" y="525.6" width="54.6" height="13.4" rx="1" fill="#0000be"/>
<text x="208.1" y="545.2" font-size="4.4" fill="#1e1e1e" text-anchor="middle" textLength="8.8" lengthAdjust="spacingAndGlyphs">Blue</text>
<rect x="238.2" y="522.8" width="58.3" height="25" rx="1.5" fill="url(#g208)"/>
<rect x="240.1" y="525.6" width="54.6" height="13.4" rx="1" fill="#00bebe"/>
<text x="267.4" y="545.2" font-size="4.4" fill="#1e1e1e" text-anchor="middle" textLength="8.8" lengthAdjust="spacingAndGlyphs">Cyan</text>
<rect x="297.5" y="522.8" width="58.3" height="25" rx="1.5" fill="url(#g208)"/>
<rect x="299.4" y="525.6" width="54.6" height="13.4" rx="1" fill="#be00be"/>
<text x="326.7" y="545.2" font-size="4.4" fill="#1e1e1e" text-anchor="middle" textLength="15.4" lengthAdjust="spacingAndGlyphs">Magenta</text>
<rect x="356.8" y="522.8" width="58.3" height="25" rx="1.5" fill="url(#g208)"/>
<rect x="358.7" y="525.6" width="54.6" height="13.4" rx="1" fill="#bebe00"/>
<text x="386" y="545.2" font-size="4.4" fill="#1e1e1e" text-anchor="middle" textLength="13.2" lengthAdjust="spacingAndGlyphs">Yellow</text>
<rect x="416.1" y="522.8" width="58.3" height="25" rx="1.5" fill="#1c1c1c"/>
<rect x="418" y="525.6" width="54.6" height="13.4" rx="1" fill="#ffffff"/>
<text x="445.3" y="545.2" font-size="4.4" fill="#fff" text-anchor="middle" textLength="8.8" lengthAdjust="spacingAndGlyphs">100W</text>
<rect x="874" y="523" width="18.4" height="7" rx="1.2" fill="url(#g209)" stroke="#4a4a4a" stroke-width="0.5"/>
<ellipse cx="883.2" cy="526.2" rx="2.2" ry="1.4" fill="#c8c8c8"/><ellipse cx="883.2" cy="526.2" rx="1" ry="0.7" fill="#444"/>
<rect x="874" y="530.2" width="18.4" height="17" rx="1.2" fill="url(#g210)" stroke="#4a4a4a" stroke-width="0.5"/>
<rect x="877.6" y="533" width="11" height="12" rx="2" fill="#b0b0b0" stroke="#333" stroke-width="0.9"/><rect x="880.4" y="536.2" width="5.6" height="5.4" fill="#0a0a0a"/>
<rect x="893.1" y="523" width="18.3" height="11.6" rx="1.2" fill="url(#g209)" stroke="#4a4a4a" stroke-width="0.5"/>
<circle cx="902.25" cy="528.6" r="3.3" fill="#bcbcbc" stroke="#8a8a8a" stroke-width="0.4"/>
<rect x="900.65" y="527" width="3.2" height="3.2" rx="0.6" fill="#222"/>
<rect x="911.4" y="523" width="17.4" height="11.6" rx="1.2" fill="url(#g209)" stroke="#4a4a4a" stroke-width="0.5"/>
<circle cx="920.1" cy="528.6" r="3.3" fill="#bcbcbc" stroke="#8a8a8a" stroke-width="0.4"/>
<path d="M919.1 526.8v3.6l2.8-1.8z" fill="#222"/>
<rect x="928.8" y="523" width="17.9" height="11.6" rx="1.2" fill="url(#g209)" stroke="#4a4a4a" stroke-width="0.5"/>
<circle cx="937.75" cy="528.6" r="3.3" fill="#bcbcbc" stroke="#8a8a8a" stroke-width="0.4"/>
<path d="M936.55 526.8v3.6M938.95 526.8v3.6M936.55 528.6h2.4" stroke="#222" stroke-width="0.8" fill="none"/>
<rect x="946.7" y="523" width="16.6" height="11.6" rx="1.2" fill="url(#g209)" stroke="#4a4a4a" stroke-width="0.5"/>
<circle cx="955" cy="528.6" r="3.3" fill="#bcbcbc" stroke="#8a8a8a" stroke-width="0.4"/>
<ellipse cx="955" cy="528.4" rx="2" ry="1.2" fill="none" stroke="#333" stroke-width="0.7"/>
<rect x="963.3" y="523" width="17.9" height="11.6" rx="1.2" fill="url(#g209)" stroke="#4a4a4a" stroke-width="0.5"/>
<circle cx="972.25" cy="528.6" r="3.3" fill="#bcbcbc" stroke="#8a8a8a" stroke-width="0.4"/>
<path d="M970.95 527.6h2.6M970.95 529.8h2.6" stroke="#222" stroke-width="0.9" fill="none"/>
<rect x="893.1" y="535" width="53.7" height="12.5" rx="1.2" fill="url(#g209)" stroke="#4a4a4a" stroke-width="0.5"/>
<rect x="946.9" y="535" width="53.6" height="12.5" rx="1.2" fill="url(#g209)" stroke="#4a4a4a" stroke-width="0.5"/>
<circle cx="905" cy="541.2" r="3" fill="#b8b8b8"/><circle cx="988.4" cy="541.2" r="3" fill="#b8b8b8"/>
<text x="905" y="542.8" font-size="5" fill="#333" text-anchor="middle">«</text>
<text x="988.4" y="542.8" font-size="5" fill="#333" text-anchor="middle">»</text>
<text x="925" y="544.3" font-size="8.6" fill="#262626" text-anchor="middle" textLength="19.5" lengthAdjust="spacingAndGlyphs">Back</text>
<text x="966.5" y="544.3" font-size="8.6" fill="#262626" text-anchor="middle" textLength="19.5" lengthAdjust="spacingAndGlyphs">Next</text>
<text x="988.8" y="543.9" font-size="31" fill="#ee0000" text-anchor="middle">*</text>
</svg>
</body></html>
